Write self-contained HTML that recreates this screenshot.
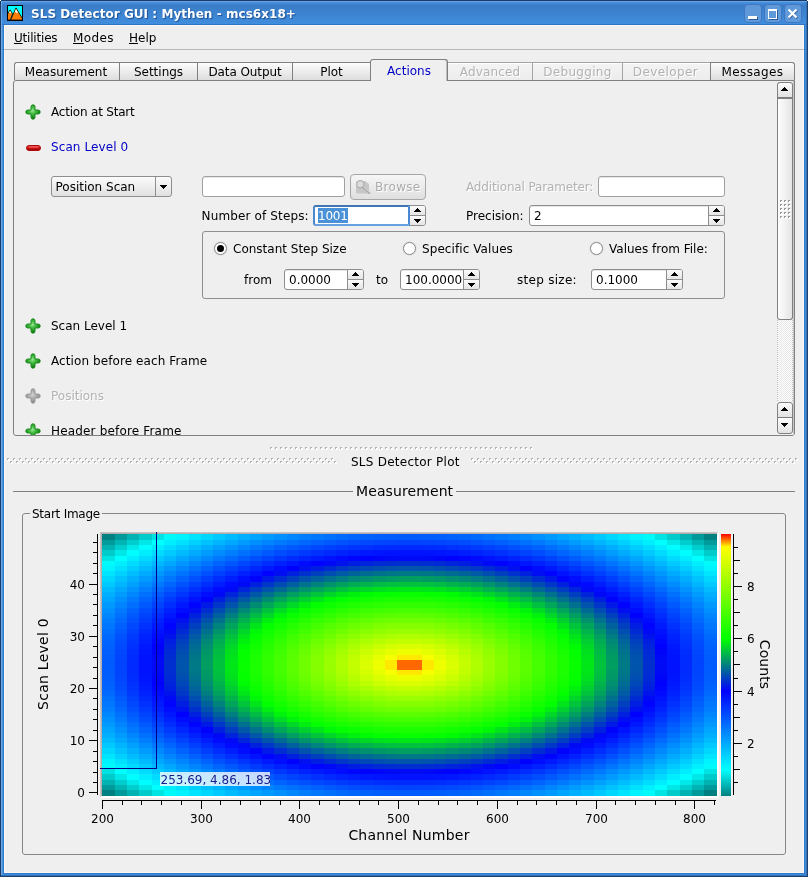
<!DOCTYPE html>
<html><head><meta charset="utf-8"><title>SLS Detector GUI</title>
<style>
html,body{margin:0;padding:0;}
body{will-change:transform;width:808px;height:877px;position:relative;overflow:hidden;background:#efefef;font-family:"DejaVu Sans","Liberation Sans",sans-serif;font-size:12px;color:#000;}
.a{position:absolute;}
.t{position:absolute;white-space:nowrap;line-height:14px;height:14px;}
#titlebar{left:0;top:0;width:808px;height:25px;background:linear-gradient(#1c3a63 0,#1c3a63 1px,#63a5ea 1px,#63a5ea 2px,#4791df 2px,#4489d5 3.5px,#3a7cc6 5.5px,#408ddd 23.5px,#408ddd 24px,#2e73c4 24px,#2e73c4 25px);}
#title{left:31px;top:7px;color:#fff;font-weight:bold;text-shadow:1px 1px 1px #1d4f93;letter-spacing:0.05px;}
.wb{position:absolute;top:4px;width:18px;height:19px;box-sizing:border-box;border:1px solid #3f78c2;border-radius:4px;background:#6099d9;}
.tab{position:absolute;top:62px;height:18px;box-sizing:border-box;border-left:1px solid #808080;border-top:1px solid #808080;background:linear-gradient(#fcfcfc,#dddddd);text-align:center;line-height:14px;padding-top:2px;}
.dis{color:#b2b2b2;text-shadow:1px 1px 0 #fff;}
.tab.dis{background:linear-gradient(#f4f4f4,#ececec);border-color:#a4a4a4;box-shadow:inset 0 1px 0 #fff;}
.le{position:absolute;box-sizing:border-box;border:1px solid #a0a0a0;border-radius:3px;background:#fff;height:21px;box-shadow:inset 0 1px 0 #e6e6e6;}
.sp{position:absolute;box-sizing:border-box;border:1px solid #8e8e8e;border-radius:3px;background:#fff;height:21px;box-shadow:inset 0 1px 0 #e6e6e6;}
.sp .b{position:absolute;right:0;top:0;width:15px;height:19px;border-left:1px solid #8e8e8e;background:linear-gradient(#fbfbfb 0,#e4e4e4 9px,#8e8e8e 9px,#8e8e8e 10px,#fbfbfb 10px,#e4e4e4 19px);border-radius:0 2px 2px 0;}
.sp .b svg{position:absolute;left:0;top:0;}
.sp .v{position:absolute;left:4px;top:3px;line-height:14px;}
.rb{position:absolute;width:13px;height:13px;box-sizing:border-box;border:1px solid #8a8a8a;border-radius:50%;background:#fff;box-shadow:0 0 1px 0.5px #d6d6d6;}
.plus{position:absolute;width:16px;height:16px;}
</style></head><body>
<div class="a" id="titlebar"></div>
<!-- window frame -->
<div class="a" style="left:0;top:1px;width:1px;height:876px;background:#1b3b63"></div>
<div class="a" style="left:1px;top:25px;width:1px;height:850px;background:#67a8ea"></div>
<div class="a" style="left:2px;top:25px;width:1px;height:849px;background:#4a92df"></div>
<div class="a" style="left:3px;top:25px;width:1px;height:848px;background:#2f7ccb"></div>
<div class="a" style="left:4px;top:25px;width:800px;height:848px;box-sizing:border-box;border:1px solid #fbf8f4"></div>
<div class="a" style="left:804px;top:25px;width:1px;height:848px;background:#2f7ccb"></div>
<div class="a" style="left:805px;top:25px;width:1px;height:849px;background:#418ddc"></div>
<div class="a" style="left:806px;top:2px;width:1px;height:873px;background:#3271b5"></div>
<div class="a" style="left:807px;top:1px;width:1px;height:876px;background:#1f426c"></div>
<div class="a" style="left:3px;top:873px;width:802px;height:1px;background:#2f7ccb"></div>
<div class="a" style="left:2px;top:874px;width:804px;height:1px;background:#418ddc"></div>
<div class="a" style="left:1px;top:875px;width:806px;height:1px;background:#3271b5"></div>
<div class="a" style="left:0;top:876px;width:808px;height:1px;background:#1f426c"></div>
<div class="a" style="left:1px;top:2px;width:1px;height:23px;background:#67a8ea"></div>

<div class="t" id="title">SLS Detector GUI : Mythen - mcs6x18+</div>
<svg class="a" style="left:7px;top:5px" width="16" height="16" viewBox="0 0 16 16"><rect width="16" height="16" fill="#000"/><rect x="1" y="1" width="14" height="14" fill="#00ffff"/><path d="M0.5 9.2 L3.1 4.9 L5.5 9 L3.4 15 H0.5 Z" fill="#ff8000" stroke="#000" stroke-width="0.8"/><path d="M3.6 15 L9 2.9 L15.4 13.6 V15 Z" fill="#ff8000" stroke="#000" stroke-width="0.8"/><path d="M9 4 L7.5 7.4 L8.7 7 L9.7 8.2 L10.7 7.8 L11 7.4 Z" fill="#fff"/><path d="M3.1 5.8 L1.8 8.2 L3 7.8 L3.9 8.4 L4.4 8 Z" fill="#fff"/><path d="M0.5 0.5H15.5V15.5H0.5Z" fill="none" stroke="#000" stroke-width="1"/></svg>
<div class="wb" style="left:744px"><div class="a" style="left:3px;top:10.5px;width:9px;height:3px;background:#fff;box-shadow:1px 1px 0 #2c5c9e"></div></div>
<div class="wb" style="left:764px"><div class="a" style="left:3px;top:3.5px;width:9px;height:10px;box-sizing:border-box;border:1px solid #fff;border-top-width:2px;box-shadow:1px 1px 0 #2c5c9e"></div></div>
<div class="wb" style="left:784px"><svg class="a" style="left:2px;top:3px" width="12" height="12"><path d="M2.2 2.2L10.2 10.2M10.2 2.2L2.2 10.2" stroke="#2c5c9e" stroke-width="2.2"/><path d="M1.5 1.5L9.5 9.5M9.5 1.5L1.5 9.5" stroke="#fff" stroke-width="2.2"/></svg></div>
<div class="a" style="left:0;top:0;width:1px;height:1px;background:#fff"></div><div class="a" style="left:807px;top:0;width:1px;height:1px;background:#fff"></div>

<!-- menu -->
<div class="t" style="left:14px;top:31px;letter-spacing:-0.2px"><u>U</u>tilities</div>
<div class="t" style="left:73px;top:31px;letter-spacing:0.4px"><u>M</u>odes</div>
<div class="t" style="left:129px;top:31px"><u>H</u>elp</div>
<div class="a" style="left:4px;top:49px;width:800px;height:1px;background:#b9b9b9"></div>

<!-- tab pane -->
<div class="a" style="left:13px;top:80px;width:782px;height:356px;box-sizing:border-box;border:1px solid #808080;border-radius:3px 0 3px 3px"></div>
<div class="tab" style="left:14px;width:105px;border-radius:3px 0 0 0;padding-right:2px">Measurement</div>
<div class="tab" style="left:119px;width:78px">Settings</div>
<div class="tab" style="left:197px;width:95px;letter-spacing:-0.1px">Data Output</div>
<div class="tab" style="left:292px;width:78px">Plot</div>
<div class="tab dis" style="left:447px;width:85px;letter-spacing:0.15px">Advanced</div>
<div class="tab dis" style="left:532px;width:90px;letter-spacing:0.3px">Debugging</div>
<div class="tab dis" style="left:622px;width:88px;letter-spacing:0.4px;padding-right:2px">Developer</div>
<div class="tab" style="left:710px;width:85px;border-right:1px solid #808080;border-radius:0 3px 0 0;letter-spacing:0.4px">Messages</div>
<div class="tab" style="left:370px;top:59px;width:78px;height:22px;background:#efefef;border-right:1px solid #808080;border-radius:3px 3px 0 0;color:#0000c8;padding-top:4px;box-shadow:inset -1px 0 0 #bdbdbd">Actions</div>

<!-- content -->
<div class="t" style="left:51px;top:105px;letter-spacing:-0.2px">Action at Start</div>
<div class="t" style="left:51px;top:140px;color:#0000c8;letter-spacing:0.1px">Scan Level 0</div>
<div class="t" style="left:51px;top:319px">Scan Level 1</div>
<div class="t" style="left:51px;top:354px;letter-spacing:0.09px">Action before each Frame</div>
<div class="t dis" style="left:51px;top:389px">Positions</div>
<div class="t" style="left:51px;top:424px;height:11px;overflow:hidden;letter-spacing:0.17px">Header before Frame</div>
<svg width="0" height="0" style="position:absolute"><defs><radialGradient id="gp" gradientUnits="userSpaceOnUse" cx="7.4" cy="6.6" r="8"><stop offset="0" stop-color="#9be895"/><stop offset="0.35" stop-color="#4cc04a"/><stop offset="0.75" stop-color="#1f9a22"/><stop offset="1" stop-color="#0e7412"/></radialGradient><radialGradient id="gg" gradientUnits="userSpaceOnUse" cx="7.4" cy="6.6" r="8"><stop offset="0" stop-color="#d2d2d2"/><stop offset="0.35" stop-color="#b6b6b6"/><stop offset="0.75" stop-color="#9c9c9c"/><stop offset="1" stop-color="#8a8a8a"/></radialGradient><linearGradient id="gm" x1="0" y1="0" x2="0" y2="1"><stop offset="0" stop-color="#f05050"/><stop offset="0.5" stop-color="#d41414"/><stop offset="1" stop-color="#8e0000"/></linearGradient></defs></svg>
<svg class="a" style="left:25px;top:104px" width="16" height="16" viewBox="0 0 16 16"><path d="M8 0.8a2 2 0 0 1 2 2v3.2h3.2a2 2 0 0 1 0 4h-3.2v3.2a2 2 0 0 1 -4 0v-3.2h-3.2a2 2 0 0 1 0 -4h3.2v-3.2a2 2 0 0 1 2 -2z" fill="url(#gp)" stroke="#1f8a1f" stroke-width="1"/></svg>
<svg class="a" style="left:26px;top:145px" width="15" height="6"><rect x="0.5" y="0.5" width="14" height="5" rx="2.5" fill="url(#gm)" stroke="#a80c0c" stroke-width="1"/><path d="M3 2h9" stroke="#f88" stroke-width="1" opacity="0.7"/></svg>
<svg class="a" style="left:25px;top:318px" width="16" height="16" viewBox="0 0 16 16"><path d="M8 0.8a2 2 0 0 1 2 2v3.2h3.2a2 2 0 0 1 0 4h-3.2v3.2a2 2 0 0 1 -4 0v-3.2h-3.2a2 2 0 0 1 0 -4h3.2v-3.2a2 2 0 0 1 2 -2z" fill="url(#gp)" stroke="#1f8a1f" stroke-width="1"/></svg>
<svg class="a" style="left:25px;top:353px" width="16" height="16" viewBox="0 0 16 16"><path d="M8 0.8a2 2 0 0 1 2 2v3.2h3.2a2 2 0 0 1 0 4h-3.2v3.2a2 2 0 0 1 -4 0v-3.2h-3.2a2 2 0 0 1 0 -4h3.2v-3.2a2 2 0 0 1 2 -2z" fill="url(#gp)" stroke="#1f8a1f" stroke-width="1"/></svg>
<svg class="a" style="left:25px;top:388px" width="16" height="16" viewBox="0 0 16 16"><path d="M8 0.8a2 2 0 0 1 2 2v3.2h3.2a2 2 0 0 1 0 4h-3.2v3.2a2 2 0 0 1 -4 0v-3.2h-3.2a2 2 0 0 1 0 -4h3.2v-3.2a2 2 0 0 1 2 -2z" fill="url(#gg)" stroke="#989898" stroke-width="1"/></svg>
<svg class="a" style="left:25px;top:423px" width="16" height="12" viewBox="0 0 16 12"><path d="M8 0.8a2 2 0 0 1 2 2v3.2h3.2a2 2 0 0 1 0 4h-3.2v3.2a2 2 0 0 1 -4 0v-3.2h-3.2a2 2 0 0 1 0 -4h3.2v-3.2a2 2 0 0 1 2 -2z" fill="url(#gp)" stroke="#1f8a1f" stroke-width="1"/></svg>

<!-- combo -->
<div class="a" style="left:51px;top:176px;width:121px;height:21px;box-sizing:border-box;border:1px solid #8e8e8e;border-radius:3px;background:linear-gradient(#fbfbfb,#e1e1e1)"></div>
<div class="a" style="left:155px;top:177px;width:1px;height:19px;background:#8e8e8e"></div>
<svg class="a" style="left:160px;top:185px" width="7" height="4" shape-rendering="crispEdges"><path d="M0 0h7v1h-7zM1 1h5v1h-5zM2 2h3v1h-3zM3 3h1v1h-1z" fill="#000"/></svg>
<div class="t" style="left:55.5px;top:180px">Position Scan</div>

<div class="le" style="left:202px;top:176px;width:143px"></div>
<!-- browse -->
<div class="a" style="left:350px;top:174px;width:76px;height:26px;box-sizing:border-box;border:1px solid #a6a6a6;border-radius:4px;background:linear-gradient(#f6f6f6,#dfdfdf)"></div>
<div class="t dis" style="left:375px;top:180px;letter-spacing:0.3px;color:#acacac">Browse</div>
<svg class="a" style="left:355px;top:179px" width="16" height="16" viewBox="0 0 16 16"><path d="M1 3.5 Q1 2 2.5 2 H10 L14 5 V13 Q14 14.5 12.5 14.5 H2.5 Q1 14.5 1 13 Z" fill="#c6c6c6"/><circle cx="5.3" cy="5.3" r="3.6" fill="#dcdcdc" stroke="#b0b0b0" stroke-width="1.2"/><path d="M8 8 L14.5 14" stroke="#aaa" stroke-width="2" stroke-linecap="round"/><path d="M8.6 7.6 L14.8 13.4" stroke="#e9e9e9" stroke-width="0.8"/></svg>

<div class="t dis" style="left:466px;top:180px;letter-spacing:-0.15px">Additional Parameter:</div>
<div class="le" style="left:598px;top:176px;width:127px"></div>

<div class="t" style="left:201.6px;top:209px;letter-spacing:0.13px">Number of Steps:</div>
<!-- focused spin -->
<div class="sp" style="left:313px;top:205px;width:113px"><div class="b"><svg width="15" height="19" shape-rendering="crispEdges"><path d="M7 2h1v1h-1zM6 3h3v1h-3zM5 4h5v1h-5zM4 5h7v1h-7zM4 13h7v1h-7zM5 14h5v1h-5zM6 15h3v1h-3zM7 16h1v1h-1z" fill="#000"/></svg></div></div>
<div class="a" style="left:313px;top:205px;width:97px;height:21px;box-sizing:border-box;border:2px solid #4a88d0;border-top-color:#3f76b4;border-bottom-color:#69a2e2;border-radius:3px 0 0 3px;background:#fff"></div>
<div class="a" style="left:318px;top:208px;width:30px;height:15px;background:#4b91d8"></div>
<div class="t" style="left:318px;top:209px;color:#fff;letter-spacing:-0.25px">1001</div>

<div class="t" style="left:466px;top:209px">Precision:</div>
<div class="sp" style="left:529px;top:205px;width:196px"><div class="v">2</div><div class="b"><svg width="15" height="19" shape-rendering="crispEdges"><path d="M7 2h1v1h-1zM6 3h3v1h-3zM5 4h5v1h-5zM4 5h7v1h-7zM4 13h7v1h-7zM5 14h5v1h-5zM6 15h3v1h-3zM7 16h1v1h-1z" fill="#000"/></svg></div></div>

<!-- group -->
<div class="a" style="left:202px;top:231px;width:523px;height:68px;box-sizing:border-box;border:1px solid #8e8e8e;border-radius:3px"></div>
<div class="rb" style="left:214px;top:242px"><div class="a" style="left:2px;top:2px;width:7px;height:7px;border-radius:50%;background:#000"></div></div>
<div class="t" style="left:233px;top:242px">Constant Step Size</div>
<div class="rb" style="left:403px;top:242px"></div>
<div class="t" style="left:422px;top:242px;letter-spacing:0.08px">Specific Values</div>
<div class="rb" style="left:590px;top:242px"></div>
<div class="t" style="left:609px;top:242px">Values from File:</div>
<div class="t" style="left:244px;top:273px">from</div>
<div class="sp" style="left:284px;top:269px;width:80px"><div class="v">0.0000</div><div class="b"><svg width="15" height="19" shape-rendering="crispEdges"><path d="M7 2h1v1h-1zM6 3h3v1h-3zM5 4h5v1h-5zM4 5h7v1h-7zM4 13h7v1h-7zM5 14h5v1h-5zM6 15h3v1h-3zM7 16h1v1h-1z" fill="#000"/></svg></div></div>
<div class="t" style="left:376px;top:273px">to</div>
<div class="sp" style="left:400px;top:269px;width:80px"><div class="v">100.0000</div><div class="b"><svg width="15" height="19" shape-rendering="crispEdges"><path d="M7 2h1v1h-1zM6 3h3v1h-3zM5 4h5v1h-5zM4 5h7v1h-7zM4 13h7v1h-7zM5 14h5v1h-5zM6 15h3v1h-3zM7 16h1v1h-1z" fill="#000"/></svg></div></div>
<div class="t" style="left:517px;top:273px;letter-spacing:0.28px">step size:</div>
<div class="sp" style="left:591px;top:269px;width:92px"><div class="v">0.1000</div><div class="b"><svg width="15" height="19" shape-rendering="crispEdges"><path d="M7 2h1v1h-1zM6 3h3v1h-3zM5 4h5v1h-5zM4 5h7v1h-7zM4 13h7v1h-7zM5 14h5v1h-5zM6 15h3v1h-3zM7 16h1v1h-1z" fill="#000"/></svg></div></div>

<!-- scrollbar -->
<div class="a" style="left:777px;top:82px;width:16px;height:352px;background:conic-gradient(#e6e6e6 25%,#ffffff 0 50%,#e6e6e6 0 75%,#ffffff 0) 0 0/2px 2px"></div>
<div class="a" style="left:777px;top:320px;width:1px;height:82px;background:repeating-linear-gradient(#c4c4c4 0,#c4c4c4 1px,#f4f4f4 1px,#f4f4f4 2px)"></div>
<div class="a" style="left:792px;top:320px;width:1px;height:82px;background:repeating-linear-gradient(#c4c4c4 0,#c4c4c4 1px,#f4f4f4 1px,#f4f4f4 2px)"></div>
<div class="a" style="left:793px;top:81px;width:1px;height:354px;background:#c6c6c6"></div>
<div style="position:absolute;left:777px;width:16px;box-sizing:border-box;border:1px solid #808080;background:linear-gradient(#fcfcfc,#e2e2e2);top:82px;height:17px;border-bottom-width:2px;border-radius:3px 3px 0 0"><svg class="a" style="left:3px;top:4px" width="7" height="4" shape-rendering="crispEdges"><path d="M3 0h1v1h-1zM2 1h3v1h-3zM1 2h5v1h-5zM0 3h7v1h-7z" fill="#000"/></svg></div>
<div style="position:absolute;left:777px;width:16px;box-sizing:border-box;border:1px solid #808080;background:linear-gradient(#fcfcfc,#e2e2e2);top:99px;height:221px;border-top:none;border-radius:0 0 3px 3px;background:linear-gradient(90deg,#fefefe,#e4e4e4)"></div>
<svg class="a" style="left:778px;top:198px" width="14" height="22" shape-rendering="crispEdges"><rect x="2" y="2" width="2" height="2" fill="#9a9a9a"/><rect x="3" y="3" width="2" height="2" fill="#fff"/><rect x="6" y="2" width="2" height="2" fill="#9a9a9a"/><rect x="7" y="3" width="2" height="2" fill="#fff"/><rect x="10" y="2" width="2" height="2" fill="#9a9a9a"/><rect x="11" y="3" width="2" height="2" fill="#fff"/><rect x="2" y="6" width="2" height="2" fill="#9a9a9a"/><rect x="3" y="7" width="2" height="2" fill="#fff"/><rect x="6" y="6" width="2" height="2" fill="#9a9a9a"/><rect x="7" y="7" width="2" height="2" fill="#fff"/><rect x="10" y="6" width="2" height="2" fill="#9a9a9a"/><rect x="11" y="7" width="2" height="2" fill="#fff"/><rect x="2" y="10" width="2" height="2" fill="#9a9a9a"/><rect x="3" y="11" width="2" height="2" fill="#fff"/><rect x="6" y="10" width="2" height="2" fill="#9a9a9a"/><rect x="7" y="11" width="2" height="2" fill="#fff"/><rect x="10" y="10" width="2" height="2" fill="#9a9a9a"/><rect x="11" y="11" width="2" height="2" fill="#fff"/><rect x="2" y="14" width="2" height="2" fill="#9a9a9a"/><rect x="3" y="15" width="2" height="2" fill="#fff"/><rect x="6" y="14" width="2" height="2" fill="#9a9a9a"/><rect x="7" y="15" width="2" height="2" fill="#fff"/><rect x="10" y="14" width="2" height="2" fill="#9a9a9a"/><rect x="11" y="15" width="2" height="2" fill="#fff"/><rect x="2" y="18" width="2" height="2" fill="#9a9a9a"/><rect x="3" y="19" width="2" height="2" fill="#fff"/><rect x="6" y="18" width="2" height="2" fill="#9a9a9a"/><rect x="7" y="19" width="2" height="2" fill="#fff"/><rect x="10" y="18" width="2" height="2" fill="#9a9a9a"/><rect x="11" y="19" width="2" height="2" fill="#fff"/></svg>
<div style="position:absolute;left:777px;width:16px;box-sizing:border-box;border:1px solid #808080;background:linear-gradient(#fcfcfc,#e2e2e2);top:402px;height:16px;border-radius:3px 3px 0 0"><svg class="a" style="left:3px;top:4px" width="7" height="4" shape-rendering="crispEdges"><path d="M3 0h1v1h-1zM2 1h3v1h-3zM1 2h5v1h-5zM0 3h7v1h-7z" fill="#000"/></svg></div>
<div style="position:absolute;left:777px;width:16px;box-sizing:border-box;border:1px solid #808080;background:linear-gradient(#fcfcfc,#e2e2e2);top:417px;height:17px;border-radius:0 0 3px 3px"><svg class="a" style="left:3px;top:5px" width="7" height="4" shape-rendering="crispEdges"><path d="M0 0h7v1h-7zM1 1h5v1h-5zM2 2h3v1h-3zM3 3h1v1h-1z" fill="#000"/></svg></div>

<!-- dock title -->
<svg class="a" style="left:270px;top:447px" width="266" height="3" shape-rendering="crispEdges"><rect x="0" y="0" width="2" height="2" fill="#b2b2b2"/><rect x="1" y="1" width="2" height="2" fill="#fff"/><rect x="5" y="0" width="2" height="2" fill="#b2b2b2"/><rect x="6" y="1" width="2" height="2" fill="#fff"/><rect x="10" y="0" width="2" height="2" fill="#b2b2b2"/><rect x="11" y="1" width="2" height="2" fill="#fff"/><rect x="15" y="0" width="2" height="2" fill="#b2b2b2"/><rect x="16" y="1" width="2" height="2" fill="#fff"/><rect x="20" y="0" width="2" height="2" fill="#b2b2b2"/><rect x="21" y="1" width="2" height="2" fill="#fff"/><rect x="25" y="0" width="2" height="2" fill="#b2b2b2"/><rect x="26" y="1" width="2" height="2" fill="#fff"/><rect x="30" y="0" width="2" height="2" fill="#b2b2b2"/><rect x="31" y="1" width="2" height="2" fill="#fff"/><rect x="35" y="0" width="2" height="2" fill="#b2b2b2"/><rect x="36" y="1" width="2" height="2" fill="#fff"/><rect x="40" y="0" width="2" height="2" fill="#b2b2b2"/><rect x="41" y="1" width="2" height="2" fill="#fff"/><rect x="45" y="0" width="2" height="2" fill="#b2b2b2"/><rect x="46" y="1" width="2" height="2" fill="#fff"/><rect x="50" y="0" width="2" height="2" fill="#b2b2b2"/><rect x="51" y="1" width="2" height="2" fill="#fff"/><rect x="55" y="0" width="2" height="2" fill="#b2b2b2"/><rect x="56" y="1" width="2" height="2" fill="#fff"/><rect x="60" y="0" width="2" height="2" fill="#b2b2b2"/><rect x="61" y="1" width="2" height="2" fill="#fff"/><rect x="65" y="0" width="2" height="2" fill="#b2b2b2"/><rect x="66" y="1" width="2" height="2" fill="#fff"/><rect x="70" y="0" width="2" height="2" fill="#b2b2b2"/><rect x="71" y="1" width="2" height="2" fill="#fff"/><rect x="75" y="0" width="2" height="2" fill="#b2b2b2"/><rect x="76" y="1" width="2" height="2" fill="#fff"/><rect x="80" y="0" width="2" height="2" fill="#b2b2b2"/><rect x="81" y="1" width="2" height="2" fill="#fff"/><rect x="85" y="0" width="2" height="2" fill="#b2b2b2"/><rect x="86" y="1" width="2" height="2" fill="#fff"/><rect x="90" y="0" width="2" height="2" fill="#b2b2b2"/><rect x="91" y="1" width="2" height="2" fill="#fff"/><rect x="95" y="0" width="2" height="2" fill="#b2b2b2"/><rect x="96" y="1" width="2" height="2" fill="#fff"/><rect x="100" y="0" width="2" height="2" fill="#b2b2b2"/><rect x="101" y="1" width="2" height="2" fill="#fff"/><rect x="105" y="0" width="2" height="2" fill="#b2b2b2"/><rect x="106" y="1" width="2" height="2" fill="#fff"/><rect x="110" y="0" width="2" height="2" fill="#b2b2b2"/><rect x="111" y="1" width="2" height="2" fill="#fff"/><rect x="115" y="0" width="2" height="2" fill="#b2b2b2"/><rect x="116" y="1" width="2" height="2" fill="#fff"/><rect x="120" y="0" width="2" height="2" fill="#b2b2b2"/><rect x="121" y="1" width="2" height="2" fill="#fff"/><rect x="125" y="0" width="2" height="2" fill="#b2b2b2"/><rect x="126" y="1" width="2" height="2" fill="#fff"/><rect x="130" y="0" width="2" height="2" fill="#b2b2b2"/><rect x="131" y="1" width="2" height="2" fill="#fff"/><rect x="135" y="0" width="2" height="2" fill="#b2b2b2"/><rect x="136" y="1" width="2" height="2" fill="#fff"/><rect x="140" y="0" width="2" height="2" fill="#b2b2b2"/><rect x="141" y="1" width="2" height="2" fill="#fff"/><rect x="145" y="0" width="2" height="2" fill="#b2b2b2"/><rect x="146" y="1" width="2" height="2" fill="#fff"/><rect x="150" y="0" width="2" height="2" fill="#b2b2b2"/><rect x="151" y="1" width="2" height="2" fill="#fff"/><rect x="155" y="0" width="2" height="2" fill="#b2b2b2"/><rect x="156" y="1" width="2" height="2" fill="#fff"/><rect x="160" y="0" width="2" height="2" fill="#b2b2b2"/><rect x="161" y="1" width="2" height="2" fill="#fff"/><rect x="165" y="0" width="2" height="2" fill="#b2b2b2"/><rect x="166" y="1" width="2" height="2" fill="#fff"/><rect x="170" y="0" width="2" height="2" fill="#b2b2b2"/><rect x="171" y="1" width="2" height="2" fill="#fff"/><rect x="175" y="0" width="2" height="2" fill="#b2b2b2"/><rect x="176" y="1" width="2" height="2" fill="#fff"/><rect x="180" y="0" width="2" height="2" fill="#b2b2b2"/><rect x="181" y="1" width="2" height="2" fill="#fff"/><rect x="185" y="0" width="2" height="2" fill="#b2b2b2"/><rect x="186" y="1" width="2" height="2" fill="#fff"/><rect x="190" y="0" width="2" height="2" fill="#b2b2b2"/><rect x="191" y="1" width="2" height="2" fill="#fff"/><rect x="195" y="0" width="2" height="2" fill="#b2b2b2"/><rect x="196" y="1" width="2" height="2" fill="#fff"/><rect x="200" y="0" width="2" height="2" fill="#b2b2b2"/><rect x="201" y="1" width="2" height="2" fill="#fff"/><rect x="205" y="0" width="2" height="2" fill="#b2b2b2"/><rect x="206" y="1" width="2" height="2" fill="#fff"/><rect x="210" y="0" width="2" height="2" fill="#b2b2b2"/><rect x="211" y="1" width="2" height="2" fill="#fff"/><rect x="215" y="0" width="2" height="2" fill="#b2b2b2"/><rect x="216" y="1" width="2" height="2" fill="#fff"/><rect x="220" y="0" width="2" height="2" fill="#b2b2b2"/><rect x="221" y="1" width="2" height="2" fill="#fff"/><rect x="225" y="0" width="2" height="2" fill="#b2b2b2"/><rect x="226" y="1" width="2" height="2" fill="#fff"/><rect x="230" y="0" width="2" height="2" fill="#b2b2b2"/><rect x="231" y="1" width="2" height="2" fill="#fff"/><rect x="235" y="0" width="2" height="2" fill="#b2b2b2"/><rect x="236" y="1" width="2" height="2" fill="#fff"/><rect x="240" y="0" width="2" height="2" fill="#b2b2b2"/><rect x="241" y="1" width="2" height="2" fill="#fff"/><rect x="245" y="0" width="2" height="2" fill="#b2b2b2"/><rect x="246" y="1" width="2" height="2" fill="#fff"/><rect x="250" y="0" width="2" height="2" fill="#b2b2b2"/><rect x="251" y="1" width="2" height="2" fill="#fff"/><rect x="255" y="0" width="2" height="2" fill="#b2b2b2"/><rect x="256" y="1" width="2" height="2" fill="#fff"/><rect x="260" y="0" width="2" height="2" fill="#b2b2b2"/><rect x="261" y="1" width="2" height="2" fill="#fff"/></svg>
<svg class="a" style="left:7px;top:458px" width="333" height="6" shape-rendering="crispEdges"><rect x="0" y="0" width="2" height="2" fill="#b2b2b2"/><rect x="1" y="1" width="2" height="2" fill="#fff"/><rect x="3" y="3" width="2" height="2" fill="#b2b2b2"/><rect x="4" y="4" width="2" height="2" fill="#fff"/><rect x="6" y="0" width="2" height="2" fill="#b2b2b2"/><rect x="7" y="1" width="2" height="2" fill="#fff"/><rect x="9" y="3" width="2" height="2" fill="#b2b2b2"/><rect x="10" y="4" width="2" height="2" fill="#fff"/><rect x="12" y="0" width="2" height="2" fill="#b2b2b2"/><rect x="13" y="1" width="2" height="2" fill="#fff"/><rect x="15" y="3" width="2" height="2" fill="#b2b2b2"/><rect x="16" y="4" width="2" height="2" fill="#fff"/><rect x="18" y="0" width="2" height="2" fill="#b2b2b2"/><rect x="19" y="1" width="2" height="2" fill="#fff"/><rect x="21" y="3" width="2" height="2" fill="#b2b2b2"/><rect x="22" y="4" width="2" height="2" fill="#fff"/><rect x="24" y="0" width="2" height="2" fill="#b2b2b2"/><rect x="25" y="1" width="2" height="2" fill="#fff"/><rect x="27" y="3" width="2" height="2" fill="#b2b2b2"/><rect x="28" y="4" width="2" height="2" fill="#fff"/><rect x="30" y="0" width="2" height="2" fill="#b2b2b2"/><rect x="31" y="1" width="2" height="2" fill="#fff"/><rect x="33" y="3" width="2" height="2" fill="#b2b2b2"/><rect x="34" y="4" width="2" height="2" fill="#fff"/><rect x="36" y="0" width="2" height="2" fill="#b2b2b2"/><rect x="37" y="1" width="2" height="2" fill="#fff"/><rect x="39" y="3" width="2" height="2" fill="#b2b2b2"/><rect x="40" y="4" width="2" height="2" fill="#fff"/><rect x="42" y="0" width="2" height="2" fill="#b2b2b2"/><rect x="43" y="1" width="2" height="2" fill="#fff"/><rect x="45" y="3" width="2" height="2" fill="#b2b2b2"/><rect x="46" y="4" width="2" height="2" fill="#fff"/><rect x="48" y="0" width="2" height="2" fill="#b2b2b2"/><rect x="49" y="1" width="2" height="2" fill="#fff"/><rect x="51" y="3" width="2" height="2" fill="#b2b2b2"/><rect x="52" y="4" width="2" height="2" fill="#fff"/><rect x="54" y="0" width="2" height="2" fill="#b2b2b2"/><rect x="55" y="1" width="2" height="2" fill="#fff"/><rect x="57" y="3" width="2" height="2" fill="#b2b2b2"/><rect x="58" y="4" width="2" height="2" fill="#fff"/><rect x="60" y="0" width="2" height="2" fill="#b2b2b2"/><rect x="61" y="1" width="2" height="2" fill="#fff"/><rect x="63" y="3" width="2" height="2" fill="#b2b2b2"/><rect x="64" y="4" width="2" height="2" fill="#fff"/><rect x="66" y="0" width="2" height="2" fill="#b2b2b2"/><rect x="67" y="1" width="2" height="2" fill="#fff"/><rect x="69" y="3" width="2" height="2" fill="#b2b2b2"/><rect x="70" y="4" width="2" height="2" fill="#fff"/><rect x="72" y="0" width="2" height="2" fill="#b2b2b2"/><rect x="73" y="1" width="2" height="2" fill="#fff"/><rect x="75" y="3" width="2" height="2" fill="#b2b2b2"/><rect x="76" y="4" width="2" height="2" fill="#fff"/><rect x="78" y="0" width="2" height="2" fill="#b2b2b2"/><rect x="79" y="1" width="2" height="2" fill="#fff"/><rect x="81" y="3" width="2" height="2" fill="#b2b2b2"/><rect x="82" y="4" width="2" height="2" fill="#fff"/><rect x="84" y="0" width="2" height="2" fill="#b2b2b2"/><rect x="85" y="1" width="2" height="2" fill="#fff"/><rect x="87" y="3" width="2" height="2" fill="#b2b2b2"/><rect x="88" y="4" width="2" height="2" fill="#fff"/><rect x="90" y="0" width="2" height="2" fill="#b2b2b2"/><rect x="91" y="1" width="2" height="2" fill="#fff"/><rect x="93" y="3" width="2" height="2" fill="#b2b2b2"/><rect x="94" y="4" width="2" height="2" fill="#fff"/><rect x="96" y="0" width="2" height="2" fill="#b2b2b2"/><rect x="97" y="1" width="2" height="2" fill="#fff"/><rect x="99" y="3" width="2" height="2" fill="#b2b2b2"/><rect x="100" y="4" width="2" height="2" fill="#fff"/><rect x="102" y="0" width="2" height="2" fill="#b2b2b2"/><rect x="103" y="1" width="2" height="2" fill="#fff"/><rect x="105" y="3" width="2" height="2" fill="#b2b2b2"/><rect x="106" y="4" width="2" height="2" fill="#fff"/><rect x="108" y="0" width="2" height="2" fill="#b2b2b2"/><rect x="109" y="1" width="2" height="2" fill="#fff"/><rect x="111" y="3" width="2" height="2" fill="#b2b2b2"/><rect x="112" y="4" width="2" height="2" fill="#fff"/><rect x="114" y="0" width="2" height="2" fill="#b2b2b2"/><rect x="115" y="1" width="2" height="2" fill="#fff"/><rect x="117" y="3" width="2" height="2" fill="#b2b2b2"/><rect x="118" y="4" width="2" height="2" fill="#fff"/><rect x="120" y="0" width="2" height="2" fill="#b2b2b2"/><rect x="121" y="1" width="2" height="2" fill="#fff"/><rect x="123" y="3" width="2" height="2" fill="#b2b2b2"/><rect x="124" y="4" width="2" height="2" fill="#fff"/><rect x="126" y="0" width="2" height="2" fill="#b2b2b2"/><rect x="127" y="1" width="2" height="2" fill="#fff"/><rect x="129" y="3" width="2" height="2" fill="#b2b2b2"/><rect x="130" y="4" width="2" height="2" fill="#fff"/><rect x="132" y="0" width="2" height="2" fill="#b2b2b2"/><rect x="133" y="1" width="2" height="2" fill="#fff"/><rect x="135" y="3" width="2" height="2" fill="#b2b2b2"/><rect x="136" y="4" width="2" height="2" fill="#fff"/><rect x="138" y="0" width="2" height="2" fill="#b2b2b2"/><rect x="139" y="1" width="2" height="2" fill="#fff"/><rect x="141" y="3" width="2" height="2" fill="#b2b2b2"/><rect x="142" y="4" width="2" height="2" fill="#fff"/><rect x="144" y="0" width="2" height="2" fill="#b2b2b2"/><rect x="145" y="1" width="2" height="2" fill="#fff"/><rect x="147" y="3" width="2" height="2" fill="#b2b2b2"/><rect x="148" y="4" width="2" height="2" fill="#fff"/><rect x="150" y="0" width="2" height="2" fill="#b2b2b2"/><rect x="151" y="1" width="2" height="2" fill="#fff"/><rect x="153" y="3" width="2" height="2" fill="#b2b2b2"/><rect x="154" y="4" width="2" height="2" fill="#fff"/><rect x="156" y="0" width="2" height="2" fill="#b2b2b2"/><rect x="157" y="1" width="2" height="2" fill="#fff"/><rect x="159" y="3" width="2" height="2" fill="#b2b2b2"/><rect x="160" y="4" width="2" height="2" fill="#fff"/><rect x="162" y="0" width="2" height="2" fill="#b2b2b2"/><rect x="163" y="1" width="2" height="2" fill="#fff"/><rect x="165" y="3" width="2" height="2" fill="#b2b2b2"/><rect x="166" y="4" width="2" height="2" fill="#fff"/><rect x="168" y="0" width="2" height="2" fill="#b2b2b2"/><rect x="169" y="1" width="2" height="2" fill="#fff"/><rect x="171" y="3" width="2" height="2" fill="#b2b2b2"/><rect x="172" y="4" width="2" height="2" fill="#fff"/><rect x="174" y="0" width="2" height="2" fill="#b2b2b2"/><rect x="175" y="1" width="2" height="2" fill="#fff"/><rect x="177" y="3" width="2" height="2" fill="#b2b2b2"/><rect x="178" y="4" width="2" height="2" fill="#fff"/><rect x="180" y="0" width="2" height="2" fill="#b2b2b2"/><rect x="181" y="1" width="2" height="2" fill="#fff"/><rect x="183" y="3" width="2" height="2" fill="#b2b2b2"/><rect x="184" y="4" width="2" height="2" fill="#fff"/><rect x="186" y="0" width="2" height="2" fill="#b2b2b2"/><rect x="187" y="1" width="2" height="2" fill="#fff"/><rect x="189" y="3" width="2" height="2" fill="#b2b2b2"/><rect x="190" y="4" width="2" height="2" fill="#fff"/><rect x="192" y="0" width="2" height="2" fill="#b2b2b2"/><rect x="193" y="1" width="2" height="2" fill="#fff"/><rect x="195" y="3" width="2" height="2" fill="#b2b2b2"/><rect x="196" y="4" width="2" height="2" fill="#fff"/><rect x="198" y="0" width="2" height="2" fill="#b2b2b2"/><rect x="199" y="1" width="2" height="2" fill="#fff"/><rect x="201" y="3" width="2" height="2" fill="#b2b2b2"/><rect x="202" y="4" width="2" height="2" fill="#fff"/><rect x="204" y="0" width="2" height="2" fill="#b2b2b2"/><rect x="205" y="1" width="2" height="2" fill="#fff"/><rect x="207" y="3" width="2" height="2" fill="#b2b2b2"/><rect x="208" y="4" width="2" height="2" fill="#fff"/><rect x="210" y="0" width="2" height="2" fill="#b2b2b2"/><rect x="211" y="1" width="2" height="2" fill="#fff"/><rect x="213" y="3" width="2" height="2" fill="#b2b2b2"/><rect x="214" y="4" width="2" height="2" fill="#fff"/><rect x="216" y="0" width="2" height="2" fill="#b2b2b2"/><rect x="217" y="1" width="2" height="2" fill="#fff"/><rect x="219" y="3" width="2" height="2" fill="#b2b2b2"/><rect x="220" y="4" width="2" height="2" fill="#fff"/><rect x="222" y="0" width="2" height="2" fill="#b2b2b2"/><rect x="223" y="1" width="2" height="2" fill="#fff"/><rect x="225" y="3" width="2" height="2" fill="#b2b2b2"/><rect x="226" y="4" width="2" height="2" fill="#fff"/><rect x="228" y="0" width="2" height="2" fill="#b2b2b2"/><rect x="229" y="1" width="2" height="2" fill="#fff"/><rect x="231" y="3" width="2" height="2" fill="#b2b2b2"/><rect x="232" y="4" width="2" height="2" fill="#fff"/><rect x="234" y="0" width="2" height="2" fill="#b2b2b2"/><rect x="235" y="1" width="2" height="2" fill="#fff"/><rect x="237" y="3" width="2" height="2" fill="#b2b2b2"/><rect x="238" y="4" width="2" height="2" fill="#fff"/><rect x="240" y="0" width="2" height="2" fill="#b2b2b2"/><rect x="241" y="1" width="2" height="2" fill="#fff"/><rect x="243" y="3" width="2" height="2" fill="#b2b2b2"/><rect x="244" y="4" width="2" height="2" fill="#fff"/><rect x="246" y="0" width="2" height="2" fill="#b2b2b2"/><rect x="247" y="1" width="2" height="2" fill="#fff"/><rect x="249" y="3" width="2" height="2" fill="#b2b2b2"/><rect x="250" y="4" width="2" height="2" fill="#fff"/><rect x="252" y="0" width="2" height="2" fill="#b2b2b2"/><rect x="253" y="1" width="2" height="2" fill="#fff"/><rect x="255" y="3" width="2" height="2" fill="#b2b2b2"/><rect x="256" y="4" width="2" height="2" fill="#fff"/><rect x="258" y="0" width="2" height="2" fill="#b2b2b2"/><rect x="259" y="1" width="2" height="2" fill="#fff"/><rect x="261" y="3" width="2" height="2" fill="#b2b2b2"/><rect x="262" y="4" width="2" height="2" fill="#fff"/><rect x="264" y="0" width="2" height="2" fill="#b2b2b2"/><rect x="265" y="1" width="2" height="2" fill="#fff"/><rect x="267" y="3" width="2" height="2" fill="#b2b2b2"/><rect x="268" y="4" width="2" height="2" fill="#fff"/><rect x="270" y="0" width="2" height="2" fill="#b2b2b2"/><rect x="271" y="1" width="2" height="2" fill="#fff"/><rect x="273" y="3" width="2" height="2" fill="#b2b2b2"/><rect x="274" y="4" width="2" height="2" fill="#fff"/><rect x="276" y="0" width="2" height="2" fill="#b2b2b2"/><rect x="277" y="1" width="2" height="2" fill="#fff"/><rect x="279" y="3" width="2" height="2" fill="#b2b2b2"/><rect x="280" y="4" width="2" height="2" fill="#fff"/><rect x="282" y="0" width="2" height="2" fill="#b2b2b2"/><rect x="283" y="1" width="2" height="2" fill="#fff"/><rect x="285" y="3" width="2" height="2" fill="#b2b2b2"/><rect x="286" y="4" width="2" height="2" fill="#fff"/><rect x="288" y="0" width="2" height="2" fill="#b2b2b2"/><rect x="289" y="1" width="2" height="2" fill="#fff"/><rect x="291" y="3" width="2" height="2" fill="#b2b2b2"/><rect x="292" y="4" width="2" height="2" fill="#fff"/><rect x="294" y="0" width="2" height="2" fill="#b2b2b2"/><rect x="295" y="1" width="2" height="2" fill="#fff"/><rect x="297" y="3" width="2" height="2" fill="#b2b2b2"/><rect x="298" y="4" width="2" height="2" fill="#fff"/><rect x="300" y="0" width="2" height="2" fill="#b2b2b2"/><rect x="301" y="1" width="2" height="2" fill="#fff"/><rect x="303" y="3" width="2" height="2" fill="#b2b2b2"/><rect x="304" y="4" width="2" height="2" fill="#fff"/><rect x="306" y="0" width="2" height="2" fill="#b2b2b2"/><rect x="307" y="1" width="2" height="2" fill="#fff"/><rect x="309" y="3" width="2" height="2" fill="#b2b2b2"/><rect x="310" y="4" width="2" height="2" fill="#fff"/><rect x="312" y="0" width="2" height="2" fill="#b2b2b2"/><rect x="313" y="1" width="2" height="2" fill="#fff"/><rect x="315" y="3" width="2" height="2" fill="#b2b2b2"/><rect x="316" y="4" width="2" height="2" fill="#fff"/><rect x="318" y="0" width="2" height="2" fill="#b2b2b2"/><rect x="319" y="1" width="2" height="2" fill="#fff"/><rect x="321" y="3" width="2" height="2" fill="#b2b2b2"/><rect x="322" y="4" width="2" height="2" fill="#fff"/><rect x="324" y="0" width="2" height="2" fill="#b2b2b2"/><rect x="325" y="1" width="2" height="2" fill="#fff"/><rect x="327" y="3" width="2" height="2" fill="#b2b2b2"/><rect x="328" y="4" width="2" height="2" fill="#fff"/></svg>
<svg class="a" style="left:471px;top:458px" width="332" height="6" shape-rendering="crispEdges"><rect x="0" y="0" width="2" height="2" fill="#b2b2b2"/><rect x="1" y="1" width="2" height="2" fill="#fff"/><rect x="3" y="3" width="2" height="2" fill="#b2b2b2"/><rect x="4" y="4" width="2" height="2" fill="#fff"/><rect x="6" y="0" width="2" height="2" fill="#b2b2b2"/><rect x="7" y="1" width="2" height="2" fill="#fff"/><rect x="9" y="3" width="2" height="2" fill="#b2b2b2"/><rect x="10" y="4" width="2" height="2" fill="#fff"/><rect x="12" y="0" width="2" height="2" fill="#b2b2b2"/><rect x="13" y="1" width="2" height="2" fill="#fff"/><rect x="15" y="3" width="2" height="2" fill="#b2b2b2"/><rect x="16" y="4" width="2" height="2" fill="#fff"/><rect x="18" y="0" width="2" height="2" fill="#b2b2b2"/><rect x="19" y="1" width="2" height="2" fill="#fff"/><rect x="21" y="3" width="2" height="2" fill="#b2b2b2"/><rect x="22" y="4" width="2" height="2" fill="#fff"/><rect x="24" y="0" width="2" height="2" fill="#b2b2b2"/><rect x="25" y="1" width="2" height="2" fill="#fff"/><rect x="27" y="3" width="2" height="2" fill="#b2b2b2"/><rect x="28" y="4" width="2" height="2" fill="#fff"/><rect x="30" y="0" width="2" height="2" fill="#b2b2b2"/><rect x="31" y="1" width="2" height="2" fill="#fff"/><rect x="33" y="3" width="2" height="2" fill="#b2b2b2"/><rect x="34" y="4" width="2" height="2" fill="#fff"/><rect x="36" y="0" width="2" height="2" fill="#b2b2b2"/><rect x="37" y="1" width="2" height="2" fill="#fff"/><rect x="39" y="3" width="2" height="2" fill="#b2b2b2"/><rect x="40" y="4" width="2" height="2" fill="#fff"/><rect x="42" y="0" width="2" height="2" fill="#b2b2b2"/><rect x="43" y="1" width="2" height="2" fill="#fff"/><rect x="45" y="3" width="2" height="2" fill="#b2b2b2"/><rect x="46" y="4" width="2" height="2" fill="#fff"/><rect x="48" y="0" width="2" height="2" fill="#b2b2b2"/><rect x="49" y="1" width="2" height="2" fill="#fff"/><rect x="51" y="3" width="2" height="2" fill="#b2b2b2"/><rect x="52" y="4" width="2" height="2" fill="#fff"/><rect x="54" y="0" width="2" height="2" fill="#b2b2b2"/><rect x="55" y="1" width="2" height="2" fill="#fff"/><rect x="57" y="3" width="2" height="2" fill="#b2b2b2"/><rect x="58" y="4" width="2" height="2" fill="#fff"/><rect x="60" y="0" width="2" height="2" fill="#b2b2b2"/><rect x="61" y="1" width="2" height="2" fill="#fff"/><rect x="63" y="3" width="2" height="2" fill="#b2b2b2"/><rect x="64" y="4" width="2" height="2" fill="#fff"/><rect x="66" y="0" width="2" height="2" fill="#b2b2b2"/><rect x="67" y="1" width="2" height="2" fill="#fff"/><rect x="69" y="3" width="2" height="2" fill="#b2b2b2"/><rect x="70" y="4" width="2" height="2" fill="#fff"/><rect x="72" y="0" width="2" height="2" fill="#b2b2b2"/><rect x="73" y="1" width="2" height="2" fill="#fff"/><rect x="75" y="3" width="2" height="2" fill="#b2b2b2"/><rect x="76" y="4" width="2" height="2" fill="#fff"/><rect x="78" y="0" width="2" height="2" fill="#b2b2b2"/><rect x="79" y="1" width="2" height="2" fill="#fff"/><rect x="81" y="3" width="2" height="2" fill="#b2b2b2"/><rect x="82" y="4" width="2" height="2" fill="#fff"/><rect x="84" y="0" width="2" height="2" fill="#b2b2b2"/><rect x="85" y="1" width="2" height="2" fill="#fff"/><rect x="87" y="3" width="2" height="2" fill="#b2b2b2"/><rect x="88" y="4" width="2" height="2" fill="#fff"/><rect x="90" y="0" width="2" height="2" fill="#b2b2b2"/><rect x="91" y="1" width="2" height="2" fill="#fff"/><rect x="93" y="3" width="2" height="2" fill="#b2b2b2"/><rect x="94" y="4" width="2" height="2" fill="#fff"/><rect x="96" y="0" width="2" height="2" fill="#b2b2b2"/><rect x="97" y="1" width="2" height="2" fill="#fff"/><rect x="99" y="3" width="2" height="2" fill="#b2b2b2"/><rect x="100" y="4" width="2" height="2" fill="#fff"/><rect x="102" y="0" width="2" height="2" fill="#b2b2b2"/><rect x="103" y="1" width="2" height="2" fill="#fff"/><rect x="105" y="3" width="2" height="2" fill="#b2b2b2"/><rect x="106" y="4" width="2" height="2" fill="#fff"/><rect x="108" y="0" width="2" height="2" fill="#b2b2b2"/><rect x="109" y="1" width="2" height="2" fill="#fff"/><rect x="111" y="3" width="2" height="2" fill="#b2b2b2"/><rect x="112" y="4" width="2" height="2" fill="#fff"/><rect x="114" y="0" width="2" height="2" fill="#b2b2b2"/><rect x="115" y="1" width="2" height="2" fill="#fff"/><rect x="117" y="3" width="2" height="2" fill="#b2b2b2"/><rect x="118" y="4" width="2" height="2" fill="#fff"/><rect x="120" y="0" width="2" height="2" fill="#b2b2b2"/><rect x="121" y="1" width="2" height="2" fill="#fff"/><rect x="123" y="3" width="2" height="2" fill="#b2b2b2"/><rect x="124" y="4" width="2" height="2" fill="#fff"/><rect x="126" y="0" width="2" height="2" fill="#b2b2b2"/><rect x="127" y="1" width="2" height="2" fill="#fff"/><rect x="129" y="3" width="2" height="2" fill="#b2b2b2"/><rect x="130" y="4" width="2" height="2" fill="#fff"/><rect x="132" y="0" width="2" height="2" fill="#b2b2b2"/><rect x="133" y="1" width="2" height="2" fill="#fff"/><rect x="135" y="3" width="2" height="2" fill="#b2b2b2"/><rect x="136" y="4" width="2" height="2" fill="#fff"/><rect x="138" y="0" width="2" height="2" fill="#b2b2b2"/><rect x="139" y="1" width="2" height="2" fill="#fff"/><rect x="141" y="3" width="2" height="2" fill="#b2b2b2"/><rect x="142" y="4" width="2" height="2" fill="#fff"/><rect x="144" y="0" width="2" height="2" fill="#b2b2b2"/><rect x="145" y="1" width="2" height="2" fill="#fff"/><rect x="147" y="3" width="2" height="2" fill="#b2b2b2"/><rect x="148" y="4" width="2" height="2" fill="#fff"/><rect x="150" y="0" width="2" height="2" fill="#b2b2b2"/><rect x="151" y="1" width="2" height="2" fill="#fff"/><rect x="153" y="3" width="2" height="2" fill="#b2b2b2"/><rect x="154" y="4" width="2" height="2" fill="#fff"/><rect x="156" y="0" width="2" height="2" fill="#b2b2b2"/><rect x="157" y="1" width="2" height="2" fill="#fff"/><rect x="159" y="3" width="2" height="2" fill="#b2b2b2"/><rect x="160" y="4" width="2" height="2" fill="#fff"/><rect x="162" y="0" width="2" height="2" fill="#b2b2b2"/><rect x="163" y="1" width="2" height="2" fill="#fff"/><rect x="165" y="3" width="2" height="2" fill="#b2b2b2"/><rect x="166" y="4" width="2" height="2" fill="#fff"/><rect x="168" y="0" width="2" height="2" fill="#b2b2b2"/><rect x="169" y="1" width="2" height="2" fill="#fff"/><rect x="171" y="3" width="2" height="2" fill="#b2b2b2"/><rect x="172" y="4" width="2" height="2" fill="#fff"/><rect x="174" y="0" width="2" height="2" fill="#b2b2b2"/><rect x="175" y="1" width="2" height="2" fill="#fff"/><rect x="177" y="3" width="2" height="2" fill="#b2b2b2"/><rect x="178" y="4" width="2" height="2" fill="#fff"/><rect x="180" y="0" width="2" height="2" fill="#b2b2b2"/><rect x="181" y="1" width="2" height="2" fill="#fff"/><rect x="183" y="3" width="2" height="2" fill="#b2b2b2"/><rect x="184" y="4" width="2" height="2" fill="#fff"/><rect x="186" y="0" width="2" height="2" fill="#b2b2b2"/><rect x="187" y="1" width="2" height="2" fill="#fff"/><rect x="189" y="3" width="2" height="2" fill="#b2b2b2"/><rect x="190" y="4" width="2" height="2" fill="#fff"/><rect x="192" y="0" width="2" height="2" fill="#b2b2b2"/><rect x="193" y="1" width="2" height="2" fill="#fff"/><rect x="195" y="3" width="2" height="2" fill="#b2b2b2"/><rect x="196" y="4" width="2" height="2" fill="#fff"/><rect x="198" y="0" width="2" height="2" fill="#b2b2b2"/><rect x="199" y="1" width="2" height="2" fill="#fff"/><rect x="201" y="3" width="2" height="2" fill="#b2b2b2"/><rect x="202" y="4" width="2" height="2" fill="#fff"/><rect x="204" y="0" width="2" height="2" fill="#b2b2b2"/><rect x="205" y="1" width="2" height="2" fill="#fff"/><rect x="207" y="3" width="2" height="2" fill="#b2b2b2"/><rect x="208" y="4" width="2" height="2" fill="#fff"/><rect x="210" y="0" width="2" height="2" fill="#b2b2b2"/><rect x="211" y="1" width="2" height="2" fill="#fff"/><rect x="213" y="3" width="2" height="2" fill="#b2b2b2"/><rect x="214" y="4" width="2" height="2" fill="#fff"/><rect x="216" y="0" width="2" height="2" fill="#b2b2b2"/><rect x="217" y="1" width="2" height="2" fill="#fff"/><rect x="219" y="3" width="2" height="2" fill="#b2b2b2"/><rect x="220" y="4" width="2" height="2" fill="#fff"/><rect x="222" y="0" width="2" height="2" fill="#b2b2b2"/><rect x="223" y="1" width="2" height="2" fill="#fff"/><rect x="225" y="3" width="2" height="2" fill="#b2b2b2"/><rect x="226" y="4" width="2" height="2" fill="#fff"/><rect x="228" y="0" width="2" height="2" fill="#b2b2b2"/><rect x="229" y="1" width="2" height="2" fill="#fff"/><rect x="231" y="3" width="2" height="2" fill="#b2b2b2"/><rect x="232" y="4" width="2" height="2" fill="#fff"/><rect x="234" y="0" width="2" height="2" fill="#b2b2b2"/><rect x="235" y="1" width="2" height="2" fill="#fff"/><rect x="237" y="3" width="2" height="2" fill="#b2b2b2"/><rect x="238" y="4" width="2" height="2" fill="#fff"/><rect x="240" y="0" width="2" height="2" fill="#b2b2b2"/><rect x="241" y="1" width="2" height="2" fill="#fff"/><rect x="243" y="3" width="2" height="2" fill="#b2b2b2"/><rect x="244" y="4" width="2" height="2" fill="#fff"/><rect x="246" y="0" width="2" height="2" fill="#b2b2b2"/><rect x="247" y="1" width="2" height="2" fill="#fff"/><rect x="249" y="3" width="2" height="2" fill="#b2b2b2"/><rect x="250" y="4" width="2" height="2" fill="#fff"/><rect x="252" y="0" width="2" height="2" fill="#b2b2b2"/><rect x="253" y="1" width="2" height="2" fill="#fff"/><rect x="255" y="3" width="2" height="2" fill="#b2b2b2"/><rect x="256" y="4" width="2" height="2" fill="#fff"/><rect x="258" y="0" width="2" height="2" fill="#b2b2b2"/><rect x="259" y="1" width="2" height="2" fill="#fff"/><rect x="261" y="3" width="2" height="2" fill="#b2b2b2"/><rect x="262" y="4" width="2" height="2" fill="#fff"/><rect x="264" y="0" width="2" height="2" fill="#b2b2b2"/><rect x="265" y="1" width="2" height="2" fill="#fff"/><rect x="267" y="3" width="2" height="2" fill="#b2b2b2"/><rect x="268" y="4" width="2" height="2" fill="#fff"/><rect x="270" y="0" width="2" height="2" fill="#b2b2b2"/><rect x="271" y="1" width="2" height="2" fill="#fff"/><rect x="273" y="3" width="2" height="2" fill="#b2b2b2"/><rect x="274" y="4" width="2" height="2" fill="#fff"/><rect x="276" y="0" width="2" height="2" fill="#b2b2b2"/><rect x="277" y="1" width="2" height="2" fill="#fff"/><rect x="279" y="3" width="2" height="2" fill="#b2b2b2"/><rect x="280" y="4" width="2" height="2" fill="#fff"/><rect x="282" y="0" width="2" height="2" fill="#b2b2b2"/><rect x="283" y="1" width="2" height="2" fill="#fff"/><rect x="285" y="3" width="2" height="2" fill="#b2b2b2"/><rect x="286" y="4" width="2" height="2" fill="#fff"/><rect x="288" y="0" width="2" height="2" fill="#b2b2b2"/><rect x="289" y="1" width="2" height="2" fill="#fff"/><rect x="291" y="3" width="2" height="2" fill="#b2b2b2"/><rect x="292" y="4" width="2" height="2" fill="#fff"/><rect x="294" y="0" width="2" height="2" fill="#b2b2b2"/><rect x="295" y="1" width="2" height="2" fill="#fff"/><rect x="297" y="3" width="2" height="2" fill="#b2b2b2"/><rect x="298" y="4" width="2" height="2" fill="#fff"/><rect x="300" y="0" width="2" height="2" fill="#b2b2b2"/><rect x="301" y="1" width="2" height="2" fill="#fff"/><rect x="303" y="3" width="2" height="2" fill="#b2b2b2"/><rect x="304" y="4" width="2" height="2" fill="#fff"/><rect x="306" y="0" width="2" height="2" fill="#b2b2b2"/><rect x="307" y="1" width="2" height="2" fill="#fff"/><rect x="309" y="3" width="2" height="2" fill="#b2b2b2"/><rect x="310" y="4" width="2" height="2" fill="#fff"/><rect x="312" y="0" width="2" height="2" fill="#b2b2b2"/><rect x="313" y="1" width="2" height="2" fill="#fff"/><rect x="315" y="3" width="2" height="2" fill="#b2b2b2"/><rect x="316" y="4" width="2" height="2" fill="#fff"/><rect x="318" y="0" width="2" height="2" fill="#b2b2b2"/><rect x="319" y="1" width="2" height="2" fill="#fff"/><rect x="321" y="3" width="2" height="2" fill="#b2b2b2"/><rect x="322" y="4" width="2" height="2" fill="#fff"/><rect x="324" y="0" width="2" height="2" fill="#b2b2b2"/><rect x="325" y="1" width="2" height="2" fill="#fff"/></svg>
<div class="t" style="left:351px;top:455px;letter-spacing:0.25px">SLS Detector Plot</div>
<div class="t" style="left:356px;top:483px;font-size:14px;line-height:16px;height:16px;letter-spacing:0.1px">Measurement</div>
<div class="a" style="left:13px;top:491px;width:340px;height:1px;background:#808080"></div>
<div class="a" style="left:456px;top:491px;width:339px;height:1px;background:#808080"></div>
<div class="a" style="left:22px;top:513px;width:764px;height:342px;box-sizing:border-box;border:1px solid #868686;border-radius:3px"></div>
<div class="t" style="left:30px;top:507px;background:#efefef;padding:0 2px;letter-spacing:-0.25px">Start Image</div>

<!-- plot canvas -->
<div class="a" style="left:100px;top:532px;width:619px;height:266px;background:#fff"></div>
<div class="a" style="left:100px;top:532px;width:618px;height:265px;box-sizing:border-box;border-left:1px solid #c6c2c2;border-top:1px solid #c6c2c2"></div>
<div class="a" style="left:101px;top:533px;width:616px;height:263px;box-sizing:border-box;border-left:1px solid #b2acac;border-top:1px solid #b2acac"></div>
<svg class="a" style="left:102px;top:534px" width="615" height="262" shape-rendering="crispEdges">
<rect x="0" y="0" width="13" height="6" fill="#008080"/>
<rect x="13" y="0" width="12" height="6" fill="#009a9a"/>
<rect x="25" y="0" width="12" height="6" fill="#00b3b3"/>
<rect x="37" y="0" width="13" height="6" fill="#00cbcb"/>
<rect x="50" y="0" width="12" height="6" fill="#00e3e3"/>
<rect x="62" y="0" width="12" height="6" fill="#00fafa"/>
<rect x="74" y="0" width="13" height="6" fill="#00f3ff"/>
<rect x="87" y="0" width="12" height="6" fill="#00e5ff"/>
<rect x="99" y="0" width="12" height="6" fill="#00d7ff"/>
<rect x="111" y="0" width="12" height="6" fill="#00c9ff"/>
<rect x="123" y="0" width="13" height="6" fill="#00bcff"/>
<rect x="136" y="0" width="12" height="6" fill="#00b0ff"/>
<rect x="148" y="0" width="12" height="6" fill="#00a5ff"/>
<rect x="160" y="0" width="12" height="6" fill="#009aff"/>
<rect x="172" y="0" width="13" height="6" fill="#0090ff"/>
<rect x="185" y="0" width="12" height="6" fill="#0087ff"/>
<rect x="197" y="0" width="12" height="6" fill="#007eff"/>
<rect x="209" y="0" width="13" height="6" fill="#0077ff"/>
<rect x="222" y="0" width="12" height="6" fill="#0070ff"/>
<rect x="234" y="0" width="12" height="6" fill="#006aff"/>
<rect x="246" y="0" width="12" height="6" fill="#0065ff"/>
<rect x="258" y="0" width="13" height="6" fill="#0061ff"/>
<rect x="271" y="0" width="12" height="6" fill="#005eff"/>
<rect x="283" y="0" width="12" height="6" fill="#005cff"/>
<rect x="295" y="0" width="25" height="6" fill="#005bff"/>
<rect x="320" y="0" width="12" height="6" fill="#005cff"/>
<rect x="332" y="0" width="12" height="6" fill="#005eff"/>
<rect x="344" y="0" width="13" height="6" fill="#0061ff"/>
<rect x="357" y="0" width="12" height="6" fill="#0065ff"/>
<rect x="369" y="0" width="12" height="6" fill="#006aff"/>
<rect x="381" y="0" width="12" height="6" fill="#0070ff"/>
<rect x="393" y="0" width="13" height="6" fill="#0077ff"/>
<rect x="406" y="0" width="12" height="6" fill="#007eff"/>
<rect x="418" y="0" width="12" height="6" fill="#0087ff"/>
<rect x="430" y="0" width="13" height="6" fill="#0090ff"/>
<rect x="443" y="0" width="12" height="6" fill="#009aff"/>
<rect x="455" y="0" width="12" height="6" fill="#00a5ff"/>
<rect x="467" y="0" width="12" height="6" fill="#00b0ff"/>
<rect x="479" y="0" width="13" height="6" fill="#00bcff"/>
<rect x="492" y="0" width="12" height="6" fill="#00c9ff"/>
<rect x="504" y="0" width="12" height="6" fill="#00d7ff"/>
<rect x="516" y="0" width="12" height="6" fill="#00e5ff"/>
<rect x="528" y="0" width="13" height="6" fill="#00f3ff"/>
<rect x="541" y="0" width="12" height="6" fill="#00fafa"/>
<rect x="553" y="0" width="12" height="6" fill="#00e3e3"/>
<rect x="565" y="0" width="13" height="6" fill="#00cbcb"/>
<rect x="578" y="0" width="12" height="6" fill="#00b3b3"/>
<rect x="590" y="0" width="12" height="6" fill="#009a9a"/>
<rect x="602" y="0" width="13" height="6" fill="#008080"/>
<rect x="0" y="6" width="13" height="5" fill="#009a9a"/>
<rect x="13" y="6" width="12" height="5" fill="#00b4b4"/>
<rect x="25" y="6" width="12" height="5" fill="#00cdcd"/>
<rect x="37" y="6" width="13" height="5" fill="#00e7e7"/>
<rect x="50" y="6" width="12" height="5" fill="#00ffff"/>
<rect x="62" y="6" width="12" height="5" fill="#00efff"/>
<rect x="74" y="6" width="13" height="5" fill="#00e0ff"/>
<rect x="87" y="6" width="12" height="5" fill="#00d1ff"/>
<rect x="99" y="6" width="12" height="5" fill="#00c2ff"/>
<rect x="111" y="6" width="12" height="5" fill="#00b5ff"/>
<rect x="123" y="6" width="13" height="5" fill="#00a7ff"/>
<rect x="136" y="6" width="12" height="5" fill="#009bff"/>
<rect x="148" y="6" width="12" height="5" fill="#008fff"/>
<rect x="160" y="6" width="12" height="5" fill="#0084ff"/>
<rect x="172" y="6" width="13" height="5" fill="#0079ff"/>
<rect x="185" y="6" width="12" height="5" fill="#0070ff"/>
<rect x="197" y="6" width="12" height="5" fill="#0067ff"/>
<rect x="209" y="6" width="13" height="5" fill="#005fff"/>
<rect x="222" y="6" width="12" height="5" fill="#0058ff"/>
<rect x="234" y="6" width="12" height="5" fill="#0052ff"/>
<rect x="246" y="6" width="12" height="5" fill="#004dff"/>
<rect x="258" y="6" width="13" height="5" fill="#0049ff"/>
<rect x="271" y="6" width="12" height="5" fill="#0046ff"/>
<rect x="283" y="6" width="12" height="5" fill="#0044ff"/>
<rect x="295" y="6" width="25" height="5" fill="#0043ff"/>
<rect x="320" y="6" width="12" height="5" fill="#0044ff"/>
<rect x="332" y="6" width="12" height="5" fill="#0046ff"/>
<rect x="344" y="6" width="13" height="5" fill="#0049ff"/>
<rect x="357" y="6" width="12" height="5" fill="#004dff"/>
<rect x="369" y="6" width="12" height="5" fill="#0052ff"/>
<rect x="381" y="6" width="12" height="5" fill="#0058ff"/>
<rect x="393" y="6" width="13" height="5" fill="#005fff"/>
<rect x="406" y="6" width="12" height="5" fill="#0067ff"/>
<rect x="418" y="6" width="12" height="5" fill="#0070ff"/>
<rect x="430" y="6" width="13" height="5" fill="#0079ff"/>
<rect x="443" y="6" width="12" height="5" fill="#0084ff"/>
<rect x="455" y="6" width="12" height="5" fill="#008fff"/>
<rect x="467" y="6" width="12" height="5" fill="#009bff"/>
<rect x="479" y="6" width="13" height="5" fill="#00a7ff"/>
<rect x="492" y="6" width="12" height="5" fill="#00b5ff"/>
<rect x="504" y="6" width="12" height="5" fill="#00c2ff"/>
<rect x="516" y="6" width="12" height="5" fill="#00d1ff"/>
<rect x="528" y="6" width="13" height="5" fill="#00e0ff"/>
<rect x="541" y="6" width="12" height="5" fill="#00efff"/>
<rect x="553" y="6" width="12" height="5" fill="#00ffff"/>
<rect x="565" y="6" width="13" height="5" fill="#00e7e7"/>
<rect x="578" y="6" width="12" height="5" fill="#00cdcd"/>
<rect x="590" y="6" width="12" height="5" fill="#00b4b4"/>
<rect x="602" y="6" width="13" height="5" fill="#009a9a"/>
<rect x="0" y="11" width="13" height="5" fill="#00b3b3"/>
<rect x="13" y="11" width="12" height="5" fill="#00cdcd"/>
<rect x="25" y="11" width="12" height="5" fill="#00e8e8"/>
<rect x="37" y="11" width="13" height="5" fill="#00fdff"/>
<rect x="50" y="11" width="12" height="5" fill="#00edff"/>
<rect x="62" y="11" width="12" height="5" fill="#00dcff"/>
<rect x="74" y="11" width="13" height="5" fill="#00cdff"/>
<rect x="87" y="11" width="12" height="5" fill="#00bdff"/>
<rect x="99" y="11" width="12" height="5" fill="#00aeff"/>
<rect x="111" y="11" width="12" height="5" fill="#00a0ff"/>
<rect x="123" y="11" width="13" height="5" fill="#0093ff"/>
<rect x="136" y="11" width="12" height="5" fill="#0086ff"/>
<rect x="148" y="11" width="12" height="5" fill="#0079ff"/>
<rect x="160" y="11" width="12" height="5" fill="#006eff"/>
<rect x="172" y="11" width="13" height="5" fill="#0063ff"/>
<rect x="185" y="11" width="12" height="5" fill="#0059ff"/>
<rect x="197" y="11" width="12" height="5" fill="#0050ff"/>
<rect x="209" y="11" width="13" height="5" fill="#0048ff"/>
<rect x="222" y="11" width="12" height="5" fill="#0041ff"/>
<rect x="234" y="11" width="12" height="5" fill="#003aff"/>
<rect x="246" y="11" width="12" height="5" fill="#0035ff"/>
<rect x="258" y="11" width="13" height="5" fill="#0031ff"/>
<rect x="271" y="11" width="12" height="5" fill="#002dff"/>
<rect x="283" y="11" width="12" height="5" fill="#002bff"/>
<rect x="295" y="11" width="25" height="5" fill="#002aff"/>
<rect x="320" y="11" width="12" height="5" fill="#002bff"/>
<rect x="332" y="11" width="12" height="5" fill="#002dff"/>
<rect x="344" y="11" width="13" height="5" fill="#0031ff"/>
<rect x="357" y="11" width="12" height="5" fill="#0035ff"/>
<rect x="369" y="11" width="12" height="5" fill="#003aff"/>
<rect x="381" y="11" width="12" height="5" fill="#0041ff"/>
<rect x="393" y="11" width="13" height="5" fill="#0048ff"/>
<rect x="406" y="11" width="12" height="5" fill="#0050ff"/>
<rect x="418" y="11" width="12" height="5" fill="#0059ff"/>
<rect x="430" y="11" width="13" height="5" fill="#0063ff"/>
<rect x="443" y="11" width="12" height="5" fill="#006eff"/>
<rect x="455" y="11" width="12" height="5" fill="#0079ff"/>
<rect x="467" y="11" width="12" height="5" fill="#0086ff"/>
<rect x="479" y="11" width="13" height="5" fill="#0093ff"/>
<rect x="492" y="11" width="12" height="5" fill="#00a0ff"/>
<rect x="504" y="11" width="12" height="5" fill="#00aeff"/>
<rect x="516" y="11" width="12" height="5" fill="#00bdff"/>
<rect x="528" y="11" width="13" height="5" fill="#00cdff"/>
<rect x="541" y="11" width="12" height="5" fill="#00dcff"/>
<rect x="553" y="11" width="12" height="5" fill="#00edff"/>
<rect x="565" y="11" width="13" height="5" fill="#00fdff"/>
<rect x="578" y="11" width="12" height="5" fill="#00e8e8"/>
<rect x="590" y="11" width="12" height="5" fill="#00cdcd"/>
<rect x="602" y="11" width="13" height="5" fill="#00b3b3"/>
<rect x="0" y="16" width="13" height="6" fill="#00cbcb"/>
<rect x="13" y="16" width="12" height="6" fill="#00e7e7"/>
<rect x="25" y="16" width="12" height="6" fill="#00fdff"/>
<rect x="37" y="16" width="13" height="6" fill="#00ecff"/>
<rect x="50" y="16" width="12" height="6" fill="#00dbff"/>
<rect x="62" y="16" width="12" height="6" fill="#00caff"/>
<rect x="74" y="16" width="13" height="6" fill="#00baff"/>
<rect x="87" y="16" width="12" height="6" fill="#00aaff"/>
<rect x="99" y="16" width="12" height="6" fill="#009bff"/>
<rect x="111" y="16" width="12" height="6" fill="#008cff"/>
<rect x="123" y="16" width="13" height="6" fill="#007eff"/>
<rect x="136" y="16" width="12" height="6" fill="#0071ff"/>
<rect x="148" y="16" width="12" height="6" fill="#0064ff"/>
<rect x="160" y="16" width="12" height="6" fill="#0058ff"/>
<rect x="172" y="16" width="13" height="6" fill="#004dff"/>
<rect x="185" y="16" width="12" height="6" fill="#0043ff"/>
<rect x="197" y="16" width="12" height="6" fill="#0039ff"/>
<rect x="209" y="16" width="13" height="6" fill="#0031ff"/>
<rect x="222" y="16" width="12" height="6" fill="#0029ff"/>
<rect x="234" y="16" width="12" height="6" fill="#0022ff"/>
<rect x="246" y="16" width="12" height="6" fill="#001dff"/>
<rect x="258" y="16" width="13" height="6" fill="#0018ff"/>
<rect x="271" y="16" width="12" height="6" fill="#0015ff"/>
<rect x="283" y="16" width="12" height="6" fill="#0013ff"/>
<rect x="295" y="16" width="25" height="6" fill="#0012ff"/>
<rect x="320" y="16" width="12" height="6" fill="#0013ff"/>
<rect x="332" y="16" width="12" height="6" fill="#0015ff"/>
<rect x="344" y="16" width="13" height="6" fill="#0018ff"/>
<rect x="357" y="16" width="12" height="6" fill="#001dff"/>
<rect x="369" y="16" width="12" height="6" fill="#0022ff"/>
<rect x="381" y="16" width="12" height="6" fill="#0029ff"/>
<rect x="393" y="16" width="13" height="6" fill="#0031ff"/>
<rect x="406" y="16" width="12" height="6" fill="#0039ff"/>
<rect x="418" y="16" width="12" height="6" fill="#0043ff"/>
<rect x="430" y="16" width="13" height="6" fill="#004dff"/>
<rect x="443" y="16" width="12" height="6" fill="#0058ff"/>
<rect x="455" y="16" width="12" height="6" fill="#0064ff"/>
<rect x="467" y="16" width="12" height="6" fill="#0071ff"/>
<rect x="479" y="16" width="13" height="6" fill="#007eff"/>
<rect x="492" y="16" width="12" height="6" fill="#008cff"/>
<rect x="504" y="16" width="12" height="6" fill="#009bff"/>
<rect x="516" y="16" width="12" height="6" fill="#00aaff"/>
<rect x="528" y="16" width="13" height="6" fill="#00baff"/>
<rect x="541" y="16" width="12" height="6" fill="#00caff"/>
<rect x="553" y="16" width="12" height="6" fill="#00dbff"/>
<rect x="565" y="16" width="13" height="6" fill="#00ecff"/>
<rect x="578" y="16" width="12" height="6" fill="#00fdff"/>
<rect x="590" y="16" width="12" height="6" fill="#00e7e7"/>
<rect x="602" y="16" width="13" height="6" fill="#00cbcb"/>
<rect x="0" y="22" width="13" height="5" fill="#00e3e3"/>
<rect x="13" y="22" width="12" height="5" fill="#00ffff"/>
<rect x="25" y="22" width="12" height="5" fill="#00edff"/>
<rect x="37" y="22" width="13" height="5" fill="#00dbff"/>
<rect x="50" y="22" width="12" height="5" fill="#00c9ff"/>
<rect x="62" y="22" width="12" height="5" fill="#00b8ff"/>
<rect x="74" y="22" width="13" height="5" fill="#00a7ff"/>
<rect x="87" y="22" width="12" height="5" fill="#0097ff"/>
<rect x="99" y="22" width="12" height="5" fill="#0088ff"/>
<rect x="111" y="22" width="12" height="5" fill="#0078ff"/>
<rect x="123" y="22" width="13" height="5" fill="#006aff"/>
<rect x="136" y="22" width="12" height="5" fill="#005cff"/>
<rect x="148" y="22" width="12" height="5" fill="#004fff"/>
<rect x="160" y="22" width="12" height="5" fill="#0043ff"/>
<rect x="172" y="22" width="13" height="5" fill="#0037ff"/>
<rect x="185" y="22" width="12" height="5" fill="#002cff"/>
<rect x="197" y="22" width="12" height="5" fill="#0022ff"/>
<rect x="209" y="22" width="13" height="5" fill="#001aff"/>
<rect x="222" y="22" width="12" height="5" fill="#0012ff"/>
<rect x="234" y="22" width="12" height="5" fill="#000bff"/>
<rect x="246" y="22" width="12" height="5" fill="#0005ff"/>
<rect x="258" y="22" width="13" height="5" fill="#0000ff"/>
<rect x="271" y="22" width="12" height="5" fill="#0005fa"/>
<rect x="283" y="22" width="12" height="5" fill="#0009f6"/>
<rect x="295" y="22" width="25" height="5" fill="#000af5"/>
<rect x="320" y="22" width="12" height="5" fill="#0009f6"/>
<rect x="332" y="22" width="12" height="5" fill="#0005fa"/>
<rect x="344" y="22" width="13" height="5" fill="#0000ff"/>
<rect x="357" y="22" width="12" height="5" fill="#0005ff"/>
<rect x="369" y="22" width="12" height="5" fill="#000bff"/>
<rect x="381" y="22" width="12" height="5" fill="#0012ff"/>
<rect x="393" y="22" width="13" height="5" fill="#001aff"/>
<rect x="406" y="22" width="12" height="5" fill="#0022ff"/>
<rect x="418" y="22" width="12" height="5" fill="#002cff"/>
<rect x="430" y="22" width="13" height="5" fill="#0037ff"/>
<rect x="443" y="22" width="12" height="5" fill="#0043ff"/>
<rect x="455" y="22" width="12" height="5" fill="#004fff"/>
<rect x="467" y="22" width="12" height="5" fill="#005cff"/>
<rect x="479" y="22" width="13" height="5" fill="#006aff"/>
<rect x="492" y="22" width="12" height="5" fill="#0078ff"/>
<rect x="504" y="22" width="12" height="5" fill="#0088ff"/>
<rect x="516" y="22" width="12" height="5" fill="#0097ff"/>
<rect x="528" y="22" width="13" height="5" fill="#00a7ff"/>
<rect x="541" y="22" width="12" height="5" fill="#00b8ff"/>
<rect x="553" y="22" width="12" height="5" fill="#00c9ff"/>
<rect x="565" y="22" width="13" height="5" fill="#00dbff"/>
<rect x="578" y="22" width="12" height="5" fill="#00edff"/>
<rect x="590" y="22" width="12" height="5" fill="#00ffff"/>
<rect x="602" y="22" width="13" height="5" fill="#00e3e3"/>
<rect x="0" y="27" width="13" height="5" fill="#00fafa"/>
<rect x="13" y="27" width="12" height="5" fill="#00efff"/>
<rect x="25" y="27" width="12" height="5" fill="#00dcff"/>
<rect x="37" y="27" width="13" height="5" fill="#00caff"/>
<rect x="50" y="27" width="12" height="5" fill="#00b8ff"/>
<rect x="62" y="27" width="12" height="5" fill="#00a7ff"/>
<rect x="74" y="27" width="13" height="5" fill="#0095ff"/>
<rect x="87" y="27" width="12" height="5" fill="#0085ff"/>
<rect x="99" y="27" width="12" height="5" fill="#0075ff"/>
<rect x="111" y="27" width="12" height="5" fill="#0065ff"/>
<rect x="123" y="27" width="13" height="5" fill="#0056ff"/>
<rect x="136" y="27" width="12" height="5" fill="#0048ff"/>
<rect x="148" y="27" width="12" height="5" fill="#003aff"/>
<rect x="160" y="27" width="12" height="5" fill="#002dff"/>
<rect x="172" y="27" width="13" height="5" fill="#0021ff"/>
<rect x="185" y="27" width="12" height="5" fill="#0016ff"/>
<rect x="197" y="27" width="12" height="5" fill="#000cff"/>
<rect x="209" y="27" width="13" height="5" fill="#0003ff"/>
<rect x="222" y="27" width="12" height="5" fill="#0009f6"/>
<rect x="234" y="27" width="12" height="5" fill="#0013ec"/>
<rect x="246" y="27" width="12" height="5" fill="#001de2"/>
<rect x="258" y="27" width="13" height="5" fill="#0024db"/>
<rect x="271" y="27" width="12" height="5" fill="#002ad5"/>
<rect x="283" y="27" width="12" height="5" fill="#002dd2"/>
<rect x="295" y="27" width="25" height="5" fill="#002fd0"/>
<rect x="320" y="27" width="12" height="5" fill="#002dd2"/>
<rect x="332" y="27" width="12" height="5" fill="#002ad5"/>
<rect x="344" y="27" width="13" height="5" fill="#0024db"/>
<rect x="357" y="27" width="12" height="5" fill="#001de2"/>
<rect x="369" y="27" width="12" height="5" fill="#0013ec"/>
<rect x="381" y="27" width="12" height="5" fill="#0009f6"/>
<rect x="393" y="27" width="13" height="5" fill="#0003ff"/>
<rect x="406" y="27" width="12" height="5" fill="#000cff"/>
<rect x="418" y="27" width="12" height="5" fill="#0016ff"/>
<rect x="430" y="27" width="13" height="5" fill="#0021ff"/>
<rect x="443" y="27" width="12" height="5" fill="#002dff"/>
<rect x="455" y="27" width="12" height="5" fill="#003aff"/>
<rect x="467" y="27" width="12" height="5" fill="#0048ff"/>
<rect x="479" y="27" width="13" height="5" fill="#0056ff"/>
<rect x="492" y="27" width="12" height="5" fill="#0065ff"/>
<rect x="504" y="27" width="12" height="5" fill="#0075ff"/>
<rect x="516" y="27" width="12" height="5" fill="#0085ff"/>
<rect x="528" y="27" width="13" height="5" fill="#0095ff"/>
<rect x="541" y="27" width="12" height="5" fill="#00a7ff"/>
<rect x="553" y="27" width="12" height="5" fill="#00b8ff"/>
<rect x="565" y="27" width="13" height="5" fill="#00caff"/>
<rect x="578" y="27" width="12" height="5" fill="#00dcff"/>
<rect x="590" y="27" width="12" height="5" fill="#00efff"/>
<rect x="602" y="27" width="13" height="5" fill="#00fafa"/>
<rect x="0" y="32" width="13" height="5" fill="#00f3ff"/>
<rect x="13" y="32" width="12" height="5" fill="#00e0ff"/>
<rect x="25" y="32" width="12" height="5" fill="#00cdff"/>
<rect x="37" y="32" width="13" height="5" fill="#00baff"/>
<rect x="50" y="32" width="12" height="5" fill="#00a7ff"/>
<rect x="62" y="32" width="12" height="5" fill="#0095ff"/>
<rect x="74" y="32" width="13" height="5" fill="#0084ff"/>
<rect x="87" y="32" width="12" height="5" fill="#0073ff"/>
<rect x="99" y="32" width="12" height="5" fill="#0062ff"/>
<rect x="111" y="32" width="12" height="5" fill="#0052ff"/>
<rect x="123" y="32" width="13" height="5" fill="#0043ff"/>
<rect x="136" y="32" width="12" height="5" fill="#0034ff"/>
<rect x="148" y="32" width="12" height="5" fill="#0026ff"/>
<rect x="160" y="32" width="12" height="5" fill="#0018ff"/>
<rect x="172" y="32" width="13" height="5" fill="#000cff"/>
<rect x="185" y="32" width="12" height="5" fill="#0000ff"/>
<rect x="197" y="32" width="12" height="5" fill="#0010ef"/>
<rect x="209" y="32" width="13" height="5" fill="#001ee1"/>
<rect x="222" y="32" width="12" height="5" fill="#002bd4"/>
<rect x="234" y="32" width="12" height="5" fill="#0037c8"/>
<rect x="246" y="32" width="12" height="5" fill="#0040bf"/>
<rect x="258" y="32" width="13" height="5" fill="#0048b7"/>
<rect x="271" y="32" width="12" height="5" fill="#004eb1"/>
<rect x="283" y="32" width="12" height="5" fill="#0052ad"/>
<rect x="295" y="32" width="25" height="5" fill="#0054ab"/>
<rect x="320" y="32" width="12" height="5" fill="#0052ad"/>
<rect x="332" y="32" width="12" height="5" fill="#004eb1"/>
<rect x="344" y="32" width="13" height="5" fill="#0048b7"/>
<rect x="357" y="32" width="12" height="5" fill="#0040bf"/>
<rect x="369" y="32" width="12" height="5" fill="#0037c8"/>
<rect x="381" y="32" width="12" height="5" fill="#002bd4"/>
<rect x="393" y="32" width="13" height="5" fill="#001ee1"/>
<rect x="406" y="32" width="12" height="5" fill="#0010ef"/>
<rect x="418" y="32" width="12" height="5" fill="#0000ff"/>
<rect x="430" y="32" width="13" height="5" fill="#000cff"/>
<rect x="443" y="32" width="12" height="5" fill="#0018ff"/>
<rect x="455" y="32" width="12" height="5" fill="#0026ff"/>
<rect x="467" y="32" width="12" height="5" fill="#0034ff"/>
<rect x="479" y="32" width="13" height="5" fill="#0043ff"/>
<rect x="492" y="32" width="12" height="5" fill="#0052ff"/>
<rect x="504" y="32" width="12" height="5" fill="#0062ff"/>
<rect x="516" y="32" width="12" height="5" fill="#0073ff"/>
<rect x="528" y="32" width="13" height="5" fill="#0084ff"/>
<rect x="541" y="32" width="12" height="5" fill="#0095ff"/>
<rect x="553" y="32" width="12" height="5" fill="#00a7ff"/>
<rect x="565" y="32" width="13" height="5" fill="#00baff"/>
<rect x="578" y="32" width="12" height="5" fill="#00cdff"/>
<rect x="590" y="32" width="12" height="5" fill="#00e0ff"/>
<rect x="602" y="32" width="13" height="5" fill="#00f3ff"/>
<rect x="0" y="37" width="13" height="5" fill="#00e5ff"/>
<rect x="13" y="37" width="12" height="5" fill="#00d1ff"/>
<rect x="25" y="37" width="12" height="5" fill="#00bdff"/>
<rect x="37" y="37" width="13" height="5" fill="#00aaff"/>
<rect x="50" y="37" width="12" height="5" fill="#0097ff"/>
<rect x="62" y="37" width="12" height="5" fill="#0085ff"/>
<rect x="74" y="37" width="13" height="5" fill="#0073ff"/>
<rect x="87" y="37" width="12" height="5" fill="#0061ff"/>
<rect x="99" y="37" width="12" height="5" fill="#0050ff"/>
<rect x="111" y="37" width="12" height="5" fill="#003fff"/>
<rect x="123" y="37" width="13" height="5" fill="#0030ff"/>
<rect x="136" y="37" width="12" height="5" fill="#0020ff"/>
<rect x="148" y="37" width="12" height="5" fill="#0012ff"/>
<rect x="160" y="37" width="12" height="5" fill="#0004ff"/>
<rect x="172" y="37" width="13" height="5" fill="#000ef1"/>
<rect x="185" y="37" width="12" height="5" fill="#0020df"/>
<rect x="197" y="37" width="12" height="5" fill="#0031ce"/>
<rect x="209" y="37" width="13" height="5" fill="#0040bf"/>
<rect x="222" y="37" width="12" height="5" fill="#004eb1"/>
<rect x="234" y="37" width="12" height="5" fill="#005aa5"/>
<rect x="246" y="37" width="12" height="5" fill="#00649b"/>
<rect x="258" y="37" width="13" height="5" fill="#006c93"/>
<rect x="271" y="37" width="12" height="5" fill="#00728d"/>
<rect x="283" y="37" width="12" height="5" fill="#007788"/>
<rect x="295" y="37" width="25" height="5" fill="#007986"/>
<rect x="320" y="37" width="12" height="5" fill="#007788"/>
<rect x="332" y="37" width="12" height="5" fill="#00728d"/>
<rect x="344" y="37" width="13" height="5" fill="#006c93"/>
<rect x="357" y="37" width="12" height="5" fill="#00649b"/>
<rect x="369" y="37" width="12" height="5" fill="#005aa5"/>
<rect x="381" y="37" width="12" height="5" fill="#004eb1"/>
<rect x="393" y="37" width="13" height="5" fill="#0040bf"/>
<rect x="406" y="37" width="12" height="5" fill="#0031ce"/>
<rect x="418" y="37" width="12" height="5" fill="#0020df"/>
<rect x="430" y="37" width="13" height="5" fill="#000ef1"/>
<rect x="443" y="37" width="12" height="5" fill="#0004ff"/>
<rect x="455" y="37" width="12" height="5" fill="#0012ff"/>
<rect x="467" y="37" width="12" height="5" fill="#0020ff"/>
<rect x="479" y="37" width="13" height="5" fill="#0030ff"/>
<rect x="492" y="37" width="12" height="5" fill="#003fff"/>
<rect x="504" y="37" width="12" height="5" fill="#0050ff"/>
<rect x="516" y="37" width="12" height="5" fill="#0061ff"/>
<rect x="528" y="37" width="13" height="5" fill="#0073ff"/>
<rect x="541" y="37" width="12" height="5" fill="#0085ff"/>
<rect x="553" y="37" width="12" height="5" fill="#0097ff"/>
<rect x="565" y="37" width="13" height="5" fill="#00aaff"/>
<rect x="578" y="37" width="12" height="5" fill="#00bdff"/>
<rect x="590" y="37" width="12" height="5" fill="#00d1ff"/>
<rect x="602" y="37" width="13" height="5" fill="#00e5ff"/>
<rect x="0" y="42" width="13" height="6" fill="#00d7ff"/>
<rect x="13" y="42" width="12" height="6" fill="#00c2ff"/>
<rect x="25" y="42" width="12" height="6" fill="#00aeff"/>
<rect x="37" y="42" width="13" height="6" fill="#009bff"/>
<rect x="50" y="42" width="12" height="6" fill="#0088ff"/>
<rect x="62" y="42" width="12" height="6" fill="#0075ff"/>
<rect x="74" y="42" width="13" height="6" fill="#0062ff"/>
<rect x="87" y="42" width="12" height="6" fill="#0050ff"/>
<rect x="99" y="42" width="12" height="6" fill="#003eff"/>
<rect x="111" y="42" width="12" height="6" fill="#002dff"/>
<rect x="123" y="42" width="13" height="6" fill="#001dff"/>
<rect x="136" y="42" width="12" height="6" fill="#000dff"/>
<rect x="148" y="42" width="12" height="6" fill="#0003fc"/>
<rect x="160" y="42" width="12" height="6" fill="#0019e6"/>
<rect x="172" y="42" width="13" height="6" fill="#002dd2"/>
<rect x="185" y="42" width="12" height="6" fill="#0040bf"/>
<rect x="197" y="42" width="12" height="6" fill="#0052ad"/>
<rect x="209" y="42" width="13" height="6" fill="#00629d"/>
<rect x="222" y="42" width="12" height="6" fill="#00708f"/>
<rect x="234" y="42" width="12" height="6" fill="#007d82"/>
<rect x="246" y="42" width="12" height="6" fill="#008877"/>
<rect x="258" y="42" width="13" height="6" fill="#00906f"/>
<rect x="271" y="42" width="12" height="6" fill="#009768"/>
<rect x="283" y="42" width="12" height="6" fill="#009b64"/>
<rect x="295" y="42" width="25" height="6" fill="#009e61"/>
<rect x="320" y="42" width="12" height="6" fill="#009b64"/>
<rect x="332" y="42" width="12" height="6" fill="#009768"/>
<rect x="344" y="42" width="13" height="6" fill="#00906f"/>
<rect x="357" y="42" width="12" height="6" fill="#008877"/>
<rect x="369" y="42" width="12" height="6" fill="#007d82"/>
<rect x="381" y="42" width="12" height="6" fill="#00708f"/>
<rect x="393" y="42" width="13" height="6" fill="#00629d"/>
<rect x="406" y="42" width="12" height="6" fill="#0052ad"/>
<rect x="418" y="42" width="12" height="6" fill="#0040bf"/>
<rect x="430" y="42" width="13" height="6" fill="#002dd2"/>
<rect x="443" y="42" width="12" height="6" fill="#0019e6"/>
<rect x="455" y="42" width="12" height="6" fill="#0003fc"/>
<rect x="467" y="42" width="12" height="6" fill="#000dff"/>
<rect x="479" y="42" width="13" height="6" fill="#001dff"/>
<rect x="492" y="42" width="12" height="6" fill="#002dff"/>
<rect x="504" y="42" width="12" height="6" fill="#003eff"/>
<rect x="516" y="42" width="12" height="6" fill="#0050ff"/>
<rect x="528" y="42" width="13" height="6" fill="#0062ff"/>
<rect x="541" y="42" width="12" height="6" fill="#0075ff"/>
<rect x="553" y="42" width="12" height="6" fill="#0088ff"/>
<rect x="565" y="42" width="13" height="6" fill="#009bff"/>
<rect x="578" y="42" width="12" height="6" fill="#00aeff"/>
<rect x="590" y="42" width="12" height="6" fill="#00c2ff"/>
<rect x="602" y="42" width="13" height="6" fill="#00d7ff"/>
<rect x="0" y="48" width="13" height="5" fill="#00c9ff"/>
<rect x="13" y="48" width="12" height="5" fill="#00b5ff"/>
<rect x="25" y="48" width="12" height="5" fill="#00a0ff"/>
<rect x="37" y="48" width="13" height="5" fill="#008cff"/>
<rect x="50" y="48" width="12" height="5" fill="#0078ff"/>
<rect x="62" y="48" width="12" height="5" fill="#0065ff"/>
<rect x="74" y="48" width="13" height="5" fill="#0052ff"/>
<rect x="87" y="48" width="12" height="5" fill="#003fff"/>
<rect x="99" y="48" width="12" height="5" fill="#002dff"/>
<rect x="111" y="48" width="12" height="5" fill="#001cff"/>
<rect x="123" y="48" width="13" height="5" fill="#000bff"/>
<rect x="136" y="48" width="12" height="5" fill="#0009f6"/>
<rect x="148" y="48" width="12" height="5" fill="#0020df"/>
<rect x="160" y="48" width="12" height="5" fill="#0037c8"/>
<rect x="172" y="48" width="13" height="5" fill="#004cb3"/>
<rect x="185" y="48" width="12" height="5" fill="#00609f"/>
<rect x="197" y="48" width="12" height="5" fill="#00728d"/>
<rect x="209" y="48" width="13" height="5" fill="#00837c"/>
<rect x="222" y="48" width="12" height="5" fill="#00936c"/>
<rect x="234" y="48" width="12" height="5" fill="#00a05f"/>
<rect x="246" y="48" width="12" height="5" fill="#00ab54"/>
<rect x="258" y="48" width="13" height="5" fill="#00b44b"/>
<rect x="271" y="48" width="12" height="5" fill="#00bb44"/>
<rect x="283" y="48" width="12" height="5" fill="#00c03f"/>
<rect x="295" y="48" width="25" height="5" fill="#00c23d"/>
<rect x="320" y="48" width="12" height="5" fill="#00c03f"/>
<rect x="332" y="48" width="12" height="5" fill="#00bb44"/>
<rect x="344" y="48" width="13" height="5" fill="#00b44b"/>
<rect x="357" y="48" width="12" height="5" fill="#00ab54"/>
<rect x="369" y="48" width="12" height="5" fill="#00a05f"/>
<rect x="381" y="48" width="12" height="5" fill="#00936c"/>
<rect x="393" y="48" width="13" height="5" fill="#00837c"/>
<rect x="406" y="48" width="12" height="5" fill="#00728d"/>
<rect x="418" y="48" width="12" height="5" fill="#00609f"/>
<rect x="430" y="48" width="13" height="5" fill="#004cb3"/>
<rect x="443" y="48" width="12" height="5" fill="#0037c8"/>
<rect x="455" y="48" width="12" height="5" fill="#0020df"/>
<rect x="467" y="48" width="12" height="5" fill="#0009f6"/>
<rect x="479" y="48" width="13" height="5" fill="#000bff"/>
<rect x="492" y="48" width="12" height="5" fill="#001cff"/>
<rect x="504" y="48" width="12" height="5" fill="#002dff"/>
<rect x="516" y="48" width="12" height="5" fill="#003fff"/>
<rect x="528" y="48" width="13" height="5" fill="#0052ff"/>
<rect x="541" y="48" width="12" height="5" fill="#0065ff"/>
<rect x="553" y="48" width="12" height="5" fill="#0078ff"/>
<rect x="565" y="48" width="13" height="5" fill="#008cff"/>
<rect x="578" y="48" width="12" height="5" fill="#00a0ff"/>
<rect x="590" y="48" width="12" height="5" fill="#00b5ff"/>
<rect x="602" y="48" width="13" height="5" fill="#00c9ff"/>
<rect x="0" y="53" width="13" height="5" fill="#00bcff"/>
<rect x="13" y="53" width="12" height="5" fill="#00a7ff"/>
<rect x="25" y="53" width="12" height="5" fill="#0093ff"/>
<rect x="37" y="53" width="13" height="5" fill="#007eff"/>
<rect x="50" y="53" width="12" height="5" fill="#006aff"/>
<rect x="62" y="53" width="12" height="5" fill="#0056ff"/>
<rect x="74" y="53" width="13" height="5" fill="#0043ff"/>
<rect x="87" y="53" width="12" height="5" fill="#0030ff"/>
<rect x="99" y="53" width="12" height="5" fill="#001dff"/>
<rect x="111" y="53" width="12" height="5" fill="#000bff"/>
<rect x="123" y="53" width="13" height="5" fill="#000af5"/>
<rect x="136" y="53" width="12" height="5" fill="#0024db"/>
<rect x="148" y="53" width="12" height="5" fill="#003dc2"/>
<rect x="160" y="53" width="12" height="5" fill="#0054ab"/>
<rect x="172" y="53" width="13" height="5" fill="#006a95"/>
<rect x="185" y="53" width="12" height="5" fill="#007f80"/>
<rect x="197" y="53" width="12" height="5" fill="#00936c"/>
<rect x="209" y="53" width="13" height="5" fill="#00a45b"/>
<rect x="222" y="53" width="12" height="5" fill="#00b44b"/>
<rect x="234" y="53" width="12" height="5" fill="#00c23d"/>
<rect x="246" y="53" width="12" height="5" fill="#00ce31"/>
<rect x="258" y="53" width="13" height="5" fill="#00d827"/>
<rect x="271" y="53" width="12" height="5" fill="#00e01f"/>
<rect x="283" y="53" width="12" height="5" fill="#00e51a"/>
<rect x="295" y="53" width="25" height="5" fill="#00e718"/>
<rect x="320" y="53" width="12" height="5" fill="#00e51a"/>
<rect x="332" y="53" width="12" height="5" fill="#00e01f"/>
<rect x="344" y="53" width="13" height="5" fill="#00d827"/>
<rect x="357" y="53" width="12" height="5" fill="#00ce31"/>
<rect x="369" y="53" width="12" height="5" fill="#00c23d"/>
<rect x="381" y="53" width="12" height="5" fill="#00b44b"/>
<rect x="393" y="53" width="13" height="5" fill="#00a45b"/>
<rect x="406" y="53" width="12" height="5" fill="#00936c"/>
<rect x="418" y="53" width="12" height="5" fill="#007f80"/>
<rect x="430" y="53" width="13" height="5" fill="#006a95"/>
<rect x="443" y="53" width="12" height="5" fill="#0054ab"/>
<rect x="455" y="53" width="12" height="5" fill="#003dc2"/>
<rect x="467" y="53" width="12" height="5" fill="#0024db"/>
<rect x="479" y="53" width="13" height="5" fill="#000af5"/>
<rect x="492" y="53" width="12" height="5" fill="#000bff"/>
<rect x="504" y="53" width="12" height="5" fill="#001dff"/>
<rect x="516" y="53" width="12" height="5" fill="#0030ff"/>
<rect x="528" y="53" width="13" height="5" fill="#0043ff"/>
<rect x="541" y="53" width="12" height="5" fill="#0056ff"/>
<rect x="553" y="53" width="12" height="5" fill="#006aff"/>
<rect x="565" y="53" width="13" height="5" fill="#007eff"/>
<rect x="578" y="53" width="12" height="5" fill="#0093ff"/>
<rect x="590" y="53" width="12" height="5" fill="#00a7ff"/>
<rect x="602" y="53" width="13" height="5" fill="#00bcff"/>
<rect x="0" y="58" width="13" height="5" fill="#00b0ff"/>
<rect x="13" y="58" width="12" height="5" fill="#009bff"/>
<rect x="25" y="58" width="12" height="5" fill="#0086ff"/>
<rect x="37" y="58" width="13" height="5" fill="#0071ff"/>
<rect x="50" y="58" width="12" height="5" fill="#005cff"/>
<rect x="62" y="58" width="12" height="5" fill="#0048ff"/>
<rect x="74" y="58" width="13" height="5" fill="#0034ff"/>
<rect x="87" y="58" width="12" height="5" fill="#0020ff"/>
<rect x="99" y="58" width="12" height="5" fill="#000dff"/>
<rect x="111" y="58" width="12" height="5" fill="#0009f6"/>
<rect x="123" y="58" width="13" height="5" fill="#0024db"/>
<rect x="136" y="58" width="12" height="5" fill="#003ec1"/>
<rect x="148" y="58" width="12" height="5" fill="#0058a7"/>
<rect x="160" y="58" width="12" height="5" fill="#00708f"/>
<rect x="172" y="58" width="13" height="5" fill="#008877"/>
<rect x="185" y="58" width="12" height="5" fill="#009e61"/>
<rect x="197" y="58" width="12" height="5" fill="#00b24d"/>
<rect x="209" y="58" width="13" height="5" fill="#00c53a"/>
<rect x="222" y="58" width="12" height="5" fill="#00d629"/>
<rect x="234" y="58" width="12" height="5" fill="#00e51a"/>
<rect x="246" y="58" width="12" height="5" fill="#00f10e"/>
<rect x="258" y="58" width="13" height="5" fill="#00fc03"/>
<rect x="271" y="58" width="12" height="5" fill="#03ff00"/>
<rect x="283" y="58" width="12" height="5" fill="#06ff00"/>
<rect x="295" y="58" width="25" height="5" fill="#07ff00"/>
<rect x="320" y="58" width="12" height="5" fill="#06ff00"/>
<rect x="332" y="58" width="12" height="5" fill="#03ff00"/>
<rect x="344" y="58" width="13" height="5" fill="#00fc03"/>
<rect x="357" y="58" width="12" height="5" fill="#00f10e"/>
<rect x="369" y="58" width="12" height="5" fill="#00e51a"/>
<rect x="381" y="58" width="12" height="5" fill="#00d629"/>
<rect x="393" y="58" width="13" height="5" fill="#00c53a"/>
<rect x="406" y="58" width="12" height="5" fill="#00b24d"/>
<rect x="418" y="58" width="12" height="5" fill="#009e61"/>
<rect x="430" y="58" width="13" height="5" fill="#008877"/>
<rect x="443" y="58" width="12" height="5" fill="#00708f"/>
<rect x="455" y="58" width="12" height="5" fill="#0058a7"/>
<rect x="467" y="58" width="12" height="5" fill="#003ec1"/>
<rect x="479" y="58" width="13" height="5" fill="#0024db"/>
<rect x="492" y="58" width="12" height="5" fill="#0009f6"/>
<rect x="504" y="58" width="12" height="5" fill="#000dff"/>
<rect x="516" y="58" width="12" height="5" fill="#0020ff"/>
<rect x="528" y="58" width="13" height="5" fill="#0034ff"/>
<rect x="541" y="58" width="12" height="5" fill="#0048ff"/>
<rect x="553" y="58" width="12" height="5" fill="#005cff"/>
<rect x="565" y="58" width="13" height="5" fill="#0071ff"/>
<rect x="578" y="58" width="12" height="5" fill="#0086ff"/>
<rect x="590" y="58" width="12" height="5" fill="#009bff"/>
<rect x="602" y="58" width="13" height="5" fill="#00b0ff"/>
<rect x="0" y="63" width="13" height="5" fill="#00a5ff"/>
<rect x="13" y="63" width="12" height="5" fill="#008fff"/>
<rect x="25" y="63" width="12" height="5" fill="#0079ff"/>
<rect x="37" y="63" width="13" height="5" fill="#0064ff"/>
<rect x="50" y="63" width="12" height="5" fill="#004fff"/>
<rect x="62" y="63" width="12" height="5" fill="#003aff"/>
<rect x="74" y="63" width="13" height="5" fill="#0026ff"/>
<rect x="87" y="63" width="12" height="5" fill="#0012ff"/>
<rect x="99" y="63" width="12" height="5" fill="#0003fc"/>
<rect x="111" y="63" width="12" height="5" fill="#0020df"/>
<rect x="123" y="63" width="13" height="5" fill="#003dc2"/>
<rect x="136" y="63" width="12" height="5" fill="#0058a7"/>
<rect x="148" y="63" width="12" height="5" fill="#00728d"/>
<rect x="160" y="63" width="12" height="5" fill="#008c73"/>
<rect x="172" y="63" width="13" height="5" fill="#00a45b"/>
<rect x="185" y="63" width="12" height="5" fill="#00bb44"/>
<rect x="197" y="63" width="12" height="5" fill="#00d12e"/>
<rect x="209" y="63" width="13" height="5" fill="#00e51a"/>
<rect x="222" y="63" width="12" height="5" fill="#00f708"/>
<rect x="234" y="63" width="12" height="5" fill="#04ff00"/>
<rect x="246" y="63" width="12" height="5" fill="#0cff00"/>
<rect x="258" y="63" width="13" height="5" fill="#12ff00"/>
<rect x="271" y="63" width="12" height="5" fill="#17ff00"/>
<rect x="283" y="63" width="12" height="5" fill="#1bff00"/>
<rect x="295" y="63" width="25" height="5" fill="#1cff00"/>
<rect x="320" y="63" width="12" height="5" fill="#1bff00"/>
<rect x="332" y="63" width="12" height="5" fill="#17ff00"/>
<rect x="344" y="63" width="13" height="5" fill="#12ff00"/>
<rect x="357" y="63" width="12" height="5" fill="#0cff00"/>
<rect x="369" y="63" width="12" height="5" fill="#04ff00"/>
<rect x="381" y="63" width="12" height="5" fill="#00f708"/>
<rect x="393" y="63" width="13" height="5" fill="#00e51a"/>
<rect x="406" y="63" width="12" height="5" fill="#00d12e"/>
<rect x="418" y="63" width="12" height="5" fill="#00bb44"/>
<rect x="430" y="63" width="13" height="5" fill="#00a45b"/>
<rect x="443" y="63" width="12" height="5" fill="#008c73"/>
<rect x="455" y="63" width="12" height="5" fill="#00728d"/>
<rect x="467" y="63" width="12" height="5" fill="#0058a7"/>
<rect x="479" y="63" width="13" height="5" fill="#003dc2"/>
<rect x="492" y="63" width="12" height="5" fill="#0020df"/>
<rect x="504" y="63" width="12" height="5" fill="#0003fc"/>
<rect x="516" y="63" width="12" height="5" fill="#0012ff"/>
<rect x="528" y="63" width="13" height="5" fill="#0026ff"/>
<rect x="541" y="63" width="12" height="5" fill="#003aff"/>
<rect x="553" y="63" width="12" height="5" fill="#004fff"/>
<rect x="565" y="63" width="13" height="5" fill="#0064ff"/>
<rect x="578" y="63" width="12" height="5" fill="#0079ff"/>
<rect x="590" y="63" width="12" height="5" fill="#008fff"/>
<rect x="602" y="63" width="13" height="5" fill="#00a5ff"/>
<rect x="0" y="68" width="13" height="6" fill="#009aff"/>
<rect x="13" y="68" width="12" height="6" fill="#0084ff"/>
<rect x="25" y="68" width="12" height="6" fill="#006eff"/>
<rect x="37" y="68" width="13" height="6" fill="#0058ff"/>
<rect x="50" y="68" width="12" height="6" fill="#0043ff"/>
<rect x="62" y="68" width="12" height="6" fill="#002dff"/>
<rect x="74" y="68" width="13" height="6" fill="#0018ff"/>
<rect x="87" y="68" width="12" height="6" fill="#0004ff"/>
<rect x="99" y="68" width="12" height="6" fill="#0019e6"/>
<rect x="111" y="68" width="12" height="6" fill="#0037c8"/>
<rect x="123" y="68" width="13" height="6" fill="#0054ab"/>
<rect x="136" y="68" width="12" height="6" fill="#00708f"/>
<rect x="148" y="68" width="12" height="6" fill="#008c73"/>
<rect x="160" y="68" width="12" height="6" fill="#00a758"/>
<rect x="172" y="68" width="13" height="6" fill="#00c03f"/>
<rect x="185" y="68" width="12" height="6" fill="#00d827"/>
<rect x="197" y="68" width="12" height="6" fill="#00ef10"/>
<rect x="209" y="68" width="13" height="6" fill="#03ff00"/>
<rect x="222" y="68" width="12" height="6" fill="#0eff00"/>
<rect x="234" y="68" width="12" height="6" fill="#17ff00"/>
<rect x="246" y="68" width="12" height="6" fill="#20ff00"/>
<rect x="258" y="68" width="13" height="6" fill="#27ff00"/>
<rect x="271" y="68" width="12" height="6" fill="#2cff00"/>
<rect x="283" y="68" width="12" height="6" fill="#30ff00"/>
<rect x="295" y="68" width="25" height="6" fill="#31ff00"/>
<rect x="320" y="68" width="12" height="6" fill="#30ff00"/>
<rect x="332" y="68" width="12" height="6" fill="#2cff00"/>
<rect x="344" y="68" width="13" height="6" fill="#27ff00"/>
<rect x="357" y="68" width="12" height="6" fill="#20ff00"/>
<rect x="369" y="68" width="12" height="6" fill="#17ff00"/>
<rect x="381" y="68" width="12" height="6" fill="#0eff00"/>
<rect x="393" y="68" width="13" height="6" fill="#03ff00"/>
<rect x="406" y="68" width="12" height="6" fill="#00ef10"/>
<rect x="418" y="68" width="12" height="6" fill="#00d827"/>
<rect x="430" y="68" width="13" height="6" fill="#00c03f"/>
<rect x="443" y="68" width="12" height="6" fill="#00a758"/>
<rect x="455" y="68" width="12" height="6" fill="#008c73"/>
<rect x="467" y="68" width="12" height="6" fill="#00708f"/>
<rect x="479" y="68" width="13" height="6" fill="#0054ab"/>
<rect x="492" y="68" width="12" height="6" fill="#0037c8"/>
<rect x="504" y="68" width="12" height="6" fill="#0019e6"/>
<rect x="516" y="68" width="12" height="6" fill="#0004ff"/>
<rect x="528" y="68" width="13" height="6" fill="#0018ff"/>
<rect x="541" y="68" width="12" height="6" fill="#002dff"/>
<rect x="553" y="68" width="12" height="6" fill="#0043ff"/>
<rect x="565" y="68" width="13" height="6" fill="#0058ff"/>
<rect x="578" y="68" width="12" height="6" fill="#006eff"/>
<rect x="590" y="68" width="12" height="6" fill="#0084ff"/>
<rect x="602" y="68" width="13" height="6" fill="#009aff"/>
<rect x="0" y="74" width="13" height="5" fill="#0090ff"/>
<rect x="13" y="74" width="12" height="5" fill="#0079ff"/>
<rect x="25" y="74" width="12" height="5" fill="#0063ff"/>
<rect x="37" y="74" width="13" height="5" fill="#004dff"/>
<rect x="50" y="74" width="12" height="5" fill="#0037ff"/>
<rect x="62" y="74" width="12" height="5" fill="#0021ff"/>
<rect x="74" y="74" width="13" height="5" fill="#000cff"/>
<rect x="87" y="74" width="12" height="5" fill="#000ef1"/>
<rect x="99" y="74" width="12" height="5" fill="#002dd2"/>
<rect x="111" y="74" width="12" height="5" fill="#004cb3"/>
<rect x="123" y="74" width="13" height="5" fill="#006a95"/>
<rect x="136" y="74" width="12" height="5" fill="#008877"/>
<rect x="148" y="74" width="12" height="5" fill="#00a45b"/>
<rect x="160" y="74" width="12" height="5" fill="#00c03f"/>
<rect x="172" y="74" width="13" height="5" fill="#00db24"/>
<rect x="185" y="74" width="12" height="5" fill="#00f40b"/>
<rect x="197" y="74" width="12" height="5" fill="#07ff00"/>
<rect x="209" y="74" width="13" height="5" fill="#14ff00"/>
<rect x="222" y="74" width="12" height="5" fill="#20ff00"/>
<rect x="234" y="74" width="12" height="5" fill="#2aff00"/>
<rect x="246" y="74" width="12" height="5" fill="#33ff00"/>
<rect x="258" y="74" width="13" height="5" fill="#3bff00"/>
<rect x="271" y="74" width="12" height="5" fill="#40ff00"/>
<rect x="283" y="74" width="12" height="5" fill="#44ff00"/>
<rect x="295" y="74" width="25" height="5" fill="#46ff00"/>
<rect x="320" y="74" width="12" height="5" fill="#44ff00"/>
<rect x="332" y="74" width="12" height="5" fill="#40ff00"/>
<rect x="344" y="74" width="13" height="5" fill="#3bff00"/>
<rect x="357" y="74" width="12" height="5" fill="#33ff00"/>
<rect x="369" y="74" width="12" height="5" fill="#2aff00"/>
<rect x="381" y="74" width="12" height="5" fill="#20ff00"/>
<rect x="393" y="74" width="13" height="5" fill="#14ff00"/>
<rect x="406" y="74" width="12" height="5" fill="#07ff00"/>
<rect x="418" y="74" width="12" height="5" fill="#00f40b"/>
<rect x="430" y="74" width="13" height="5" fill="#00db24"/>
<rect x="443" y="74" width="12" height="5" fill="#00c03f"/>
<rect x="455" y="74" width="12" height="5" fill="#00a45b"/>
<rect x="467" y="74" width="12" height="5" fill="#008877"/>
<rect x="479" y="74" width="13" height="5" fill="#006a95"/>
<rect x="492" y="74" width="12" height="5" fill="#004cb3"/>
<rect x="504" y="74" width="12" height="5" fill="#002dd2"/>
<rect x="516" y="74" width="12" height="5" fill="#000ef1"/>
<rect x="528" y="74" width="13" height="5" fill="#000cff"/>
<rect x="541" y="74" width="12" height="5" fill="#0021ff"/>
<rect x="553" y="74" width="12" height="5" fill="#0037ff"/>
<rect x="565" y="74" width="13" height="5" fill="#004dff"/>
<rect x="578" y="74" width="12" height="5" fill="#0063ff"/>
<rect x="590" y="74" width="12" height="5" fill="#0079ff"/>
<rect x="602" y="74" width="13" height="5" fill="#0090ff"/>
<rect x="0" y="79" width="13" height="5" fill="#0087ff"/>
<rect x="13" y="79" width="12" height="5" fill="#0070ff"/>
<rect x="25" y="79" width="12" height="5" fill="#0059ff"/>
<rect x="37" y="79" width="13" height="5" fill="#0043ff"/>
<rect x="50" y="79" width="12" height="5" fill="#002cff"/>
<rect x="62" y="79" width="12" height="5" fill="#0016ff"/>
<rect x="74" y="79" width="13" height="5" fill="#0000ff"/>
<rect x="87" y="79" width="12" height="5" fill="#0020df"/>
<rect x="99" y="79" width="12" height="5" fill="#0040bf"/>
<rect x="111" y="79" width="12" height="5" fill="#00609f"/>
<rect x="123" y="79" width="13" height="5" fill="#007f80"/>
<rect x="136" y="79" width="12" height="5" fill="#009e61"/>
<rect x="148" y="79" width="12" height="5" fill="#00bb44"/>
<rect x="160" y="79" width="12" height="5" fill="#00d827"/>
<rect x="172" y="79" width="13" height="5" fill="#00f40b"/>
<rect x="185" y="79" width="12" height="5" fill="#09ff00"/>
<rect x="197" y="79" width="12" height="5" fill="#17ff00"/>
<rect x="209" y="79" width="13" height="5" fill="#25ff00"/>
<rect x="222" y="79" width="12" height="5" fill="#31ff00"/>
<rect x="234" y="79" width="12" height="5" fill="#3dff00"/>
<rect x="246" y="79" width="12" height="5" fill="#46ff00"/>
<rect x="258" y="79" width="13" height="5" fill="#4fff00"/>
<rect x="271" y="79" width="12" height="5" fill="#55ff00"/>
<rect x="283" y="79" width="12" height="5" fill="#59ff00"/>
<rect x="295" y="79" width="25" height="5" fill="#5bff00"/>
<rect x="320" y="79" width="12" height="5" fill="#59ff00"/>
<rect x="332" y="79" width="12" height="5" fill="#55ff00"/>
<rect x="344" y="79" width="13" height="5" fill="#4fff00"/>
<rect x="357" y="79" width="12" height="5" fill="#46ff00"/>
<rect x="369" y="79" width="12" height="5" fill="#3dff00"/>
<rect x="381" y="79" width="12" height="5" fill="#31ff00"/>
<rect x="393" y="79" width="13" height="5" fill="#25ff00"/>
<rect x="406" y="79" width="12" height="5" fill="#17ff00"/>
<rect x="418" y="79" width="12" height="5" fill="#09ff00"/>
<rect x="430" y="79" width="13" height="5" fill="#00f40b"/>
<rect x="443" y="79" width="12" height="5" fill="#00d827"/>
<rect x="455" y="79" width="12" height="5" fill="#00bb44"/>
<rect x="467" y="79" width="12" height="5" fill="#009e61"/>
<rect x="479" y="79" width="13" height="5" fill="#007f80"/>
<rect x="492" y="79" width="12" height="5" fill="#00609f"/>
<rect x="504" y="79" width="12" height="5" fill="#0040bf"/>
<rect x="516" y="79" width="12" height="5" fill="#0020df"/>
<rect x="528" y="79" width="13" height="5" fill="#0000ff"/>
<rect x="541" y="79" width="12" height="5" fill="#0016ff"/>
<rect x="553" y="79" width="12" height="5" fill="#002cff"/>
<rect x="565" y="79" width="13" height="5" fill="#0043ff"/>
<rect x="578" y="79" width="12" height="5" fill="#0059ff"/>
<rect x="590" y="79" width="12" height="5" fill="#0070ff"/>
<rect x="602" y="79" width="13" height="5" fill="#0087ff"/>
<rect x="0" y="84" width="13" height="5" fill="#007eff"/>
<rect x="13" y="84" width="12" height="5" fill="#0067ff"/>
<rect x="25" y="84" width="12" height="5" fill="#0050ff"/>
<rect x="37" y="84" width="13" height="5" fill="#0039ff"/>
<rect x="50" y="84" width="12" height="5" fill="#0022ff"/>
<rect x="62" y="84" width="12" height="5" fill="#000cff"/>
<rect x="74" y="84" width="13" height="5" fill="#0010ef"/>
<rect x="87" y="84" width="12" height="5" fill="#0031ce"/>
<rect x="99" y="84" width="12" height="5" fill="#0052ad"/>
<rect x="111" y="84" width="12" height="5" fill="#00728d"/>
<rect x="123" y="84" width="13" height="5" fill="#00936c"/>
<rect x="136" y="84" width="12" height="5" fill="#00b24d"/>
<rect x="148" y="84" width="12" height="5" fill="#00d12e"/>
<rect x="160" y="84" width="12" height="5" fill="#00ef10"/>
<rect x="172" y="84" width="13" height="5" fill="#07ff00"/>
<rect x="185" y="84" width="12" height="5" fill="#17ff00"/>
<rect x="197" y="84" width="12" height="5" fill="#27ff00"/>
<rect x="209" y="84" width="13" height="5" fill="#35ff00"/>
<rect x="222" y="84" width="12" height="5" fill="#42ff00"/>
<rect x="234" y="84" width="12" height="5" fill="#4fff00"/>
<rect x="246" y="84" width="12" height="5" fill="#59ff00"/>
<rect x="258" y="84" width="13" height="5" fill="#62ff00"/>
<rect x="271" y="84" width="12" height="5" fill="#69ff00"/>
<rect x="283" y="84" width="12" height="5" fill="#6eff00"/>
<rect x="295" y="84" width="25" height="5" fill="#70ff00"/>
<rect x="320" y="84" width="12" height="5" fill="#6eff00"/>
<rect x="332" y="84" width="12" height="5" fill="#69ff00"/>
<rect x="344" y="84" width="13" height="5" fill="#62ff00"/>
<rect x="357" y="84" width="12" height="5" fill="#59ff00"/>
<rect x="369" y="84" width="12" height="5" fill="#4fff00"/>
<rect x="381" y="84" width="12" height="5" fill="#42ff00"/>
<rect x="393" y="84" width="13" height="5" fill="#35ff00"/>
<rect x="406" y="84" width="12" height="5" fill="#27ff00"/>
<rect x="418" y="84" width="12" height="5" fill="#17ff00"/>
<rect x="430" y="84" width="13" height="5" fill="#07ff00"/>
<rect x="443" y="84" width="12" height="5" fill="#00ef10"/>
<rect x="455" y="84" width="12" height="5" fill="#00d12e"/>
<rect x="467" y="84" width="12" height="5" fill="#00b24d"/>
<rect x="479" y="84" width="13" height="5" fill="#00936c"/>
<rect x="492" y="84" width="12" height="5" fill="#00728d"/>
<rect x="504" y="84" width="12" height="5" fill="#0052ad"/>
<rect x="516" y="84" width="12" height="5" fill="#0031ce"/>
<rect x="528" y="84" width="13" height="5" fill="#0010ef"/>
<rect x="541" y="84" width="12" height="5" fill="#000cff"/>
<rect x="553" y="84" width="12" height="5" fill="#0022ff"/>
<rect x="565" y="84" width="13" height="5" fill="#0039ff"/>
<rect x="578" y="84" width="12" height="5" fill="#0050ff"/>
<rect x="590" y="84" width="12" height="5" fill="#0067ff"/>
<rect x="602" y="84" width="13" height="5" fill="#007eff"/>
<rect x="0" y="89" width="13" height="6" fill="#0077ff"/>
<rect x="13" y="89" width="12" height="6" fill="#005fff"/>
<rect x="25" y="89" width="12" height="6" fill="#0048ff"/>
<rect x="37" y="89" width="13" height="6" fill="#0031ff"/>
<rect x="50" y="89" width="12" height="6" fill="#001aff"/>
<rect x="62" y="89" width="12" height="6" fill="#0003ff"/>
<rect x="74" y="89" width="13" height="6" fill="#001ee1"/>
<rect x="87" y="89" width="12" height="6" fill="#0040bf"/>
<rect x="99" y="89" width="12" height="6" fill="#00629d"/>
<rect x="111" y="89" width="12" height="6" fill="#00837c"/>
<rect x="123" y="89" width="13" height="6" fill="#00a45b"/>
<rect x="136" y="89" width="12" height="6" fill="#00c53a"/>
<rect x="148" y="89" width="12" height="6" fill="#00e51a"/>
<rect x="160" y="89" width="12" height="6" fill="#03ff00"/>
<rect x="172" y="89" width="13" height="6" fill="#14ff00"/>
<rect x="185" y="89" width="12" height="6" fill="#25ff00"/>
<rect x="197" y="89" width="12" height="6" fill="#35ff00"/>
<rect x="209" y="89" width="13" height="6" fill="#44ff00"/>
<rect x="222" y="89" width="12" height="6" fill="#53ff00"/>
<rect x="234" y="89" width="12" height="6" fill="#60ff00"/>
<rect x="246" y="89" width="12" height="6" fill="#6cff00"/>
<rect x="258" y="89" width="13" height="6" fill="#75ff00"/>
<rect x="271" y="89" width="12" height="6" fill="#7dff00"/>
<rect x="283" y="89" width="12" height="6" fill="#83ff00"/>
<rect x="295" y="89" width="25" height="6" fill="#85ff00"/>
<rect x="320" y="89" width="12" height="6" fill="#83ff00"/>
<rect x="332" y="89" width="12" height="6" fill="#7dff00"/>
<rect x="344" y="89" width="13" height="6" fill="#75ff00"/>
<rect x="357" y="89" width="12" height="6" fill="#6cff00"/>
<rect x="369" y="89" width="12" height="6" fill="#60ff00"/>
<rect x="381" y="89" width="12" height="6" fill="#53ff00"/>
<rect x="393" y="89" width="13" height="6" fill="#44ff00"/>
<rect x="406" y="89" width="12" height="6" fill="#35ff00"/>
<rect x="418" y="89" width="12" height="6" fill="#25ff00"/>
<rect x="430" y="89" width="13" height="6" fill="#14ff00"/>
<rect x="443" y="89" width="12" height="6" fill="#03ff00"/>
<rect x="455" y="89" width="12" height="6" fill="#00e51a"/>
<rect x="467" y="89" width="12" height="6" fill="#00c53a"/>
<rect x="479" y="89" width="13" height="6" fill="#00a45b"/>
<rect x="492" y="89" width="12" height="6" fill="#00837c"/>
<rect x="504" y="89" width="12" height="6" fill="#00629d"/>
<rect x="516" y="89" width="12" height="6" fill="#0040bf"/>
<rect x="528" y="89" width="13" height="6" fill="#001ee1"/>
<rect x="541" y="89" width="12" height="6" fill="#0003ff"/>
<rect x="553" y="89" width="12" height="6" fill="#001aff"/>
<rect x="565" y="89" width="13" height="6" fill="#0031ff"/>
<rect x="578" y="89" width="12" height="6" fill="#0048ff"/>
<rect x="590" y="89" width="12" height="6" fill="#005fff"/>
<rect x="602" y="89" width="13" height="6" fill="#0077ff"/>
<rect x="0" y="95" width="13" height="5" fill="#0070ff"/>
<rect x="13" y="95" width="12" height="5" fill="#0058ff"/>
<rect x="25" y="95" width="12" height="5" fill="#0041ff"/>
<rect x="37" y="95" width="13" height="5" fill="#0029ff"/>
<rect x="50" y="95" width="12" height="5" fill="#0012ff"/>
<rect x="62" y="95" width="12" height="5" fill="#0009f6"/>
<rect x="74" y="95" width="13" height="5" fill="#002bd4"/>
<rect x="87" y="95" width="12" height="5" fill="#004eb1"/>
<rect x="99" y="95" width="12" height="5" fill="#00708f"/>
<rect x="111" y="95" width="12" height="5" fill="#00936c"/>
<rect x="123" y="95" width="13" height="5" fill="#00b44b"/>
<rect x="136" y="95" width="12" height="5" fill="#00d629"/>
<rect x="148" y="95" width="12" height="5" fill="#00f708"/>
<rect x="160" y="95" width="12" height="5" fill="#0eff00"/>
<rect x="172" y="95" width="13" height="5" fill="#20ff00"/>
<rect x="185" y="95" width="12" height="5" fill="#31ff00"/>
<rect x="197" y="95" width="12" height="5" fill="#42ff00"/>
<rect x="209" y="95" width="13" height="5" fill="#53ff00"/>
<rect x="222" y="95" width="12" height="5" fill="#62ff00"/>
<rect x="234" y="95" width="12" height="5" fill="#70ff00"/>
<rect x="246" y="95" width="12" height="5" fill="#7dff00"/>
<rect x="258" y="95" width="13" height="5" fill="#88ff00"/>
<rect x="271" y="95" width="12" height="5" fill="#91ff00"/>
<rect x="283" y="95" width="12" height="5" fill="#97ff00"/>
<rect x="295" y="95" width="25" height="5" fill="#9aff00"/>
<rect x="320" y="95" width="12" height="5" fill="#97ff00"/>
<rect x="332" y="95" width="12" height="5" fill="#91ff00"/>
<rect x="344" y="95" width="13" height="5" fill="#88ff00"/>
<rect x="357" y="95" width="12" height="5" fill="#7dff00"/>
<rect x="369" y="95" width="12" height="5" fill="#70ff00"/>
<rect x="381" y="95" width="12" height="5" fill="#62ff00"/>
<rect x="393" y="95" width="13" height="5" fill="#53ff00"/>
<rect x="406" y="95" width="12" height="5" fill="#42ff00"/>
<rect x="418" y="95" width="12" height="5" fill="#31ff00"/>
<rect x="430" y="95" width="13" height="5" fill="#20ff00"/>
<rect x="443" y="95" width="12" height="5" fill="#0eff00"/>
<rect x="455" y="95" width="12" height="5" fill="#00f708"/>
<rect x="467" y="95" width="12" height="5" fill="#00d629"/>
<rect x="479" y="95" width="13" height="5" fill="#00b44b"/>
<rect x="492" y="95" width="12" height="5" fill="#00936c"/>
<rect x="504" y="95" width="12" height="5" fill="#00708f"/>
<rect x="516" y="95" width="12" height="5" fill="#004eb1"/>
<rect x="528" y="95" width="13" height="5" fill="#002bd4"/>
<rect x="541" y="95" width="12" height="5" fill="#0009f6"/>
<rect x="553" y="95" width="12" height="5" fill="#0012ff"/>
<rect x="565" y="95" width="13" height="5" fill="#0029ff"/>
<rect x="578" y="95" width="12" height="5" fill="#0041ff"/>
<rect x="590" y="95" width="12" height="5" fill="#0058ff"/>
<rect x="602" y="95" width="13" height="5" fill="#0070ff"/>
<rect x="0" y="100" width="13" height="5" fill="#006aff"/>
<rect x="13" y="100" width="12" height="5" fill="#0052ff"/>
<rect x="25" y="100" width="12" height="5" fill="#003aff"/>
<rect x="37" y="100" width="13" height="5" fill="#0022ff"/>
<rect x="50" y="100" width="12" height="5" fill="#000bff"/>
<rect x="62" y="100" width="12" height="5" fill="#0013ec"/>
<rect x="74" y="100" width="13" height="5" fill="#0037c8"/>
<rect x="87" y="100" width="12" height="5" fill="#005aa5"/>
<rect x="99" y="100" width="12" height="5" fill="#007d82"/>
<rect x="111" y="100" width="12" height="5" fill="#00a05f"/>
<rect x="123" y="100" width="13" height="5" fill="#00c23d"/>
<rect x="136" y="100" width="12" height="5" fill="#00e51a"/>
<rect x="148" y="100" width="12" height="5" fill="#04ff00"/>
<rect x="160" y="100" width="12" height="5" fill="#17ff00"/>
<rect x="172" y="100" width="13" height="5" fill="#2aff00"/>
<rect x="185" y="100" width="12" height="5" fill="#3dff00"/>
<rect x="197" y="100" width="12" height="5" fill="#4fff00"/>
<rect x="209" y="100" width="13" height="5" fill="#60ff00"/>
<rect x="222" y="100" width="12" height="5" fill="#70ff00"/>
<rect x="234" y="100" width="12" height="5" fill="#80ff00"/>
<rect x="246" y="100" width="12" height="5" fill="#8eff00"/>
<rect x="258" y="100" width="13" height="5" fill="#9aff00"/>
<rect x="271" y="100" width="12" height="5" fill="#a4ff00"/>
<rect x="283" y="100" width="12" height="5" fill="#acff00"/>
<rect x="295" y="100" width="25" height="5" fill="#afff00"/>
<rect x="320" y="100" width="12" height="5" fill="#acff00"/>
<rect x="332" y="100" width="12" height="5" fill="#a4ff00"/>
<rect x="344" y="100" width="13" height="5" fill="#9aff00"/>
<rect x="357" y="100" width="12" height="5" fill="#8eff00"/>
<rect x="369" y="100" width="12" height="5" fill="#80ff00"/>
<rect x="381" y="100" width="12" height="5" fill="#70ff00"/>
<rect x="393" y="100" width="13" height="5" fill="#60ff00"/>
<rect x="406" y="100" width="12" height="5" fill="#4fff00"/>
<rect x="418" y="100" width="12" height="5" fill="#3dff00"/>
<rect x="430" y="100" width="13" height="5" fill="#2aff00"/>
<rect x="443" y="100" width="12" height="5" fill="#17ff00"/>
<rect x="455" y="100" width="12" height="5" fill="#04ff00"/>
<rect x="467" y="100" width="12" height="5" fill="#00e51a"/>
<rect x="479" y="100" width="13" height="5" fill="#00c23d"/>
<rect x="492" y="100" width="12" height="5" fill="#00a05f"/>
<rect x="504" y="100" width="12" height="5" fill="#007d82"/>
<rect x="516" y="100" width="12" height="5" fill="#005aa5"/>
<rect x="528" y="100" width="13" height="5" fill="#0037c8"/>
<rect x="541" y="100" width="12" height="5" fill="#0013ec"/>
<rect x="553" y="100" width="12" height="5" fill="#000bff"/>
<rect x="565" y="100" width="13" height="5" fill="#0022ff"/>
<rect x="578" y="100" width="12" height="5" fill="#003aff"/>
<rect x="590" y="100" width="12" height="5" fill="#0052ff"/>
<rect x="602" y="100" width="13" height="5" fill="#006aff"/>
<rect x="0" y="105" width="13" height="5" fill="#0065ff"/>
<rect x="13" y="105" width="12" height="5" fill="#004dff"/>
<rect x="25" y="105" width="12" height="5" fill="#0035ff"/>
<rect x="37" y="105" width="13" height="5" fill="#001dff"/>
<rect x="50" y="105" width="12" height="5" fill="#0005ff"/>
<rect x="62" y="105" width="12" height="5" fill="#001de2"/>
<rect x="74" y="105" width="13" height="5" fill="#0040bf"/>
<rect x="87" y="105" width="12" height="5" fill="#00649b"/>
<rect x="99" y="105" width="12" height="5" fill="#008877"/>
<rect x="111" y="105" width="12" height="5" fill="#00ab54"/>
<rect x="123" y="105" width="13" height="5" fill="#00ce31"/>
<rect x="136" y="105" width="12" height="5" fill="#00f10e"/>
<rect x="148" y="105" width="12" height="5" fill="#0cff00"/>
<rect x="160" y="105" width="12" height="5" fill="#20ff00"/>
<rect x="172" y="105" width="13" height="5" fill="#33ff00"/>
<rect x="185" y="105" width="12" height="5" fill="#46ff00"/>
<rect x="197" y="105" width="12" height="5" fill="#59ff00"/>
<rect x="209" y="105" width="13" height="5" fill="#6cff00"/>
<rect x="222" y="105" width="12" height="5" fill="#7dff00"/>
<rect x="234" y="105" width="12" height="5" fill="#8eff00"/>
<rect x="246" y="105" width="12" height="5" fill="#9eff00"/>
<rect x="258" y="105" width="13" height="5" fill="#acff00"/>
<rect x="271" y="105" width="12" height="5" fill="#b7ff00"/>
<rect x="283" y="105" width="12" height="5" fill="#c0ff00"/>
<rect x="295" y="105" width="25" height="5" fill="#c4ff00"/>
<rect x="320" y="105" width="12" height="5" fill="#c0ff00"/>
<rect x="332" y="105" width="12" height="5" fill="#b7ff00"/>
<rect x="344" y="105" width="13" height="5" fill="#acff00"/>
<rect x="357" y="105" width="12" height="5" fill="#9eff00"/>
<rect x="369" y="105" width="12" height="5" fill="#8eff00"/>
<rect x="381" y="105" width="12" height="5" fill="#7dff00"/>
<rect x="393" y="105" width="13" height="5" fill="#6cff00"/>
<rect x="406" y="105" width="12" height="5" fill="#59ff00"/>
<rect x="418" y="105" width="12" height="5" fill="#46ff00"/>
<rect x="430" y="105" width="13" height="5" fill="#33ff00"/>
<rect x="443" y="105" width="12" height="5" fill="#20ff00"/>
<rect x="455" y="105" width="12" height="5" fill="#0cff00"/>
<rect x="467" y="105" width="12" height="5" fill="#00f10e"/>
<rect x="479" y="105" width="13" height="5" fill="#00ce31"/>
<rect x="492" y="105" width="12" height="5" fill="#00ab54"/>
<rect x="504" y="105" width="12" height="5" fill="#008877"/>
<rect x="516" y="105" width="12" height="5" fill="#00649b"/>
<rect x="528" y="105" width="13" height="5" fill="#0040bf"/>
<rect x="541" y="105" width="12" height="5" fill="#001de2"/>
<rect x="553" y="105" width="12" height="5" fill="#0005ff"/>
<rect x="565" y="105" width="13" height="5" fill="#001dff"/>
<rect x="578" y="105" width="12" height="5" fill="#0035ff"/>
<rect x="590" y="105" width="12" height="5" fill="#004dff"/>
<rect x="602" y="105" width="13" height="5" fill="#0065ff"/>
<rect x="0" y="110" width="13" height="5" fill="#0061ff"/>
<rect x="13" y="110" width="12" height="5" fill="#0049ff"/>
<rect x="25" y="110" width="12" height="5" fill="#0031ff"/>
<rect x="37" y="110" width="13" height="5" fill="#0018ff"/>
<rect x="50" y="110" width="12" height="5" fill="#0000ff"/>
<rect x="62" y="110" width="12" height="5" fill="#0024db"/>
<rect x="74" y="110" width="13" height="5" fill="#0048b7"/>
<rect x="87" y="110" width="12" height="5" fill="#006c93"/>
<rect x="99" y="110" width="12" height="5" fill="#00906f"/>
<rect x="111" y="110" width="12" height="5" fill="#00b44b"/>
<rect x="123" y="110" width="13" height="5" fill="#00d827"/>
<rect x="136" y="110" width="12" height="5" fill="#00fc03"/>
<rect x="148" y="110" width="12" height="5" fill="#12ff00"/>
<rect x="160" y="110" width="12" height="5" fill="#27ff00"/>
<rect x="172" y="110" width="13" height="5" fill="#3bff00"/>
<rect x="185" y="110" width="12" height="5" fill="#4fff00"/>
<rect x="197" y="110" width="12" height="5" fill="#62ff00"/>
<rect x="209" y="110" width="13" height="5" fill="#75ff00"/>
<rect x="222" y="110" width="12" height="5" fill="#88ff00"/>
<rect x="234" y="110" width="12" height="5" fill="#9aff00"/>
<rect x="246" y="110" width="12" height="5" fill="#acff00"/>
<rect x="258" y="110" width="13" height="5" fill="#bbff00"/>
<rect x="271" y="110" width="12" height="5" fill="#c9ff00"/>
<rect x="283" y="110" width="12" height="5" fill="#d3ff00"/>
<rect x="295" y="110" width="25" height="5" fill="#d9ff00"/>
<rect x="320" y="110" width="12" height="5" fill="#d3ff00"/>
<rect x="332" y="110" width="12" height="5" fill="#c9ff00"/>
<rect x="344" y="110" width="13" height="5" fill="#bbff00"/>
<rect x="357" y="110" width="12" height="5" fill="#acff00"/>
<rect x="369" y="110" width="12" height="5" fill="#9aff00"/>
<rect x="381" y="110" width="12" height="5" fill="#88ff00"/>
<rect x="393" y="110" width="13" height="5" fill="#75ff00"/>
<rect x="406" y="110" width="12" height="5" fill="#62ff00"/>
<rect x="418" y="110" width="12" height="5" fill="#4fff00"/>
<rect x="430" y="110" width="13" height="5" fill="#3bff00"/>
<rect x="443" y="110" width="12" height="5" fill="#27ff00"/>
<rect x="455" y="110" width="12" height="5" fill="#12ff00"/>
<rect x="467" y="110" width="12" height="5" fill="#00fc03"/>
<rect x="479" y="110" width="13" height="5" fill="#00d827"/>
<rect x="492" y="110" width="12" height="5" fill="#00b44b"/>
<rect x="504" y="110" width="12" height="5" fill="#00906f"/>
<rect x="516" y="110" width="12" height="5" fill="#006c93"/>
<rect x="528" y="110" width="13" height="5" fill="#0048b7"/>
<rect x="541" y="110" width="12" height="5" fill="#0024db"/>
<rect x="553" y="110" width="12" height="5" fill="#0000ff"/>
<rect x="565" y="110" width="13" height="5" fill="#0018ff"/>
<rect x="578" y="110" width="12" height="5" fill="#0031ff"/>
<rect x="590" y="110" width="12" height="5" fill="#0049ff"/>
<rect x="602" y="110" width="13" height="5" fill="#0061ff"/>
<rect x="0" y="115" width="13" height="6" fill="#005eff"/>
<rect x="13" y="115" width="12" height="6" fill="#0046ff"/>
<rect x="25" y="115" width="12" height="6" fill="#002dff"/>
<rect x="37" y="115" width="13" height="6" fill="#0015ff"/>
<rect x="50" y="115" width="12" height="6" fill="#0005fa"/>
<rect x="62" y="115" width="12" height="6" fill="#002ad5"/>
<rect x="74" y="115" width="13" height="6" fill="#004eb1"/>
<rect x="87" y="115" width="12" height="6" fill="#00728d"/>
<rect x="99" y="115" width="12" height="6" fill="#009768"/>
<rect x="111" y="115" width="12" height="6" fill="#00bb44"/>
<rect x="123" y="115" width="13" height="6" fill="#00e01f"/>
<rect x="136" y="115" width="12" height="6" fill="#03ff00"/>
<rect x="148" y="115" width="12" height="6" fill="#17ff00"/>
<rect x="160" y="115" width="12" height="6" fill="#2cff00"/>
<rect x="172" y="115" width="13" height="6" fill="#40ff00"/>
<rect x="185" y="115" width="12" height="6" fill="#55ff00"/>
<rect x="197" y="115" width="12" height="6" fill="#69ff00"/>
<rect x="209" y="115" width="13" height="6" fill="#7dff00"/>
<rect x="222" y="115" width="12" height="6" fill="#91ff00"/>
<rect x="234" y="115" width="12" height="6" fill="#a4ff00"/>
<rect x="246" y="115" width="12" height="6" fill="#b7ff00"/>
<rect x="258" y="115" width="13" height="6" fill="#c9ff00"/>
<rect x="271" y="115" width="12" height="6" fill="#d9ff00"/>
<rect x="283" y="115" width="12" height="6" fill="#e6ff00"/>
<rect x="295" y="115" width="25" height="6" fill="#eeff00"/>
<rect x="320" y="115" width="12" height="6" fill="#e6ff00"/>
<rect x="332" y="115" width="12" height="6" fill="#d9ff00"/>
<rect x="344" y="115" width="13" height="6" fill="#c9ff00"/>
<rect x="357" y="115" width="12" height="6" fill="#b7ff00"/>
<rect x="369" y="115" width="12" height="6" fill="#a4ff00"/>
<rect x="381" y="115" width="12" height="6" fill="#91ff00"/>
<rect x="393" y="115" width="13" height="6" fill="#7dff00"/>
<rect x="406" y="115" width="12" height="6" fill="#69ff00"/>
<rect x="418" y="115" width="12" height="6" fill="#55ff00"/>
<rect x="430" y="115" width="13" height="6" fill="#40ff00"/>
<rect x="443" y="115" width="12" height="6" fill="#2cff00"/>
<rect x="455" y="115" width="12" height="6" fill="#17ff00"/>
<rect x="467" y="115" width="12" height="6" fill="#03ff00"/>
<rect x="479" y="115" width="13" height="6" fill="#00e01f"/>
<rect x="492" y="115" width="12" height="6" fill="#00bb44"/>
<rect x="504" y="115" width="12" height="6" fill="#009768"/>
<rect x="516" y="115" width="12" height="6" fill="#00728d"/>
<rect x="528" y="115" width="13" height="6" fill="#004eb1"/>
<rect x="541" y="115" width="12" height="6" fill="#002ad5"/>
<rect x="553" y="115" width="12" height="6" fill="#0005fa"/>
<rect x="565" y="115" width="13" height="6" fill="#0015ff"/>
<rect x="578" y="115" width="12" height="6" fill="#002dff"/>
<rect x="590" y="115" width="12" height="6" fill="#0046ff"/>
<rect x="602" y="115" width="13" height="6" fill="#005eff"/>
<rect x="0" y="121" width="13" height="5" fill="#005cff"/>
<rect x="13" y="121" width="12" height="5" fill="#0044ff"/>
<rect x="25" y="121" width="12" height="5" fill="#002bff"/>
<rect x="37" y="121" width="13" height="5" fill="#0013ff"/>
<rect x="50" y="121" width="12" height="5" fill="#0009f6"/>
<rect x="62" y="121" width="12" height="5" fill="#002dd2"/>
<rect x="74" y="121" width="13" height="5" fill="#0052ad"/>
<rect x="87" y="121" width="12" height="5" fill="#007788"/>
<rect x="99" y="121" width="12" height="5" fill="#009b64"/>
<rect x="111" y="121" width="12" height="5" fill="#00c03f"/>
<rect x="123" y="121" width="13" height="5" fill="#00e51a"/>
<rect x="136" y="121" width="12" height="5" fill="#06ff00"/>
<rect x="148" y="121" width="12" height="5" fill="#1bff00"/>
<rect x="160" y="121" width="12" height="5" fill="#30ff00"/>
<rect x="172" y="121" width="13" height="5" fill="#44ff00"/>
<rect x="185" y="121" width="12" height="5" fill="#59ff00"/>
<rect x="197" y="121" width="12" height="5" fill="#6eff00"/>
<rect x="209" y="121" width="13" height="5" fill="#83ff00"/>
<rect x="222" y="121" width="12" height="5" fill="#97ff00"/>
<rect x="234" y="121" width="12" height="5" fill="#acff00"/>
<rect x="246" y="121" width="12" height="5" fill="#c0ff00"/>
<rect x="258" y="121" width="13" height="5" fill="#d3ff00"/>
<rect x="271" y="121" width="12" height="5" fill="#e6ff00"/>
<rect x="283" y="121" width="12" height="5" fill="#f7ff00"/>
<rect x="295" y="121" width="25" height="5" fill="#ffe900"/>
<rect x="320" y="121" width="12" height="5" fill="#f7ff00"/>
<rect x="332" y="121" width="12" height="5" fill="#e6ff00"/>
<rect x="344" y="121" width="13" height="5" fill="#d3ff00"/>
<rect x="357" y="121" width="12" height="5" fill="#c0ff00"/>
<rect x="369" y="121" width="12" height="5" fill="#acff00"/>
<rect x="381" y="121" width="12" height="5" fill="#97ff00"/>
<rect x="393" y="121" width="13" height="5" fill="#83ff00"/>
<rect x="406" y="121" width="12" height="5" fill="#6eff00"/>
<rect x="418" y="121" width="12" height="5" fill="#59ff00"/>
<rect x="430" y="121" width="13" height="5" fill="#44ff00"/>
<rect x="443" y="121" width="12" height="5" fill="#30ff00"/>
<rect x="455" y="121" width="12" height="5" fill="#1bff00"/>
<rect x="467" y="121" width="12" height="5" fill="#06ff00"/>
<rect x="479" y="121" width="13" height="5" fill="#00e51a"/>
<rect x="492" y="121" width="12" height="5" fill="#00c03f"/>
<rect x="504" y="121" width="12" height="5" fill="#009b64"/>
<rect x="516" y="121" width="12" height="5" fill="#007788"/>
<rect x="528" y="121" width="13" height="5" fill="#0052ad"/>
<rect x="541" y="121" width="12" height="5" fill="#002dd2"/>
<rect x="553" y="121" width="12" height="5" fill="#0009f6"/>
<rect x="565" y="121" width="13" height="5" fill="#0013ff"/>
<rect x="578" y="121" width="12" height="5" fill="#002bff"/>
<rect x="590" y="121" width="12" height="5" fill="#0044ff"/>
<rect x="602" y="121" width="13" height="5" fill="#005cff"/>
<rect x="0" y="126" width="13" height="5" fill="#005bff"/>
<rect x="13" y="126" width="12" height="5" fill="#0043ff"/>
<rect x="25" y="126" width="12" height="5" fill="#002aff"/>
<rect x="37" y="126" width="13" height="5" fill="#0012ff"/>
<rect x="50" y="126" width="12" height="5" fill="#000af5"/>
<rect x="62" y="126" width="12" height="5" fill="#002fd0"/>
<rect x="74" y="126" width="13" height="5" fill="#0054ab"/>
<rect x="87" y="126" width="12" height="5" fill="#007986"/>
<rect x="99" y="126" width="12" height="5" fill="#009e61"/>
<rect x="111" y="126" width="12" height="5" fill="#00c23d"/>
<rect x="123" y="126" width="13" height="5" fill="#00e718"/>
<rect x="136" y="126" width="12" height="5" fill="#07ff00"/>
<rect x="148" y="126" width="12" height="5" fill="#1cff00"/>
<rect x="160" y="126" width="12" height="5" fill="#31ff00"/>
<rect x="172" y="126" width="13" height="5" fill="#46ff00"/>
<rect x="185" y="126" width="12" height="5" fill="#5bff00"/>
<rect x="197" y="126" width="12" height="5" fill="#70ff00"/>
<rect x="209" y="126" width="13" height="5" fill="#85ff00"/>
<rect x="222" y="126" width="12" height="5" fill="#9aff00"/>
<rect x="234" y="126" width="12" height="5" fill="#afff00"/>
<rect x="246" y="126" width="12" height="5" fill="#c4ff00"/>
<rect x="258" y="126" width="13" height="5" fill="#d9ff00"/>
<rect x="271" y="126" width="12" height="5" fill="#eeff00"/>
<rect x="283" y="126" width="12" height="5" fill="#ffe900"/>
<rect x="295" y="126" width="25" height="5" fill="#ff6800"/>
<rect x="320" y="126" width="12" height="5" fill="#ffe900"/>
<rect x="332" y="126" width="12" height="5" fill="#eeff00"/>
<rect x="344" y="126" width="13" height="5" fill="#d9ff00"/>
<rect x="357" y="126" width="12" height="5" fill="#c4ff00"/>
<rect x="369" y="126" width="12" height="5" fill="#afff00"/>
<rect x="381" y="126" width="12" height="5" fill="#9aff00"/>
<rect x="393" y="126" width="13" height="5" fill="#85ff00"/>
<rect x="406" y="126" width="12" height="5" fill="#70ff00"/>
<rect x="418" y="126" width="12" height="5" fill="#5bff00"/>
<rect x="430" y="126" width="13" height="5" fill="#46ff00"/>
<rect x="443" y="126" width="12" height="5" fill="#31ff00"/>
<rect x="455" y="126" width="12" height="5" fill="#1cff00"/>
<rect x="467" y="126" width="12" height="5" fill="#07ff00"/>
<rect x="479" y="126" width="13" height="5" fill="#00e718"/>
<rect x="492" y="126" width="12" height="5" fill="#00c23d"/>
<rect x="504" y="126" width="12" height="5" fill="#009e61"/>
<rect x="516" y="126" width="12" height="5" fill="#007986"/>
<rect x="528" y="126" width="13" height="5" fill="#0054ab"/>
<rect x="541" y="126" width="12" height="5" fill="#002fd0"/>
<rect x="553" y="126" width="12" height="5" fill="#000af5"/>
<rect x="565" y="126" width="13" height="5" fill="#0012ff"/>
<rect x="578" y="126" width="12" height="5" fill="#002aff"/>
<rect x="590" y="126" width="12" height="5" fill="#0043ff"/>
<rect x="602" y="126" width="13" height="5" fill="#005bff"/>
<rect x="0" y="131" width="13" height="5" fill="#005bff"/>
<rect x="13" y="131" width="12" height="5" fill="#0043ff"/>
<rect x="25" y="131" width="12" height="5" fill="#002aff"/>
<rect x="37" y="131" width="13" height="5" fill="#0012ff"/>
<rect x="50" y="131" width="12" height="5" fill="#000af5"/>
<rect x="62" y="131" width="12" height="5" fill="#002fd0"/>
<rect x="74" y="131" width="13" height="5" fill="#0054ab"/>
<rect x="87" y="131" width="12" height="5" fill="#007986"/>
<rect x="99" y="131" width="12" height="5" fill="#009e61"/>
<rect x="111" y="131" width="12" height="5" fill="#00c23d"/>
<rect x="123" y="131" width="13" height="5" fill="#00e718"/>
<rect x="136" y="131" width="12" height="5" fill="#07ff00"/>
<rect x="148" y="131" width="12" height="5" fill="#1cff00"/>
<rect x="160" y="131" width="12" height="5" fill="#31ff00"/>
<rect x="172" y="131" width="13" height="5" fill="#46ff00"/>
<rect x="185" y="131" width="12" height="5" fill="#5bff00"/>
<rect x="197" y="131" width="12" height="5" fill="#70ff00"/>
<rect x="209" y="131" width="13" height="5" fill="#85ff00"/>
<rect x="222" y="131" width="12" height="5" fill="#9aff00"/>
<rect x="234" y="131" width="12" height="5" fill="#afff00"/>
<rect x="246" y="131" width="12" height="5" fill="#c4ff00"/>
<rect x="258" y="131" width="13" height="5" fill="#d9ff00"/>
<rect x="271" y="131" width="12" height="5" fill="#eeff00"/>
<rect x="283" y="131" width="12" height="5" fill="#ffe900"/>
<rect x="295" y="131" width="25" height="5" fill="#ff6800"/>
<rect x="320" y="131" width="12" height="5" fill="#ffe900"/>
<rect x="332" y="131" width="12" height="5" fill="#eeff00"/>
<rect x="344" y="131" width="13" height="5" fill="#d9ff00"/>
<rect x="357" y="131" width="12" height="5" fill="#c4ff00"/>
<rect x="369" y="131" width="12" height="5" fill="#afff00"/>
<rect x="381" y="131" width="12" height="5" fill="#9aff00"/>
<rect x="393" y="131" width="13" height="5" fill="#85ff00"/>
<rect x="406" y="131" width="12" height="5" fill="#70ff00"/>
<rect x="418" y="131" width="12" height="5" fill="#5bff00"/>
<rect x="430" y="131" width="13" height="5" fill="#46ff00"/>
<rect x="443" y="131" width="12" height="5" fill="#31ff00"/>
<rect x="455" y="131" width="12" height="5" fill="#1cff00"/>
<rect x="467" y="131" width="12" height="5" fill="#07ff00"/>
<rect x="479" y="131" width="13" height="5" fill="#00e718"/>
<rect x="492" y="131" width="12" height="5" fill="#00c23d"/>
<rect x="504" y="131" width="12" height="5" fill="#009e61"/>
<rect x="516" y="131" width="12" height="5" fill="#007986"/>
<rect x="528" y="131" width="13" height="5" fill="#0054ab"/>
<rect x="541" y="131" width="12" height="5" fill="#002fd0"/>
<rect x="553" y="131" width="12" height="5" fill="#000af5"/>
<rect x="565" y="131" width="13" height="5" fill="#0012ff"/>
<rect x="578" y="131" width="12" height="5" fill="#002aff"/>
<rect x="590" y="131" width="12" height="5" fill="#0043ff"/>
<rect x="602" y="131" width="13" height="5" fill="#005bff"/>
<rect x="0" y="136" width="13" height="5" fill="#005cff"/>
<rect x="13" y="136" width="12" height="5" fill="#0044ff"/>
<rect x="25" y="136" width="12" height="5" fill="#002bff"/>
<rect x="37" y="136" width="13" height="5" fill="#0013ff"/>
<rect x="50" y="136" width="12" height="5" fill="#0009f6"/>
<rect x="62" y="136" width="12" height="5" fill="#002dd2"/>
<rect x="74" y="136" width="13" height="5" fill="#0052ad"/>
<rect x="87" y="136" width="12" height="5" fill="#007788"/>
<rect x="99" y="136" width="12" height="5" fill="#009b64"/>
<rect x="111" y="136" width="12" height="5" fill="#00c03f"/>
<rect x="123" y="136" width="13" height="5" fill="#00e51a"/>
<rect x="136" y="136" width="12" height="5" fill="#06ff00"/>
<rect x="148" y="136" width="12" height="5" fill="#1bff00"/>
<rect x="160" y="136" width="12" height="5" fill="#30ff00"/>
<rect x="172" y="136" width="13" height="5" fill="#44ff00"/>
<rect x="185" y="136" width="12" height="5" fill="#59ff00"/>
<rect x="197" y="136" width="12" height="5" fill="#6eff00"/>
<rect x="209" y="136" width="13" height="5" fill="#83ff00"/>
<rect x="222" y="136" width="12" height="5" fill="#97ff00"/>
<rect x="234" y="136" width="12" height="5" fill="#acff00"/>
<rect x="246" y="136" width="12" height="5" fill="#c0ff00"/>
<rect x="258" y="136" width="13" height="5" fill="#d3ff00"/>
<rect x="271" y="136" width="12" height="5" fill="#e6ff00"/>
<rect x="283" y="136" width="12" height="5" fill="#f7ff00"/>
<rect x="295" y="136" width="25" height="5" fill="#ffe900"/>
<rect x="320" y="136" width="12" height="5" fill="#f7ff00"/>
<rect x="332" y="136" width="12" height="5" fill="#e6ff00"/>
<rect x="344" y="136" width="13" height="5" fill="#d3ff00"/>
<rect x="357" y="136" width="12" height="5" fill="#c0ff00"/>
<rect x="369" y="136" width="12" height="5" fill="#acff00"/>
<rect x="381" y="136" width="12" height="5" fill="#97ff00"/>
<rect x="393" y="136" width="13" height="5" fill="#83ff00"/>
<rect x="406" y="136" width="12" height="5" fill="#6eff00"/>
<rect x="418" y="136" width="12" height="5" fill="#59ff00"/>
<rect x="430" y="136" width="13" height="5" fill="#44ff00"/>
<rect x="443" y="136" width="12" height="5" fill="#30ff00"/>
<rect x="455" y="136" width="12" height="5" fill="#1bff00"/>
<rect x="467" y="136" width="12" height="5" fill="#06ff00"/>
<rect x="479" y="136" width="13" height="5" fill="#00e51a"/>
<rect x="492" y="136" width="12" height="5" fill="#00c03f"/>
<rect x="504" y="136" width="12" height="5" fill="#009b64"/>
<rect x="516" y="136" width="12" height="5" fill="#007788"/>
<rect x="528" y="136" width="13" height="5" fill="#0052ad"/>
<rect x="541" y="136" width="12" height="5" fill="#002dd2"/>
<rect x="553" y="136" width="12" height="5" fill="#0009f6"/>
<rect x="565" y="136" width="13" height="5" fill="#0013ff"/>
<rect x="578" y="136" width="12" height="5" fill="#002bff"/>
<rect x="590" y="136" width="12" height="5" fill="#0044ff"/>
<rect x="602" y="136" width="13" height="5" fill="#005cff"/>
<rect x="0" y="141" width="13" height="6" fill="#005eff"/>
<rect x="13" y="141" width="12" height="6" fill="#0046ff"/>
<rect x="25" y="141" width="12" height="6" fill="#002dff"/>
<rect x="37" y="141" width="13" height="6" fill="#0015ff"/>
<rect x="50" y="141" width="12" height="6" fill="#0005fa"/>
<rect x="62" y="141" width="12" height="6" fill="#002ad5"/>
<rect x="74" y="141" width="13" height="6" fill="#004eb1"/>
<rect x="87" y="141" width="12" height="6" fill="#00728d"/>
<rect x="99" y="141" width="12" height="6" fill="#009768"/>
<rect x="111" y="141" width="12" height="6" fill="#00bb44"/>
<rect x="123" y="141" width="13" height="6" fill="#00e01f"/>
<rect x="136" y="141" width="12" height="6" fill="#03ff00"/>
<rect x="148" y="141" width="12" height="6" fill="#17ff00"/>
<rect x="160" y="141" width="12" height="6" fill="#2cff00"/>
<rect x="172" y="141" width="13" height="6" fill="#40ff00"/>
<rect x="185" y="141" width="12" height="6" fill="#55ff00"/>
<rect x="197" y="141" width="12" height="6" fill="#69ff00"/>
<rect x="209" y="141" width="13" height="6" fill="#7dff00"/>
<rect x="222" y="141" width="12" height="6" fill="#91ff00"/>
<rect x="234" y="141" width="12" height="6" fill="#a4ff00"/>
<rect x="246" y="141" width="12" height="6" fill="#b7ff00"/>
<rect x="258" y="141" width="13" height="6" fill="#c9ff00"/>
<rect x="271" y="141" width="12" height="6" fill="#d9ff00"/>
<rect x="283" y="141" width="12" height="6" fill="#e6ff00"/>
<rect x="295" y="141" width="25" height="6" fill="#eeff00"/>
<rect x="320" y="141" width="12" height="6" fill="#e6ff00"/>
<rect x="332" y="141" width="12" height="6" fill="#d9ff00"/>
<rect x="344" y="141" width="13" height="6" fill="#c9ff00"/>
<rect x="357" y="141" width="12" height="6" fill="#b7ff00"/>
<rect x="369" y="141" width="12" height="6" fill="#a4ff00"/>
<rect x="381" y="141" width="12" height="6" fill="#91ff00"/>
<rect x="393" y="141" width="13" height="6" fill="#7dff00"/>
<rect x="406" y="141" width="12" height="6" fill="#69ff00"/>
<rect x="418" y="141" width="12" height="6" fill="#55ff00"/>
<rect x="430" y="141" width="13" height="6" fill="#40ff00"/>
<rect x="443" y="141" width="12" height="6" fill="#2cff00"/>
<rect x="455" y="141" width="12" height="6" fill="#17ff00"/>
<rect x="467" y="141" width="12" height="6" fill="#03ff00"/>
<rect x="479" y="141" width="13" height="6" fill="#00e01f"/>
<rect x="492" y="141" width="12" height="6" fill="#00bb44"/>
<rect x="504" y="141" width="12" height="6" fill="#009768"/>
<rect x="516" y="141" width="12" height="6" fill="#00728d"/>
<rect x="528" y="141" width="13" height="6" fill="#004eb1"/>
<rect x="541" y="141" width="12" height="6" fill="#002ad5"/>
<rect x="553" y="141" width="12" height="6" fill="#0005fa"/>
<rect x="565" y="141" width="13" height="6" fill="#0015ff"/>
<rect x="578" y="141" width="12" height="6" fill="#002dff"/>
<rect x="590" y="141" width="12" height="6" fill="#0046ff"/>
<rect x="602" y="141" width="13" height="6" fill="#005eff"/>
<rect x="0" y="147" width="13" height="5" fill="#0061ff"/>
<rect x="13" y="147" width="12" height="5" fill="#0049ff"/>
<rect x="25" y="147" width="12" height="5" fill="#0031ff"/>
<rect x="37" y="147" width="13" height="5" fill="#0018ff"/>
<rect x="50" y="147" width="12" height="5" fill="#0000ff"/>
<rect x="62" y="147" width="12" height="5" fill="#0024db"/>
<rect x="74" y="147" width="13" height="5" fill="#0048b7"/>
<rect x="87" y="147" width="12" height="5" fill="#006c93"/>
<rect x="99" y="147" width="12" height="5" fill="#00906f"/>
<rect x="111" y="147" width="12" height="5" fill="#00b44b"/>
<rect x="123" y="147" width="13" height="5" fill="#00d827"/>
<rect x="136" y="147" width="12" height="5" fill="#00fc03"/>
<rect x="148" y="147" width="12" height="5" fill="#12ff00"/>
<rect x="160" y="147" width="12" height="5" fill="#27ff00"/>
<rect x="172" y="147" width="13" height="5" fill="#3bff00"/>
<rect x="185" y="147" width="12" height="5" fill="#4fff00"/>
<rect x="197" y="147" width="12" height="5" fill="#62ff00"/>
<rect x="209" y="147" width="13" height="5" fill="#75ff00"/>
<rect x="222" y="147" width="12" height="5" fill="#88ff00"/>
<rect x="234" y="147" width="12" height="5" fill="#9aff00"/>
<rect x="246" y="147" width="12" height="5" fill="#acff00"/>
<rect x="258" y="147" width="13" height="5" fill="#bbff00"/>
<rect x="271" y="147" width="12" height="5" fill="#c9ff00"/>
<rect x="283" y="147" width="12" height="5" fill="#d3ff00"/>
<rect x="295" y="147" width="25" height="5" fill="#d9ff00"/>
<rect x="320" y="147" width="12" height="5" fill="#d3ff00"/>
<rect x="332" y="147" width="12" height="5" fill="#c9ff00"/>
<rect x="344" y="147" width="13" height="5" fill="#bbff00"/>
<rect x="357" y="147" width="12" height="5" fill="#acff00"/>
<rect x="369" y="147" width="12" height="5" fill="#9aff00"/>
<rect x="381" y="147" width="12" height="5" fill="#88ff00"/>
<rect x="393" y="147" width="13" height="5" fill="#75ff00"/>
<rect x="406" y="147" width="12" height="5" fill="#62ff00"/>
<rect x="418" y="147" width="12" height="5" fill="#4fff00"/>
<rect x="430" y="147" width="13" height="5" fill="#3bff00"/>
<rect x="443" y="147" width="12" height="5" fill="#27ff00"/>
<rect x="455" y="147" width="12" height="5" fill="#12ff00"/>
<rect x="467" y="147" width="12" height="5" fill="#00fc03"/>
<rect x="479" y="147" width="13" height="5" fill="#00d827"/>
<rect x="492" y="147" width="12" height="5" fill="#00b44b"/>
<rect x="504" y="147" width="12" height="5" fill="#00906f"/>
<rect x="516" y="147" width="12" height="5" fill="#006c93"/>
<rect x="528" y="147" width="13" height="5" fill="#0048b7"/>
<rect x="541" y="147" width="12" height="5" fill="#0024db"/>
<rect x="553" y="147" width="12" height="5" fill="#0000ff"/>
<rect x="565" y="147" width="13" height="5" fill="#0018ff"/>
<rect x="578" y="147" width="12" height="5" fill="#0031ff"/>
<rect x="590" y="147" width="12" height="5" fill="#0049ff"/>
<rect x="602" y="147" width="13" height="5" fill="#0061ff"/>
<rect x="0" y="152" width="13" height="5" fill="#0065ff"/>
<rect x="13" y="152" width="12" height="5" fill="#004dff"/>
<rect x="25" y="152" width="12" height="5" fill="#0035ff"/>
<rect x="37" y="152" width="13" height="5" fill="#001dff"/>
<rect x="50" y="152" width="12" height="5" fill="#0005ff"/>
<rect x="62" y="152" width="12" height="5" fill="#001de2"/>
<rect x="74" y="152" width="13" height="5" fill="#0040bf"/>
<rect x="87" y="152" width="12" height="5" fill="#00649b"/>
<rect x="99" y="152" width="12" height="5" fill="#008877"/>
<rect x="111" y="152" width="12" height="5" fill="#00ab54"/>
<rect x="123" y="152" width="13" height="5" fill="#00ce31"/>
<rect x="136" y="152" width="12" height="5" fill="#00f10e"/>
<rect x="148" y="152" width="12" height="5" fill="#0cff00"/>
<rect x="160" y="152" width="12" height="5" fill="#20ff00"/>
<rect x="172" y="152" width="13" height="5" fill="#33ff00"/>
<rect x="185" y="152" width="12" height="5" fill="#46ff00"/>
<rect x="197" y="152" width="12" height="5" fill="#59ff00"/>
<rect x="209" y="152" width="13" height="5" fill="#6cff00"/>
<rect x="222" y="152" width="12" height="5" fill="#7dff00"/>
<rect x="234" y="152" width="12" height="5" fill="#8eff00"/>
<rect x="246" y="152" width="12" height="5" fill="#9eff00"/>
<rect x="258" y="152" width="13" height="5" fill="#acff00"/>
<rect x="271" y="152" width="12" height="5" fill="#b7ff00"/>
<rect x="283" y="152" width="12" height="5" fill="#c0ff00"/>
<rect x="295" y="152" width="25" height="5" fill="#c4ff00"/>
<rect x="320" y="152" width="12" height="5" fill="#c0ff00"/>
<rect x="332" y="152" width="12" height="5" fill="#b7ff00"/>
<rect x="344" y="152" width="13" height="5" fill="#acff00"/>
<rect x="357" y="152" width="12" height="5" fill="#9eff00"/>
<rect x="369" y="152" width="12" height="5" fill="#8eff00"/>
<rect x="381" y="152" width="12" height="5" fill="#7dff00"/>
<rect x="393" y="152" width="13" height="5" fill="#6cff00"/>
<rect x="406" y="152" width="12" height="5" fill="#59ff00"/>
<rect x="418" y="152" width="12" height="5" fill="#46ff00"/>
<rect x="430" y="152" width="13" height="5" fill="#33ff00"/>
<rect x="443" y="152" width="12" height="5" fill="#20ff00"/>
<rect x="455" y="152" width="12" height="5" fill="#0cff00"/>
<rect x="467" y="152" width="12" height="5" fill="#00f10e"/>
<rect x="479" y="152" width="13" height="5" fill="#00ce31"/>
<rect x="492" y="152" width="12" height="5" fill="#00ab54"/>
<rect x="504" y="152" width="12" height="5" fill="#008877"/>
<rect x="516" y="152" width="12" height="5" fill="#00649b"/>
<rect x="528" y="152" width="13" height="5" fill="#0040bf"/>
<rect x="541" y="152" width="12" height="5" fill="#001de2"/>
<rect x="553" y="152" width="12" height="5" fill="#0005ff"/>
<rect x="565" y="152" width="13" height="5" fill="#001dff"/>
<rect x="578" y="152" width="12" height="5" fill="#0035ff"/>
<rect x="590" y="152" width="12" height="5" fill="#004dff"/>
<rect x="602" y="152" width="13" height="5" fill="#0065ff"/>
<rect x="0" y="157" width="13" height="5" fill="#006aff"/>
<rect x="13" y="157" width="12" height="5" fill="#0052ff"/>
<rect x="25" y="157" width="12" height="5" fill="#003aff"/>
<rect x="37" y="157" width="13" height="5" fill="#0022ff"/>
<rect x="50" y="157" width="12" height="5" fill="#000bff"/>
<rect x="62" y="157" width="12" height="5" fill="#0013ec"/>
<rect x="74" y="157" width="13" height="5" fill="#0037c8"/>
<rect x="87" y="157" width="12" height="5" fill="#005aa5"/>
<rect x="99" y="157" width="12" height="5" fill="#007d82"/>
<rect x="111" y="157" width="12" height="5" fill="#00a05f"/>
<rect x="123" y="157" width="13" height="5" fill="#00c23d"/>
<rect x="136" y="157" width="12" height="5" fill="#00e51a"/>
<rect x="148" y="157" width="12" height="5" fill="#04ff00"/>
<rect x="160" y="157" width="12" height="5" fill="#17ff00"/>
<rect x="172" y="157" width="13" height="5" fill="#2aff00"/>
<rect x="185" y="157" width="12" height="5" fill="#3dff00"/>
<rect x="197" y="157" width="12" height="5" fill="#4fff00"/>
<rect x="209" y="157" width="13" height="5" fill="#60ff00"/>
<rect x="222" y="157" width="12" height="5" fill="#70ff00"/>
<rect x="234" y="157" width="12" height="5" fill="#80ff00"/>
<rect x="246" y="157" width="12" height="5" fill="#8eff00"/>
<rect x="258" y="157" width="13" height="5" fill="#9aff00"/>
<rect x="271" y="157" width="12" height="5" fill="#a4ff00"/>
<rect x="283" y="157" width="12" height="5" fill="#acff00"/>
<rect x="295" y="157" width="25" height="5" fill="#afff00"/>
<rect x="320" y="157" width="12" height="5" fill="#acff00"/>
<rect x="332" y="157" width="12" height="5" fill="#a4ff00"/>
<rect x="344" y="157" width="13" height="5" fill="#9aff00"/>
<rect x="357" y="157" width="12" height="5" fill="#8eff00"/>
<rect x="369" y="157" width="12" height="5" fill="#80ff00"/>
<rect x="381" y="157" width="12" height="5" fill="#70ff00"/>
<rect x="393" y="157" width="13" height="5" fill="#60ff00"/>
<rect x="406" y="157" width="12" height="5" fill="#4fff00"/>
<rect x="418" y="157" width="12" height="5" fill="#3dff00"/>
<rect x="430" y="157" width="13" height="5" fill="#2aff00"/>
<rect x="443" y="157" width="12" height="5" fill="#17ff00"/>
<rect x="455" y="157" width="12" height="5" fill="#04ff00"/>
<rect x="467" y="157" width="12" height="5" fill="#00e51a"/>
<rect x="479" y="157" width="13" height="5" fill="#00c23d"/>
<rect x="492" y="157" width="12" height="5" fill="#00a05f"/>
<rect x="504" y="157" width="12" height="5" fill="#007d82"/>
<rect x="516" y="157" width="12" height="5" fill="#005aa5"/>
<rect x="528" y="157" width="13" height="5" fill="#0037c8"/>
<rect x="541" y="157" width="12" height="5" fill="#0013ec"/>
<rect x="553" y="157" width="12" height="5" fill="#000bff"/>
<rect x="565" y="157" width="13" height="5" fill="#0022ff"/>
<rect x="578" y="157" width="12" height="5" fill="#003aff"/>
<rect x="590" y="157" width="12" height="5" fill="#0052ff"/>
<rect x="602" y="157" width="13" height="5" fill="#006aff"/>
<rect x="0" y="162" width="13" height="5" fill="#0070ff"/>
<rect x="13" y="162" width="12" height="5" fill="#0058ff"/>
<rect x="25" y="162" width="12" height="5" fill="#0041ff"/>
<rect x="37" y="162" width="13" height="5" fill="#0029ff"/>
<rect x="50" y="162" width="12" height="5" fill="#0012ff"/>
<rect x="62" y="162" width="12" height="5" fill="#0009f6"/>
<rect x="74" y="162" width="13" height="5" fill="#002bd4"/>
<rect x="87" y="162" width="12" height="5" fill="#004eb1"/>
<rect x="99" y="162" width="12" height="5" fill="#00708f"/>
<rect x="111" y="162" width="12" height="5" fill="#00936c"/>
<rect x="123" y="162" width="13" height="5" fill="#00b44b"/>
<rect x="136" y="162" width="12" height="5" fill="#00d629"/>
<rect x="148" y="162" width="12" height="5" fill="#00f708"/>
<rect x="160" y="162" width="12" height="5" fill="#0eff00"/>
<rect x="172" y="162" width="13" height="5" fill="#20ff00"/>
<rect x="185" y="162" width="12" height="5" fill="#31ff00"/>
<rect x="197" y="162" width="12" height="5" fill="#42ff00"/>
<rect x="209" y="162" width="13" height="5" fill="#53ff00"/>
<rect x="222" y="162" width="12" height="5" fill="#62ff00"/>
<rect x="234" y="162" width="12" height="5" fill="#70ff00"/>
<rect x="246" y="162" width="12" height="5" fill="#7dff00"/>
<rect x="258" y="162" width="13" height="5" fill="#88ff00"/>
<rect x="271" y="162" width="12" height="5" fill="#91ff00"/>
<rect x="283" y="162" width="12" height="5" fill="#97ff00"/>
<rect x="295" y="162" width="25" height="5" fill="#9aff00"/>
<rect x="320" y="162" width="12" height="5" fill="#97ff00"/>
<rect x="332" y="162" width="12" height="5" fill="#91ff00"/>
<rect x="344" y="162" width="13" height="5" fill="#88ff00"/>
<rect x="357" y="162" width="12" height="5" fill="#7dff00"/>
<rect x="369" y="162" width="12" height="5" fill="#70ff00"/>
<rect x="381" y="162" width="12" height="5" fill="#62ff00"/>
<rect x="393" y="162" width="13" height="5" fill="#53ff00"/>
<rect x="406" y="162" width="12" height="5" fill="#42ff00"/>
<rect x="418" y="162" width="12" height="5" fill="#31ff00"/>
<rect x="430" y="162" width="13" height="5" fill="#20ff00"/>
<rect x="443" y="162" width="12" height="5" fill="#0eff00"/>
<rect x="455" y="162" width="12" height="5" fill="#00f708"/>
<rect x="467" y="162" width="12" height="5" fill="#00d629"/>
<rect x="479" y="162" width="13" height="5" fill="#00b44b"/>
<rect x="492" y="162" width="12" height="5" fill="#00936c"/>
<rect x="504" y="162" width="12" height="5" fill="#00708f"/>
<rect x="516" y="162" width="12" height="5" fill="#004eb1"/>
<rect x="528" y="162" width="13" height="5" fill="#002bd4"/>
<rect x="541" y="162" width="12" height="5" fill="#0009f6"/>
<rect x="553" y="162" width="12" height="5" fill="#0012ff"/>
<rect x="565" y="162" width="13" height="5" fill="#0029ff"/>
<rect x="578" y="162" width="12" height="5" fill="#0041ff"/>
<rect x="590" y="162" width="12" height="5" fill="#0058ff"/>
<rect x="602" y="162" width="13" height="5" fill="#0070ff"/>
<rect x="0" y="167" width="13" height="6" fill="#0077ff"/>
<rect x="13" y="167" width="12" height="6" fill="#005fff"/>
<rect x="25" y="167" width="12" height="6" fill="#0048ff"/>
<rect x="37" y="167" width="13" height="6" fill="#0031ff"/>
<rect x="50" y="167" width="12" height="6" fill="#001aff"/>
<rect x="62" y="167" width="12" height="6" fill="#0003ff"/>
<rect x="74" y="167" width="13" height="6" fill="#001ee1"/>
<rect x="87" y="167" width="12" height="6" fill="#0040bf"/>
<rect x="99" y="167" width="12" height="6" fill="#00629d"/>
<rect x="111" y="167" width="12" height="6" fill="#00837c"/>
<rect x="123" y="167" width="13" height="6" fill="#00a45b"/>
<rect x="136" y="167" width="12" height="6" fill="#00c53a"/>
<rect x="148" y="167" width="12" height="6" fill="#00e51a"/>
<rect x="160" y="167" width="12" height="6" fill="#03ff00"/>
<rect x="172" y="167" width="13" height="6" fill="#14ff00"/>
<rect x="185" y="167" width="12" height="6" fill="#25ff00"/>
<rect x="197" y="167" width="12" height="6" fill="#35ff00"/>
<rect x="209" y="167" width="13" height="6" fill="#44ff00"/>
<rect x="222" y="167" width="12" height="6" fill="#53ff00"/>
<rect x="234" y="167" width="12" height="6" fill="#60ff00"/>
<rect x="246" y="167" width="12" height="6" fill="#6cff00"/>
<rect x="258" y="167" width="13" height="6" fill="#75ff00"/>
<rect x="271" y="167" width="12" height="6" fill="#7dff00"/>
<rect x="283" y="167" width="12" height="6" fill="#83ff00"/>
<rect x="295" y="167" width="25" height="6" fill="#85ff00"/>
<rect x="320" y="167" width="12" height="6" fill="#83ff00"/>
<rect x="332" y="167" width="12" height="6" fill="#7dff00"/>
<rect x="344" y="167" width="13" height="6" fill="#75ff00"/>
<rect x="357" y="167" width="12" height="6" fill="#6cff00"/>
<rect x="369" y="167" width="12" height="6" fill="#60ff00"/>
<rect x="381" y="167" width="12" height="6" fill="#53ff00"/>
<rect x="393" y="167" width="13" height="6" fill="#44ff00"/>
<rect x="406" y="167" width="12" height="6" fill="#35ff00"/>
<rect x="418" y="167" width="12" height="6" fill="#25ff00"/>
<rect x="430" y="167" width="13" height="6" fill="#14ff00"/>
<rect x="443" y="167" width="12" height="6" fill="#03ff00"/>
<rect x="455" y="167" width="12" height="6" fill="#00e51a"/>
<rect x="467" y="167" width="12" height="6" fill="#00c53a"/>
<rect x="479" y="167" width="13" height="6" fill="#00a45b"/>
<rect x="492" y="167" width="12" height="6" fill="#00837c"/>
<rect x="504" y="167" width="12" height="6" fill="#00629d"/>
<rect x="516" y="167" width="12" height="6" fill="#0040bf"/>
<rect x="528" y="167" width="13" height="6" fill="#001ee1"/>
<rect x="541" y="167" width="12" height="6" fill="#0003ff"/>
<rect x="553" y="167" width="12" height="6" fill="#001aff"/>
<rect x="565" y="167" width="13" height="6" fill="#0031ff"/>
<rect x="578" y="167" width="12" height="6" fill="#0048ff"/>
<rect x="590" y="167" width="12" height="6" fill="#005fff"/>
<rect x="602" y="167" width="13" height="6" fill="#0077ff"/>
<rect x="0" y="173" width="13" height="5" fill="#007eff"/>
<rect x="13" y="173" width="12" height="5" fill="#0067ff"/>
<rect x="25" y="173" width="12" height="5" fill="#0050ff"/>
<rect x="37" y="173" width="13" height="5" fill="#0039ff"/>
<rect x="50" y="173" width="12" height="5" fill="#0022ff"/>
<rect x="62" y="173" width="12" height="5" fill="#000cff"/>
<rect x="74" y="173" width="13" height="5" fill="#0010ef"/>
<rect x="87" y="173" width="12" height="5" fill="#0031ce"/>
<rect x="99" y="173" width="12" height="5" fill="#0052ad"/>
<rect x="111" y="173" width="12" height="5" fill="#00728d"/>
<rect x="123" y="173" width="13" height="5" fill="#00936c"/>
<rect x="136" y="173" width="12" height="5" fill="#00b24d"/>
<rect x="148" y="173" width="12" height="5" fill="#00d12e"/>
<rect x="160" y="173" width="12" height="5" fill="#00ef10"/>
<rect x="172" y="173" width="13" height="5" fill="#07ff00"/>
<rect x="185" y="173" width="12" height="5" fill="#17ff00"/>
<rect x="197" y="173" width="12" height="5" fill="#27ff00"/>
<rect x="209" y="173" width="13" height="5" fill="#35ff00"/>
<rect x="222" y="173" width="12" height="5" fill="#42ff00"/>
<rect x="234" y="173" width="12" height="5" fill="#4fff00"/>
<rect x="246" y="173" width="12" height="5" fill="#59ff00"/>
<rect x="258" y="173" width="13" height="5" fill="#62ff00"/>
<rect x="271" y="173" width="12" height="5" fill="#69ff00"/>
<rect x="283" y="173" width="12" height="5" fill="#6eff00"/>
<rect x="295" y="173" width="25" height="5" fill="#70ff00"/>
<rect x="320" y="173" width="12" height="5" fill="#6eff00"/>
<rect x="332" y="173" width="12" height="5" fill="#69ff00"/>
<rect x="344" y="173" width="13" height="5" fill="#62ff00"/>
<rect x="357" y="173" width="12" height="5" fill="#59ff00"/>
<rect x="369" y="173" width="12" height="5" fill="#4fff00"/>
<rect x="381" y="173" width="12" height="5" fill="#42ff00"/>
<rect x="393" y="173" width="13" height="5" fill="#35ff00"/>
<rect x="406" y="173" width="12" height="5" fill="#27ff00"/>
<rect x="418" y="173" width="12" height="5" fill="#17ff00"/>
<rect x="430" y="173" width="13" height="5" fill="#07ff00"/>
<rect x="443" y="173" width="12" height="5" fill="#00ef10"/>
<rect x="455" y="173" width="12" height="5" fill="#00d12e"/>
<rect x="467" y="173" width="12" height="5" fill="#00b24d"/>
<rect x="479" y="173" width="13" height="5" fill="#00936c"/>
<rect x="492" y="173" width="12" height="5" fill="#00728d"/>
<rect x="504" y="173" width="12" height="5" fill="#0052ad"/>
<rect x="516" y="173" width="12" height="5" fill="#0031ce"/>
<rect x="528" y="173" width="13" height="5" fill="#0010ef"/>
<rect x="541" y="173" width="12" height="5" fill="#000cff"/>
<rect x="553" y="173" width="12" height="5" fill="#0022ff"/>
<rect x="565" y="173" width="13" height="5" fill="#0039ff"/>
<rect x="578" y="173" width="12" height="5" fill="#0050ff"/>
<rect x="590" y="173" width="12" height="5" fill="#0067ff"/>
<rect x="602" y="173" width="13" height="5" fill="#007eff"/>
<rect x="0" y="178" width="13" height="5" fill="#0087ff"/>
<rect x="13" y="178" width="12" height="5" fill="#0070ff"/>
<rect x="25" y="178" width="12" height="5" fill="#0059ff"/>
<rect x="37" y="178" width="13" height="5" fill="#0043ff"/>
<rect x="50" y="178" width="12" height="5" fill="#002cff"/>
<rect x="62" y="178" width="12" height="5" fill="#0016ff"/>
<rect x="74" y="178" width="13" height="5" fill="#0000ff"/>
<rect x="87" y="178" width="12" height="5" fill="#0020df"/>
<rect x="99" y="178" width="12" height="5" fill="#0040bf"/>
<rect x="111" y="178" width="12" height="5" fill="#00609f"/>
<rect x="123" y="178" width="13" height="5" fill="#007f80"/>
<rect x="136" y="178" width="12" height="5" fill="#009e61"/>
<rect x="148" y="178" width="12" height="5" fill="#00bb44"/>
<rect x="160" y="178" width="12" height="5" fill="#00d827"/>
<rect x="172" y="178" width="13" height="5" fill="#00f40b"/>
<rect x="185" y="178" width="12" height="5" fill="#09ff00"/>
<rect x="197" y="178" width="12" height="5" fill="#17ff00"/>
<rect x="209" y="178" width="13" height="5" fill="#25ff00"/>
<rect x="222" y="178" width="12" height="5" fill="#31ff00"/>
<rect x="234" y="178" width="12" height="5" fill="#3dff00"/>
<rect x="246" y="178" width="12" height="5" fill="#46ff00"/>
<rect x="258" y="178" width="13" height="5" fill="#4fff00"/>
<rect x="271" y="178" width="12" height="5" fill="#55ff00"/>
<rect x="283" y="178" width="12" height="5" fill="#59ff00"/>
<rect x="295" y="178" width="25" height="5" fill="#5bff00"/>
<rect x="320" y="178" width="12" height="5" fill="#59ff00"/>
<rect x="332" y="178" width="12" height="5" fill="#55ff00"/>
<rect x="344" y="178" width="13" height="5" fill="#4fff00"/>
<rect x="357" y="178" width="12" height="5" fill="#46ff00"/>
<rect x="369" y="178" width="12" height="5" fill="#3dff00"/>
<rect x="381" y="178" width="12" height="5" fill="#31ff00"/>
<rect x="393" y="178" width="13" height="5" fill="#25ff00"/>
<rect x="406" y="178" width="12" height="5" fill="#17ff00"/>
<rect x="418" y="178" width="12" height="5" fill="#09ff00"/>
<rect x="430" y="178" width="13" height="5" fill="#00f40b"/>
<rect x="443" y="178" width="12" height="5" fill="#00d827"/>
<rect x="455" y="178" width="12" height="5" fill="#00bb44"/>
<rect x="467" y="178" width="12" height="5" fill="#009e61"/>
<rect x="479" y="178" width="13" height="5" fill="#007f80"/>
<rect x="492" y="178" width="12" height="5" fill="#00609f"/>
<rect x="504" y="178" width="12" height="5" fill="#0040bf"/>
<rect x="516" y="178" width="12" height="5" fill="#0020df"/>
<rect x="528" y="178" width="13" height="5" fill="#0000ff"/>
<rect x="541" y="178" width="12" height="5" fill="#0016ff"/>
<rect x="553" y="178" width="12" height="5" fill="#002cff"/>
<rect x="565" y="178" width="13" height="5" fill="#0043ff"/>
<rect x="578" y="178" width="12" height="5" fill="#0059ff"/>
<rect x="590" y="178" width="12" height="5" fill="#0070ff"/>
<rect x="602" y="178" width="13" height="5" fill="#0087ff"/>
<rect x="0" y="183" width="13" height="5" fill="#0090ff"/>
<rect x="13" y="183" width="12" height="5" fill="#0079ff"/>
<rect x="25" y="183" width="12" height="5" fill="#0063ff"/>
<rect x="37" y="183" width="13" height="5" fill="#004dff"/>
<rect x="50" y="183" width="12" height="5" fill="#0037ff"/>
<rect x="62" y="183" width="12" height="5" fill="#0021ff"/>
<rect x="74" y="183" width="13" height="5" fill="#000cff"/>
<rect x="87" y="183" width="12" height="5" fill="#000ef1"/>
<rect x="99" y="183" width="12" height="5" fill="#002dd2"/>
<rect x="111" y="183" width="12" height="5" fill="#004cb3"/>
<rect x="123" y="183" width="13" height="5" fill="#006a95"/>
<rect x="136" y="183" width="12" height="5" fill="#008877"/>
<rect x="148" y="183" width="12" height="5" fill="#00a45b"/>
<rect x="160" y="183" width="12" height="5" fill="#00c03f"/>
<rect x="172" y="183" width="13" height="5" fill="#00db24"/>
<rect x="185" y="183" width="12" height="5" fill="#00f40b"/>
<rect x="197" y="183" width="12" height="5" fill="#07ff00"/>
<rect x="209" y="183" width="13" height="5" fill="#14ff00"/>
<rect x="222" y="183" width="12" height="5" fill="#20ff00"/>
<rect x="234" y="183" width="12" height="5" fill="#2aff00"/>
<rect x="246" y="183" width="12" height="5" fill="#33ff00"/>
<rect x="258" y="183" width="13" height="5" fill="#3bff00"/>
<rect x="271" y="183" width="12" height="5" fill="#40ff00"/>
<rect x="283" y="183" width="12" height="5" fill="#44ff00"/>
<rect x="295" y="183" width="25" height="5" fill="#46ff00"/>
<rect x="320" y="183" width="12" height="5" fill="#44ff00"/>
<rect x="332" y="183" width="12" height="5" fill="#40ff00"/>
<rect x="344" y="183" width="13" height="5" fill="#3bff00"/>
<rect x="357" y="183" width="12" height="5" fill="#33ff00"/>
<rect x="369" y="183" width="12" height="5" fill="#2aff00"/>
<rect x="381" y="183" width="12" height="5" fill="#20ff00"/>
<rect x="393" y="183" width="13" height="5" fill="#14ff00"/>
<rect x="406" y="183" width="12" height="5" fill="#07ff00"/>
<rect x="418" y="183" width="12" height="5" fill="#00f40b"/>
<rect x="430" y="183" width="13" height="5" fill="#00db24"/>
<rect x="443" y="183" width="12" height="5" fill="#00c03f"/>
<rect x="455" y="183" width="12" height="5" fill="#00a45b"/>
<rect x="467" y="183" width="12" height="5" fill="#008877"/>
<rect x="479" y="183" width="13" height="5" fill="#006a95"/>
<rect x="492" y="183" width="12" height="5" fill="#004cb3"/>
<rect x="504" y="183" width="12" height="5" fill="#002dd2"/>
<rect x="516" y="183" width="12" height="5" fill="#000ef1"/>
<rect x="528" y="183" width="13" height="5" fill="#000cff"/>
<rect x="541" y="183" width="12" height="5" fill="#0021ff"/>
<rect x="553" y="183" width="12" height="5" fill="#0037ff"/>
<rect x="565" y="183" width="13" height="5" fill="#004dff"/>
<rect x="578" y="183" width="12" height="5" fill="#0063ff"/>
<rect x="590" y="183" width="12" height="5" fill="#0079ff"/>
<rect x="602" y="183" width="13" height="5" fill="#0090ff"/>
<rect x="0" y="188" width="13" height="5" fill="#009aff"/>
<rect x="13" y="188" width="12" height="5" fill="#0084ff"/>
<rect x="25" y="188" width="12" height="5" fill="#006eff"/>
<rect x="37" y="188" width="13" height="5" fill="#0058ff"/>
<rect x="50" y="188" width="12" height="5" fill="#0043ff"/>
<rect x="62" y="188" width="12" height="5" fill="#002dff"/>
<rect x="74" y="188" width="13" height="5" fill="#0018ff"/>
<rect x="87" y="188" width="12" height="5" fill="#0004ff"/>
<rect x="99" y="188" width="12" height="5" fill="#0019e6"/>
<rect x="111" y="188" width="12" height="5" fill="#0037c8"/>
<rect x="123" y="188" width="13" height="5" fill="#0054ab"/>
<rect x="136" y="188" width="12" height="5" fill="#00708f"/>
<rect x="148" y="188" width="12" height="5" fill="#008c73"/>
<rect x="160" y="188" width="12" height="5" fill="#00a758"/>
<rect x="172" y="188" width="13" height="5" fill="#00c03f"/>
<rect x="185" y="188" width="12" height="5" fill="#00d827"/>
<rect x="197" y="188" width="12" height="5" fill="#00ef10"/>
<rect x="209" y="188" width="13" height="5" fill="#03ff00"/>
<rect x="222" y="188" width="12" height="5" fill="#0eff00"/>
<rect x="234" y="188" width="12" height="5" fill="#17ff00"/>
<rect x="246" y="188" width="12" height="5" fill="#20ff00"/>
<rect x="258" y="188" width="13" height="5" fill="#27ff00"/>
<rect x="271" y="188" width="12" height="5" fill="#2cff00"/>
<rect x="283" y="188" width="12" height="5" fill="#30ff00"/>
<rect x="295" y="188" width="25" height="5" fill="#31ff00"/>
<rect x="320" y="188" width="12" height="5" fill="#30ff00"/>
<rect x="332" y="188" width="12" height="5" fill="#2cff00"/>
<rect x="344" y="188" width="13" height="5" fill="#27ff00"/>
<rect x="357" y="188" width="12" height="5" fill="#20ff00"/>
<rect x="369" y="188" width="12" height="5" fill="#17ff00"/>
<rect x="381" y="188" width="12" height="5" fill="#0eff00"/>
<rect x="393" y="188" width="13" height="5" fill="#03ff00"/>
<rect x="406" y="188" width="12" height="5" fill="#00ef10"/>
<rect x="418" y="188" width="12" height="5" fill="#00d827"/>
<rect x="430" y="188" width="13" height="5" fill="#00c03f"/>
<rect x="443" y="188" width="12" height="5" fill="#00a758"/>
<rect x="455" y="188" width="12" height="5" fill="#008c73"/>
<rect x="467" y="188" width="12" height="5" fill="#00708f"/>
<rect x="479" y="188" width="13" height="5" fill="#0054ab"/>
<rect x="492" y="188" width="12" height="5" fill="#0037c8"/>
<rect x="504" y="188" width="12" height="5" fill="#0019e6"/>
<rect x="516" y="188" width="12" height="5" fill="#0004ff"/>
<rect x="528" y="188" width="13" height="5" fill="#0018ff"/>
<rect x="541" y="188" width="12" height="5" fill="#002dff"/>
<rect x="553" y="188" width="12" height="5" fill="#0043ff"/>
<rect x="565" y="188" width="13" height="5" fill="#0058ff"/>
<rect x="578" y="188" width="12" height="5" fill="#006eff"/>
<rect x="590" y="188" width="12" height="5" fill="#0084ff"/>
<rect x="602" y="188" width="13" height="5" fill="#009aff"/>
<rect x="0" y="193" width="13" height="6" fill="#00a5ff"/>
<rect x="13" y="193" width="12" height="6" fill="#008fff"/>
<rect x="25" y="193" width="12" height="6" fill="#0079ff"/>
<rect x="37" y="193" width="13" height="6" fill="#0064ff"/>
<rect x="50" y="193" width="12" height="6" fill="#004fff"/>
<rect x="62" y="193" width="12" height="6" fill="#003aff"/>
<rect x="74" y="193" width="13" height="6" fill="#0026ff"/>
<rect x="87" y="193" width="12" height="6" fill="#0012ff"/>
<rect x="99" y="193" width="12" height="6" fill="#0003fc"/>
<rect x="111" y="193" width="12" height="6" fill="#0020df"/>
<rect x="123" y="193" width="13" height="6" fill="#003dc2"/>
<rect x="136" y="193" width="12" height="6" fill="#0058a7"/>
<rect x="148" y="193" width="12" height="6" fill="#00728d"/>
<rect x="160" y="193" width="12" height="6" fill="#008c73"/>
<rect x="172" y="193" width="13" height="6" fill="#00a45b"/>
<rect x="185" y="193" width="12" height="6" fill="#00bb44"/>
<rect x="197" y="193" width="12" height="6" fill="#00d12e"/>
<rect x="209" y="193" width="13" height="6" fill="#00e51a"/>
<rect x="222" y="193" width="12" height="6" fill="#00f708"/>
<rect x="234" y="193" width="12" height="6" fill="#04ff00"/>
<rect x="246" y="193" width="12" height="6" fill="#0cff00"/>
<rect x="258" y="193" width="13" height="6" fill="#12ff00"/>
<rect x="271" y="193" width="12" height="6" fill="#17ff00"/>
<rect x="283" y="193" width="12" height="6" fill="#1bff00"/>
<rect x="295" y="193" width="25" height="6" fill="#1cff00"/>
<rect x="320" y="193" width="12" height="6" fill="#1bff00"/>
<rect x="332" y="193" width="12" height="6" fill="#17ff00"/>
<rect x="344" y="193" width="13" height="6" fill="#12ff00"/>
<rect x="357" y="193" width="12" height="6" fill="#0cff00"/>
<rect x="369" y="193" width="12" height="6" fill="#04ff00"/>
<rect x="381" y="193" width="12" height="6" fill="#00f708"/>
<rect x="393" y="193" width="13" height="6" fill="#00e51a"/>
<rect x="406" y="193" width="12" height="6" fill="#00d12e"/>
<rect x="418" y="193" width="12" height="6" fill="#00bb44"/>
<rect x="430" y="193" width="13" height="6" fill="#00a45b"/>
<rect x="443" y="193" width="12" height="6" fill="#008c73"/>
<rect x="455" y="193" width="12" height="6" fill="#00728d"/>
<rect x="467" y="193" width="12" height="6" fill="#0058a7"/>
<rect x="479" y="193" width="13" height="6" fill="#003dc2"/>
<rect x="492" y="193" width="12" height="6" fill="#0020df"/>
<rect x="504" y="193" width="12" height="6" fill="#0003fc"/>
<rect x="516" y="193" width="12" height="6" fill="#0012ff"/>
<rect x="528" y="193" width="13" height="6" fill="#0026ff"/>
<rect x="541" y="193" width="12" height="6" fill="#003aff"/>
<rect x="553" y="193" width="12" height="6" fill="#004fff"/>
<rect x="565" y="193" width="13" height="6" fill="#0064ff"/>
<rect x="578" y="193" width="12" height="6" fill="#0079ff"/>
<rect x="590" y="193" width="12" height="6" fill="#008fff"/>
<rect x="602" y="193" width="13" height="6" fill="#00a5ff"/>
<rect x="0" y="199" width="13" height="5" fill="#00b0ff"/>
<rect x="13" y="199" width="12" height="5" fill="#009bff"/>
<rect x="25" y="199" width="12" height="5" fill="#0086ff"/>
<rect x="37" y="199" width="13" height="5" fill="#0071ff"/>
<rect x="50" y="199" width="12" height="5" fill="#005cff"/>
<rect x="62" y="199" width="12" height="5" fill="#0048ff"/>
<rect x="74" y="199" width="13" height="5" fill="#0034ff"/>
<rect x="87" y="199" width="12" height="5" fill="#0020ff"/>
<rect x="99" y="199" width="12" height="5" fill="#000dff"/>
<rect x="111" y="199" width="12" height="5" fill="#0009f6"/>
<rect x="123" y="199" width="13" height="5" fill="#0024db"/>
<rect x="136" y="199" width="12" height="5" fill="#003ec1"/>
<rect x="148" y="199" width="12" height="5" fill="#0058a7"/>
<rect x="160" y="199" width="12" height="5" fill="#00708f"/>
<rect x="172" y="199" width="13" height="5" fill="#008877"/>
<rect x="185" y="199" width="12" height="5" fill="#009e61"/>
<rect x="197" y="199" width="12" height="5" fill="#00b24d"/>
<rect x="209" y="199" width="13" height="5" fill="#00c53a"/>
<rect x="222" y="199" width="12" height="5" fill="#00d629"/>
<rect x="234" y="199" width="12" height="5" fill="#00e51a"/>
<rect x="246" y="199" width="12" height="5" fill="#00f10e"/>
<rect x="258" y="199" width="13" height="5" fill="#00fc03"/>
<rect x="271" y="199" width="12" height="5" fill="#03ff00"/>
<rect x="283" y="199" width="12" height="5" fill="#06ff00"/>
<rect x="295" y="199" width="25" height="5" fill="#07ff00"/>
<rect x="320" y="199" width="12" height="5" fill="#06ff00"/>
<rect x="332" y="199" width="12" height="5" fill="#03ff00"/>
<rect x="344" y="199" width="13" height="5" fill="#00fc03"/>
<rect x="357" y="199" width="12" height="5" fill="#00f10e"/>
<rect x="369" y="199" width="12" height="5" fill="#00e51a"/>
<rect x="381" y="199" width="12" height="5" fill="#00d629"/>
<rect x="393" y="199" width="13" height="5" fill="#00c53a"/>
<rect x="406" y="199" width="12" height="5" fill="#00b24d"/>
<rect x="418" y="199" width="12" height="5" fill="#009e61"/>
<rect x="430" y="199" width="13" height="5" fill="#008877"/>
<rect x="443" y="199" width="12" height="5" fill="#00708f"/>
<rect x="455" y="199" width="12" height="5" fill="#0058a7"/>
<rect x="467" y="199" width="12" height="5" fill="#003ec1"/>
<rect x="479" y="199" width="13" height="5" fill="#0024db"/>
<rect x="492" y="199" width="12" height="5" fill="#0009f6"/>
<rect x="504" y="199" width="12" height="5" fill="#000dff"/>
<rect x="516" y="199" width="12" height="5" fill="#0020ff"/>
<rect x="528" y="199" width="13" height="5" fill="#0034ff"/>
<rect x="541" y="199" width="12" height="5" fill="#0048ff"/>
<rect x="553" y="199" width="12" height="5" fill="#005cff"/>
<rect x="565" y="199" width="13" height="5" fill="#0071ff"/>
<rect x="578" y="199" width="12" height="5" fill="#0086ff"/>
<rect x="590" y="199" width="12" height="5" fill="#009bff"/>
<rect x="602" y="199" width="13" height="5" fill="#00b0ff"/>
<rect x="0" y="204" width="13" height="5" fill="#00bcff"/>
<rect x="13" y="204" width="12" height="5" fill="#00a7ff"/>
<rect x="25" y="204" width="12" height="5" fill="#0093ff"/>
<rect x="37" y="204" width="13" height="5" fill="#007eff"/>
<rect x="50" y="204" width="12" height="5" fill="#006aff"/>
<rect x="62" y="204" width="12" height="5" fill="#0056ff"/>
<rect x="74" y="204" width="13" height="5" fill="#0043ff"/>
<rect x="87" y="204" width="12" height="5" fill="#0030ff"/>
<rect x="99" y="204" width="12" height="5" fill="#001dff"/>
<rect x="111" y="204" width="12" height="5" fill="#000bff"/>
<rect x="123" y="204" width="13" height="5" fill="#000af5"/>
<rect x="136" y="204" width="12" height="5" fill="#0024db"/>
<rect x="148" y="204" width="12" height="5" fill="#003dc2"/>
<rect x="160" y="204" width="12" height="5" fill="#0054ab"/>
<rect x="172" y="204" width="13" height="5" fill="#006a95"/>
<rect x="185" y="204" width="12" height="5" fill="#007f80"/>
<rect x="197" y="204" width="12" height="5" fill="#00936c"/>
<rect x="209" y="204" width="13" height="5" fill="#00a45b"/>
<rect x="222" y="204" width="12" height="5" fill="#00b44b"/>
<rect x="234" y="204" width="12" height="5" fill="#00c23d"/>
<rect x="246" y="204" width="12" height="5" fill="#00ce31"/>
<rect x="258" y="204" width="13" height="5" fill="#00d827"/>
<rect x="271" y="204" width="12" height="5" fill="#00e01f"/>
<rect x="283" y="204" width="12" height="5" fill="#00e51a"/>
<rect x="295" y="204" width="25" height="5" fill="#00e718"/>
<rect x="320" y="204" width="12" height="5" fill="#00e51a"/>
<rect x="332" y="204" width="12" height="5" fill="#00e01f"/>
<rect x="344" y="204" width="13" height="5" fill="#00d827"/>
<rect x="357" y="204" width="12" height="5" fill="#00ce31"/>
<rect x="369" y="204" width="12" height="5" fill="#00c23d"/>
<rect x="381" y="204" width="12" height="5" fill="#00b44b"/>
<rect x="393" y="204" width="13" height="5" fill="#00a45b"/>
<rect x="406" y="204" width="12" height="5" fill="#00936c"/>
<rect x="418" y="204" width="12" height="5" fill="#007f80"/>
<rect x="430" y="204" width="13" height="5" fill="#006a95"/>
<rect x="443" y="204" width="12" height="5" fill="#0054ab"/>
<rect x="455" y="204" width="12" height="5" fill="#003dc2"/>
<rect x="467" y="204" width="12" height="5" fill="#0024db"/>
<rect x="479" y="204" width="13" height="5" fill="#000af5"/>
<rect x="492" y="204" width="12" height="5" fill="#000bff"/>
<rect x="504" y="204" width="12" height="5" fill="#001dff"/>
<rect x="516" y="204" width="12" height="5" fill="#0030ff"/>
<rect x="528" y="204" width="13" height="5" fill="#0043ff"/>
<rect x="541" y="204" width="12" height="5" fill="#0056ff"/>
<rect x="553" y="204" width="12" height="5" fill="#006aff"/>
<rect x="565" y="204" width="13" height="5" fill="#007eff"/>
<rect x="578" y="204" width="12" height="5" fill="#0093ff"/>
<rect x="590" y="204" width="12" height="5" fill="#00a7ff"/>
<rect x="602" y="204" width="13" height="5" fill="#00bcff"/>
<rect x="0" y="209" width="13" height="5" fill="#00c9ff"/>
<rect x="13" y="209" width="12" height="5" fill="#00b5ff"/>
<rect x="25" y="209" width="12" height="5" fill="#00a0ff"/>
<rect x="37" y="209" width="13" height="5" fill="#008cff"/>
<rect x="50" y="209" width="12" height="5" fill="#0078ff"/>
<rect x="62" y="209" width="12" height="5" fill="#0065ff"/>
<rect x="74" y="209" width="13" height="5" fill="#0052ff"/>
<rect x="87" y="209" width="12" height="5" fill="#003fff"/>
<rect x="99" y="209" width="12" height="5" fill="#002dff"/>
<rect x="111" y="209" width="12" height="5" fill="#001cff"/>
<rect x="123" y="209" width="13" height="5" fill="#000bff"/>
<rect x="136" y="209" width="12" height="5" fill="#0009f6"/>
<rect x="148" y="209" width="12" height="5" fill="#0020df"/>
<rect x="160" y="209" width="12" height="5" fill="#0037c8"/>
<rect x="172" y="209" width="13" height="5" fill="#004cb3"/>
<rect x="185" y="209" width="12" height="5" fill="#00609f"/>
<rect x="197" y="209" width="12" height="5" fill="#00728d"/>
<rect x="209" y="209" width="13" height="5" fill="#00837c"/>
<rect x="222" y="209" width="12" height="5" fill="#00936c"/>
<rect x="234" y="209" width="12" height="5" fill="#00a05f"/>
<rect x="246" y="209" width="12" height="5" fill="#00ab54"/>
<rect x="258" y="209" width="13" height="5" fill="#00b44b"/>
<rect x="271" y="209" width="12" height="5" fill="#00bb44"/>
<rect x="283" y="209" width="12" height="5" fill="#00c03f"/>
<rect x="295" y="209" width="25" height="5" fill="#00c23d"/>
<rect x="320" y="209" width="12" height="5" fill="#00c03f"/>
<rect x="332" y="209" width="12" height="5" fill="#00bb44"/>
<rect x="344" y="209" width="13" height="5" fill="#00b44b"/>
<rect x="357" y="209" width="12" height="5" fill="#00ab54"/>
<rect x="369" y="209" width="12" height="5" fill="#00a05f"/>
<rect x="381" y="209" width="12" height="5" fill="#00936c"/>
<rect x="393" y="209" width="13" height="5" fill="#00837c"/>
<rect x="406" y="209" width="12" height="5" fill="#00728d"/>
<rect x="418" y="209" width="12" height="5" fill="#00609f"/>
<rect x="430" y="209" width="13" height="5" fill="#004cb3"/>
<rect x="443" y="209" width="12" height="5" fill="#0037c8"/>
<rect x="455" y="209" width="12" height="5" fill="#0020df"/>
<rect x="467" y="209" width="12" height="5" fill="#0009f6"/>
<rect x="479" y="209" width="13" height="5" fill="#000bff"/>
<rect x="492" y="209" width="12" height="5" fill="#001cff"/>
<rect x="504" y="209" width="12" height="5" fill="#002dff"/>
<rect x="516" y="209" width="12" height="5" fill="#003fff"/>
<rect x="528" y="209" width="13" height="5" fill="#0052ff"/>
<rect x="541" y="209" width="12" height="5" fill="#0065ff"/>
<rect x="553" y="209" width="12" height="5" fill="#0078ff"/>
<rect x="565" y="209" width="13" height="5" fill="#008cff"/>
<rect x="578" y="209" width="12" height="5" fill="#00a0ff"/>
<rect x="590" y="209" width="12" height="5" fill="#00b5ff"/>
<rect x="602" y="209" width="13" height="5" fill="#00c9ff"/>
<rect x="0" y="214" width="13" height="6" fill="#00d7ff"/>
<rect x="13" y="214" width="12" height="6" fill="#00c2ff"/>
<rect x="25" y="214" width="12" height="6" fill="#00aeff"/>
<rect x="37" y="214" width="13" height="6" fill="#009bff"/>
<rect x="50" y="214" width="12" height="6" fill="#0088ff"/>
<rect x="62" y="214" width="12" height="6" fill="#0075ff"/>
<rect x="74" y="214" width="13" height="6" fill="#0062ff"/>
<rect x="87" y="214" width="12" height="6" fill="#0050ff"/>
<rect x="99" y="214" width="12" height="6" fill="#003eff"/>
<rect x="111" y="214" width="12" height="6" fill="#002dff"/>
<rect x="123" y="214" width="13" height="6" fill="#001dff"/>
<rect x="136" y="214" width="12" height="6" fill="#000dff"/>
<rect x="148" y="214" width="12" height="6" fill="#0003fc"/>
<rect x="160" y="214" width="12" height="6" fill="#0019e6"/>
<rect x="172" y="214" width="13" height="6" fill="#002dd2"/>
<rect x="185" y="214" width="12" height="6" fill="#0040bf"/>
<rect x="197" y="214" width="12" height="6" fill="#0052ad"/>
<rect x="209" y="214" width="13" height="6" fill="#00629d"/>
<rect x="222" y="214" width="12" height="6" fill="#00708f"/>
<rect x="234" y="214" width="12" height="6" fill="#007d82"/>
<rect x="246" y="214" width="12" height="6" fill="#008877"/>
<rect x="258" y="214" width="13" height="6" fill="#00906f"/>
<rect x="271" y="214" width="12" height="6" fill="#009768"/>
<rect x="283" y="214" width="12" height="6" fill="#009b64"/>
<rect x="295" y="214" width="25" height="6" fill="#009e61"/>
<rect x="320" y="214" width="12" height="6" fill="#009b64"/>
<rect x="332" y="214" width="12" height="6" fill="#009768"/>
<rect x="344" y="214" width="13" height="6" fill="#00906f"/>
<rect x="357" y="214" width="12" height="6" fill="#008877"/>
<rect x="369" y="214" width="12" height="6" fill="#007d82"/>
<rect x="381" y="214" width="12" height="6" fill="#00708f"/>
<rect x="393" y="214" width="13" height="6" fill="#00629d"/>
<rect x="406" y="214" width="12" height="6" fill="#0052ad"/>
<rect x="418" y="214" width="12" height="6" fill="#0040bf"/>
<rect x="430" y="214" width="13" height="6" fill="#002dd2"/>
<rect x="443" y="214" width="12" height="6" fill="#0019e6"/>
<rect x="455" y="214" width="12" height="6" fill="#0003fc"/>
<rect x="467" y="214" width="12" height="6" fill="#000dff"/>
<rect x="479" y="214" width="13" height="6" fill="#001dff"/>
<rect x="492" y="214" width="12" height="6" fill="#002dff"/>
<rect x="504" y="214" width="12" height="6" fill="#003eff"/>
<rect x="516" y="214" width="12" height="6" fill="#0050ff"/>
<rect x="528" y="214" width="13" height="6" fill="#0062ff"/>
<rect x="541" y="214" width="12" height="6" fill="#0075ff"/>
<rect x="553" y="214" width="12" height="6" fill="#0088ff"/>
<rect x="565" y="214" width="13" height="6" fill="#009bff"/>
<rect x="578" y="214" width="12" height="6" fill="#00aeff"/>
<rect x="590" y="214" width="12" height="6" fill="#00c2ff"/>
<rect x="602" y="214" width="13" height="6" fill="#00d7ff"/>
<rect x="0" y="220" width="13" height="5" fill="#00e5ff"/>
<rect x="13" y="220" width="12" height="5" fill="#00d1ff"/>
<rect x="25" y="220" width="12" height="5" fill="#00bdff"/>
<rect x="37" y="220" width="13" height="5" fill="#00aaff"/>
<rect x="50" y="220" width="12" height="5" fill="#0097ff"/>
<rect x="62" y="220" width="12" height="5" fill="#0085ff"/>
<rect x="74" y="220" width="13" height="5" fill="#0073ff"/>
<rect x="87" y="220" width="12" height="5" fill="#0061ff"/>
<rect x="99" y="220" width="12" height="5" fill="#0050ff"/>
<rect x="111" y="220" width="12" height="5" fill="#003fff"/>
<rect x="123" y="220" width="13" height="5" fill="#0030ff"/>
<rect x="136" y="220" width="12" height="5" fill="#0020ff"/>
<rect x="148" y="220" width="12" height="5" fill="#0012ff"/>
<rect x="160" y="220" width="12" height="5" fill="#0004ff"/>
<rect x="172" y="220" width="13" height="5" fill="#000ef1"/>
<rect x="185" y="220" width="12" height="5" fill="#0020df"/>
<rect x="197" y="220" width="12" height="5" fill="#0031ce"/>
<rect x="209" y="220" width="13" height="5" fill="#0040bf"/>
<rect x="222" y="220" width="12" height="5" fill="#004eb1"/>
<rect x="234" y="220" width="12" height="5" fill="#005aa5"/>
<rect x="246" y="220" width="12" height="5" fill="#00649b"/>
<rect x="258" y="220" width="13" height="5" fill="#006c93"/>
<rect x="271" y="220" width="12" height="5" fill="#00728d"/>
<rect x="283" y="220" width="12" height="5" fill="#007788"/>
<rect x="295" y="220" width="25" height="5" fill="#007986"/>
<rect x="320" y="220" width="12" height="5" fill="#007788"/>
<rect x="332" y="220" width="12" height="5" fill="#00728d"/>
<rect x="344" y="220" width="13" height="5" fill="#006c93"/>
<rect x="357" y="220" width="12" height="5" fill="#00649b"/>
<rect x="369" y="220" width="12" height="5" fill="#005aa5"/>
<rect x="381" y="220" width="12" height="5" fill="#004eb1"/>
<rect x="393" y="220" width="13" height="5" fill="#0040bf"/>
<rect x="406" y="220" width="12" height="5" fill="#0031ce"/>
<rect x="418" y="220" width="12" height="5" fill="#0020df"/>
<rect x="430" y="220" width="13" height="5" fill="#000ef1"/>
<rect x="443" y="220" width="12" height="5" fill="#0004ff"/>
<rect x="455" y="220" width="12" height="5" fill="#0012ff"/>
<rect x="467" y="220" width="12" height="5" fill="#0020ff"/>
<rect x="479" y="220" width="13" height="5" fill="#0030ff"/>
<rect x="492" y="220" width="12" height="5" fill="#003fff"/>
<rect x="504" y="220" width="12" height="5" fill="#0050ff"/>
<rect x="516" y="220" width="12" height="5" fill="#0061ff"/>
<rect x="528" y="220" width="13" height="5" fill="#0073ff"/>
<rect x="541" y="220" width="12" height="5" fill="#0085ff"/>
<rect x="553" y="220" width="12" height="5" fill="#0097ff"/>
<rect x="565" y="220" width="13" height="5" fill="#00aaff"/>
<rect x="578" y="220" width="12" height="5" fill="#00bdff"/>
<rect x="590" y="220" width="12" height="5" fill="#00d1ff"/>
<rect x="602" y="220" width="13" height="5" fill="#00e5ff"/>
<rect x="0" y="225" width="13" height="5" fill="#00f3ff"/>
<rect x="13" y="225" width="12" height="5" fill="#00e0ff"/>
<rect x="25" y="225" width="12" height="5" fill="#00cdff"/>
<rect x="37" y="225" width="13" height="5" fill="#00baff"/>
<rect x="50" y="225" width="12" height="5" fill="#00a7ff"/>
<rect x="62" y="225" width="12" height="5" fill="#0095ff"/>
<rect x="74" y="225" width="13" height="5" fill="#0084ff"/>
<rect x="87" y="225" width="12" height="5" fill="#0073ff"/>
<rect x="99" y="225" width="12" height="5" fill="#0062ff"/>
<rect x="111" y="225" width="12" height="5" fill="#0052ff"/>
<rect x="123" y="225" width="13" height="5" fill="#0043ff"/>
<rect x="136" y="225" width="12" height="5" fill="#0034ff"/>
<rect x="148" y="225" width="12" height="5" fill="#0026ff"/>
<rect x="160" y="225" width="12" height="5" fill="#0018ff"/>
<rect x="172" y="225" width="13" height="5" fill="#000cff"/>
<rect x="185" y="225" width="12" height="5" fill="#0000ff"/>
<rect x="197" y="225" width="12" height="5" fill="#0010ef"/>
<rect x="209" y="225" width="13" height="5" fill="#001ee1"/>
<rect x="222" y="225" width="12" height="5" fill="#002bd4"/>
<rect x="234" y="225" width="12" height="5" fill="#0037c8"/>
<rect x="246" y="225" width="12" height="5" fill="#0040bf"/>
<rect x="258" y="225" width="13" height="5" fill="#0048b7"/>
<rect x="271" y="225" width="12" height="5" fill="#004eb1"/>
<rect x="283" y="225" width="12" height="5" fill="#0052ad"/>
<rect x="295" y="225" width="25" height="5" fill="#0054ab"/>
<rect x="320" y="225" width="12" height="5" fill="#0052ad"/>
<rect x="332" y="225" width="12" height="5" fill="#004eb1"/>
<rect x="344" y="225" width="13" height="5" fill="#0048b7"/>
<rect x="357" y="225" width="12" height="5" fill="#0040bf"/>
<rect x="369" y="225" width="12" height="5" fill="#0037c8"/>
<rect x="381" y="225" width="12" height="5" fill="#002bd4"/>
<rect x="393" y="225" width="13" height="5" fill="#001ee1"/>
<rect x="406" y="225" width="12" height="5" fill="#0010ef"/>
<rect x="418" y="225" width="12" height="5" fill="#0000ff"/>
<rect x="430" y="225" width="13" height="5" fill="#000cff"/>
<rect x="443" y="225" width="12" height="5" fill="#0018ff"/>
<rect x="455" y="225" width="12" height="5" fill="#0026ff"/>
<rect x="467" y="225" width="12" height="5" fill="#0034ff"/>
<rect x="479" y="225" width="13" height="5" fill="#0043ff"/>
<rect x="492" y="225" width="12" height="5" fill="#0052ff"/>
<rect x="504" y="225" width="12" height="5" fill="#0062ff"/>
<rect x="516" y="225" width="12" height="5" fill="#0073ff"/>
<rect x="528" y="225" width="13" height="5" fill="#0084ff"/>
<rect x="541" y="225" width="12" height="5" fill="#0095ff"/>
<rect x="553" y="225" width="12" height="5" fill="#00a7ff"/>
<rect x="565" y="225" width="13" height="5" fill="#00baff"/>
<rect x="578" y="225" width="12" height="5" fill="#00cdff"/>
<rect x="590" y="225" width="12" height="5" fill="#00e0ff"/>
<rect x="602" y="225" width="13" height="5" fill="#00f3ff"/>
<rect x="0" y="230" width="13" height="5" fill="#00fafa"/>
<rect x="13" y="230" width="12" height="5" fill="#00efff"/>
<rect x="25" y="230" width="12" height="5" fill="#00dcff"/>
<rect x="37" y="230" width="13" height="5" fill="#00caff"/>
<rect x="50" y="230" width="12" height="5" fill="#00b8ff"/>
<rect x="62" y="230" width="12" height="5" fill="#00a7ff"/>
<rect x="74" y="230" width="13" height="5" fill="#0095ff"/>
<rect x="87" y="230" width="12" height="5" fill="#0085ff"/>
<rect x="99" y="230" width="12" height="5" fill="#0075ff"/>
<rect x="111" y="230" width="12" height="5" fill="#0065ff"/>
<rect x="123" y="230" width="13" height="5" fill="#0056ff"/>
<rect x="136" y="230" width="12" height="5" fill="#0048ff"/>
<rect x="148" y="230" width="12" height="5" fill="#003aff"/>
<rect x="160" y="230" width="12" height="5" fill="#002dff"/>
<rect x="172" y="230" width="13" height="5" fill="#0021ff"/>
<rect x="185" y="230" width="12" height="5" fill="#0016ff"/>
<rect x="197" y="230" width="12" height="5" fill="#000cff"/>
<rect x="209" y="230" width="13" height="5" fill="#0003ff"/>
<rect x="222" y="230" width="12" height="5" fill="#0009f6"/>
<rect x="234" y="230" width="12" height="5" fill="#0013ec"/>
<rect x="246" y="230" width="12" height="5" fill="#001de2"/>
<rect x="258" y="230" width="13" height="5" fill="#0024db"/>
<rect x="271" y="230" width="12" height="5" fill="#002ad5"/>
<rect x="283" y="230" width="12" height="5" fill="#002dd2"/>
<rect x="295" y="230" width="25" height="5" fill="#002fd0"/>
<rect x="320" y="230" width="12" height="5" fill="#002dd2"/>
<rect x="332" y="230" width="12" height="5" fill="#002ad5"/>
<rect x="344" y="230" width="13" height="5" fill="#0024db"/>
<rect x="357" y="230" width="12" height="5" fill="#001de2"/>
<rect x="369" y="230" width="12" height="5" fill="#0013ec"/>
<rect x="381" y="230" width="12" height="5" fill="#0009f6"/>
<rect x="393" y="230" width="13" height="5" fill="#0003ff"/>
<rect x="406" y="230" width="12" height="5" fill="#000cff"/>
<rect x="418" y="230" width="12" height="5" fill="#0016ff"/>
<rect x="430" y="230" width="13" height="5" fill="#0021ff"/>
<rect x="443" y="230" width="12" height="5" fill="#002dff"/>
<rect x="455" y="230" width="12" height="5" fill="#003aff"/>
<rect x="467" y="230" width="12" height="5" fill="#0048ff"/>
<rect x="479" y="230" width="13" height="5" fill="#0056ff"/>
<rect x="492" y="230" width="12" height="5" fill="#0065ff"/>
<rect x="504" y="230" width="12" height="5" fill="#0075ff"/>
<rect x="516" y="230" width="12" height="5" fill="#0085ff"/>
<rect x="528" y="230" width="13" height="5" fill="#0095ff"/>
<rect x="541" y="230" width="12" height="5" fill="#00a7ff"/>
<rect x="553" y="230" width="12" height="5" fill="#00b8ff"/>
<rect x="565" y="230" width="13" height="5" fill="#00caff"/>
<rect x="578" y="230" width="12" height="5" fill="#00dcff"/>
<rect x="590" y="230" width="12" height="5" fill="#00efff"/>
<rect x="602" y="230" width="13" height="5" fill="#00fafa"/>
<rect x="0" y="235" width="13" height="5" fill="#00e3e3"/>
<rect x="13" y="235" width="12" height="5" fill="#00ffff"/>
<rect x="25" y="235" width="12" height="5" fill="#00edff"/>
<rect x="37" y="235" width="13" height="5" fill="#00dbff"/>
<rect x="50" y="235" width="12" height="5" fill="#00c9ff"/>
<rect x="62" y="235" width="12" height="5" fill="#00b8ff"/>
<rect x="74" y="235" width="13" height="5" fill="#00a7ff"/>
<rect x="87" y="235" width="12" height="5" fill="#0097ff"/>
<rect x="99" y="235" width="12" height="5" fill="#0088ff"/>
<rect x="111" y="235" width="12" height="5" fill="#0078ff"/>
<rect x="123" y="235" width="13" height="5" fill="#006aff"/>
<rect x="136" y="235" width="12" height="5" fill="#005cff"/>
<rect x="148" y="235" width="12" height="5" fill="#004fff"/>
<rect x="160" y="235" width="12" height="5" fill="#0043ff"/>
<rect x="172" y="235" width="13" height="5" fill="#0037ff"/>
<rect x="185" y="235" width="12" height="5" fill="#002cff"/>
<rect x="197" y="235" width="12" height="5" fill="#0022ff"/>
<rect x="209" y="235" width="13" height="5" fill="#001aff"/>
<rect x="222" y="235" width="12" height="5" fill="#0012ff"/>
<rect x="234" y="235" width="12" height="5" fill="#000bff"/>
<rect x="246" y="235" width="12" height="5" fill="#0005ff"/>
<rect x="258" y="235" width="13" height="5" fill="#0000ff"/>
<rect x="271" y="235" width="12" height="5" fill="#0005fa"/>
<rect x="283" y="235" width="12" height="5" fill="#0009f6"/>
<rect x="295" y="235" width="25" height="5" fill="#000af5"/>
<rect x="320" y="235" width="12" height="5" fill="#0009f6"/>
<rect x="332" y="235" width="12" height="5" fill="#0005fa"/>
<rect x="344" y="235" width="13" height="5" fill="#0000ff"/>
<rect x="357" y="235" width="12" height="5" fill="#0005ff"/>
<rect x="369" y="235" width="12" height="5" fill="#000bff"/>
<rect x="381" y="235" width="12" height="5" fill="#0012ff"/>
<rect x="393" y="235" width="13" height="5" fill="#001aff"/>
<rect x="406" y="235" width="12" height="5" fill="#0022ff"/>
<rect x="418" y="235" width="12" height="5" fill="#002cff"/>
<rect x="430" y="235" width="13" height="5" fill="#0037ff"/>
<rect x="443" y="235" width="12" height="5" fill="#0043ff"/>
<rect x="455" y="235" width="12" height="5" fill="#004fff"/>
<rect x="467" y="235" width="12" height="5" fill="#005cff"/>
<rect x="479" y="235" width="13" height="5" fill="#006aff"/>
<rect x="492" y="235" width="12" height="5" fill="#0078ff"/>
<rect x="504" y="235" width="12" height="5" fill="#0088ff"/>
<rect x="516" y="235" width="12" height="5" fill="#0097ff"/>
<rect x="528" y="235" width="13" height="5" fill="#00a7ff"/>
<rect x="541" y="235" width="12" height="5" fill="#00b8ff"/>
<rect x="553" y="235" width="12" height="5" fill="#00c9ff"/>
<rect x="565" y="235" width="13" height="5" fill="#00dbff"/>
<rect x="578" y="235" width="12" height="5" fill="#00edff"/>
<rect x="590" y="235" width="12" height="5" fill="#00ffff"/>
<rect x="602" y="235" width="13" height="5" fill="#00e3e3"/>
<rect x="0" y="240" width="13" height="6" fill="#00cbcb"/>
<rect x="13" y="240" width="12" height="6" fill="#00e7e7"/>
<rect x="25" y="240" width="12" height="6" fill="#00fdff"/>
<rect x="37" y="240" width="13" height="6" fill="#00ecff"/>
<rect x="50" y="240" width="12" height="6" fill="#00dbff"/>
<rect x="62" y="240" width="12" height="6" fill="#00caff"/>
<rect x="74" y="240" width="13" height="6" fill="#00baff"/>
<rect x="87" y="240" width="12" height="6" fill="#00aaff"/>
<rect x="99" y="240" width="12" height="6" fill="#009bff"/>
<rect x="111" y="240" width="12" height="6" fill="#008cff"/>
<rect x="123" y="240" width="13" height="6" fill="#007eff"/>
<rect x="136" y="240" width="12" height="6" fill="#0071ff"/>
<rect x="148" y="240" width="12" height="6" fill="#0064ff"/>
<rect x="160" y="240" width="12" height="6" fill="#0058ff"/>
<rect x="172" y="240" width="13" height="6" fill="#004dff"/>
<rect x="185" y="240" width="12" height="6" fill="#0043ff"/>
<rect x="197" y="240" width="12" height="6" fill="#0039ff"/>
<rect x="209" y="240" width="13" height="6" fill="#0031ff"/>
<rect x="222" y="240" width="12" height="6" fill="#0029ff"/>
<rect x="234" y="240" width="12" height="6" fill="#0022ff"/>
<rect x="246" y="240" width="12" height="6" fill="#001dff"/>
<rect x="258" y="240" width="13" height="6" fill="#0018ff"/>
<rect x="271" y="240" width="12" height="6" fill="#0015ff"/>
<rect x="283" y="240" width="12" height="6" fill="#0013ff"/>
<rect x="295" y="240" width="25" height="6" fill="#0012ff"/>
<rect x="320" y="240" width="12" height="6" fill="#0013ff"/>
<rect x="332" y="240" width="12" height="6" fill="#0015ff"/>
<rect x="344" y="240" width="13" height="6" fill="#0018ff"/>
<rect x="357" y="240" width="12" height="6" fill="#001dff"/>
<rect x="369" y="240" width="12" height="6" fill="#0022ff"/>
<rect x="381" y="240" width="12" height="6" fill="#0029ff"/>
<rect x="393" y="240" width="13" height="6" fill="#0031ff"/>
<rect x="406" y="240" width="12" height="6" fill="#0039ff"/>
<rect x="418" y="240" width="12" height="6" fill="#0043ff"/>
<rect x="430" y="240" width="13" height="6" fill="#004dff"/>
<rect x="443" y="240" width="12" height="6" fill="#0058ff"/>
<rect x="455" y="240" width="12" height="6" fill="#0064ff"/>
<rect x="467" y="240" width="12" height="6" fill="#0071ff"/>
<rect x="479" y="240" width="13" height="6" fill="#007eff"/>
<rect x="492" y="240" width="12" height="6" fill="#008cff"/>
<rect x="504" y="240" width="12" height="6" fill="#009bff"/>
<rect x="516" y="240" width="12" height="6" fill="#00aaff"/>
<rect x="528" y="240" width="13" height="6" fill="#00baff"/>
<rect x="541" y="240" width="12" height="6" fill="#00caff"/>
<rect x="553" y="240" width="12" height="6" fill="#00dbff"/>
<rect x="565" y="240" width="13" height="6" fill="#00ecff"/>
<rect x="578" y="240" width="12" height="6" fill="#00fdff"/>
<rect x="590" y="240" width="12" height="6" fill="#00e7e7"/>
<rect x="602" y="240" width="13" height="6" fill="#00cbcb"/>
<rect x="0" y="246" width="13" height="5" fill="#00b3b3"/>
<rect x="13" y="246" width="12" height="5" fill="#00cdcd"/>
<rect x="25" y="246" width="12" height="5" fill="#00e8e8"/>
<rect x="37" y="246" width="13" height="5" fill="#00fdff"/>
<rect x="50" y="246" width="12" height="5" fill="#00edff"/>
<rect x="62" y="246" width="12" height="5" fill="#00dcff"/>
<rect x="74" y="246" width="13" height="5" fill="#00cdff"/>
<rect x="87" y="246" width="12" height="5" fill="#00bdff"/>
<rect x="99" y="246" width="12" height="5" fill="#00aeff"/>
<rect x="111" y="246" width="12" height="5" fill="#00a0ff"/>
<rect x="123" y="246" width="13" height="5" fill="#0093ff"/>
<rect x="136" y="246" width="12" height="5" fill="#0086ff"/>
<rect x="148" y="246" width="12" height="5" fill="#0079ff"/>
<rect x="160" y="246" width="12" height="5" fill="#006eff"/>
<rect x="172" y="246" width="13" height="5" fill="#0063ff"/>
<rect x="185" y="246" width="12" height="5" fill="#0059ff"/>
<rect x="197" y="246" width="12" height="5" fill="#0050ff"/>
<rect x="209" y="246" width="13" height="5" fill="#0048ff"/>
<rect x="222" y="246" width="12" height="5" fill="#0041ff"/>
<rect x="234" y="246" width="12" height="5" fill="#003aff"/>
<rect x="246" y="246" width="12" height="5" fill="#0035ff"/>
<rect x="258" y="246" width="13" height="5" fill="#0031ff"/>
<rect x="271" y="246" width="12" height="5" fill="#002dff"/>
<rect x="283" y="246" width="12" height="5" fill="#002bff"/>
<rect x="295" y="246" width="25" height="5" fill="#002aff"/>
<rect x="320" y="246" width="12" height="5" fill="#002bff"/>
<rect x="332" y="246" width="12" height="5" fill="#002dff"/>
<rect x="344" y="246" width="13" height="5" fill="#0031ff"/>
<rect x="357" y="246" width="12" height="5" fill="#0035ff"/>
<rect x="369" y="246" width="12" height="5" fill="#003aff"/>
<rect x="381" y="246" width="12" height="5" fill="#0041ff"/>
<rect x="393" y="246" width="13" height="5" fill="#0048ff"/>
<rect x="406" y="246" width="12" height="5" fill="#0050ff"/>
<rect x="418" y="246" width="12" height="5" fill="#0059ff"/>
<rect x="430" y="246" width="13" height="5" fill="#0063ff"/>
<rect x="443" y="246" width="12" height="5" fill="#006eff"/>
<rect x="455" y="246" width="12" height="5" fill="#0079ff"/>
<rect x="467" y="246" width="12" height="5" fill="#0086ff"/>
<rect x="479" y="246" width="13" height="5" fill="#0093ff"/>
<rect x="492" y="246" width="12" height="5" fill="#00a0ff"/>
<rect x="504" y="246" width="12" height="5" fill="#00aeff"/>
<rect x="516" y="246" width="12" height="5" fill="#00bdff"/>
<rect x="528" y="246" width="13" height="5" fill="#00cdff"/>
<rect x="541" y="246" width="12" height="5" fill="#00dcff"/>
<rect x="553" y="246" width="12" height="5" fill="#00edff"/>
<rect x="565" y="246" width="13" height="5" fill="#00fdff"/>
<rect x="578" y="246" width="12" height="5" fill="#00e8e8"/>
<rect x="590" y="246" width="12" height="5" fill="#00cdcd"/>
<rect x="602" y="246" width="13" height="5" fill="#00b3b3"/>
<rect x="0" y="251" width="13" height="5" fill="#009a9a"/>
<rect x="13" y="251" width="12" height="5" fill="#00b4b4"/>
<rect x="25" y="251" width="12" height="5" fill="#00cdcd"/>
<rect x="37" y="251" width="13" height="5" fill="#00e7e7"/>
<rect x="50" y="251" width="12" height="5" fill="#00ffff"/>
<rect x="62" y="251" width="12" height="5" fill="#00efff"/>
<rect x="74" y="251" width="13" height="5" fill="#00e0ff"/>
<rect x="87" y="251" width="12" height="5" fill="#00d1ff"/>
<rect x="99" y="251" width="12" height="5" fill="#00c2ff"/>
<rect x="111" y="251" width="12" height="5" fill="#00b5ff"/>
<rect x="123" y="251" width="13" height="5" fill="#00a7ff"/>
<rect x="136" y="251" width="12" height="5" fill="#009bff"/>
<rect x="148" y="251" width="12" height="5" fill="#008fff"/>
<rect x="160" y="251" width="12" height="5" fill="#0084ff"/>
<rect x="172" y="251" width="13" height="5" fill="#0079ff"/>
<rect x="185" y="251" width="12" height="5" fill="#0070ff"/>
<rect x="197" y="251" width="12" height="5" fill="#0067ff"/>
<rect x="209" y="251" width="13" height="5" fill="#005fff"/>
<rect x="222" y="251" width="12" height="5" fill="#0058ff"/>
<rect x="234" y="251" width="12" height="5" fill="#0052ff"/>
<rect x="246" y="251" width="12" height="5" fill="#004dff"/>
<rect x="258" y="251" width="13" height="5" fill="#0049ff"/>
<rect x="271" y="251" width="12" height="5" fill="#0046ff"/>
<rect x="283" y="251" width="12" height="5" fill="#0044ff"/>
<rect x="295" y="251" width="25" height="5" fill="#0043ff"/>
<rect x="320" y="251" width="12" height="5" fill="#0044ff"/>
<rect x="332" y="251" width="12" height="5" fill="#0046ff"/>
<rect x="344" y="251" width="13" height="5" fill="#0049ff"/>
<rect x="357" y="251" width="12" height="5" fill="#004dff"/>
<rect x="369" y="251" width="12" height="5" fill="#0052ff"/>
<rect x="381" y="251" width="12" height="5" fill="#0058ff"/>
<rect x="393" y="251" width="13" height="5" fill="#005fff"/>
<rect x="406" y="251" width="12" height="5" fill="#0067ff"/>
<rect x="418" y="251" width="12" height="5" fill="#0070ff"/>
<rect x="430" y="251" width="13" height="5" fill="#0079ff"/>
<rect x="443" y="251" width="12" height="5" fill="#0084ff"/>
<rect x="455" y="251" width="12" height="5" fill="#008fff"/>
<rect x="467" y="251" width="12" height="5" fill="#009bff"/>
<rect x="479" y="251" width="13" height="5" fill="#00a7ff"/>
<rect x="492" y="251" width="12" height="5" fill="#00b5ff"/>
<rect x="504" y="251" width="12" height="5" fill="#00c2ff"/>
<rect x="516" y="251" width="12" height="5" fill="#00d1ff"/>
<rect x="528" y="251" width="13" height="5" fill="#00e0ff"/>
<rect x="541" y="251" width="12" height="5" fill="#00efff"/>
<rect x="553" y="251" width="12" height="5" fill="#00ffff"/>
<rect x="565" y="251" width="13" height="5" fill="#00e7e7"/>
<rect x="578" y="251" width="12" height="5" fill="#00cdcd"/>
<rect x="590" y="251" width="12" height="5" fill="#00b4b4"/>
<rect x="602" y="251" width="13" height="5" fill="#009a9a"/>
<rect x="0" y="256" width="13" height="6" fill="#008080"/>
<rect x="13" y="256" width="12" height="6" fill="#009a9a"/>
<rect x="25" y="256" width="12" height="6" fill="#00b3b3"/>
<rect x="37" y="256" width="13" height="6" fill="#00cbcb"/>
<rect x="50" y="256" width="12" height="6" fill="#00e3e3"/>
<rect x="62" y="256" width="12" height="6" fill="#00fafa"/>
<rect x="74" y="256" width="13" height="6" fill="#00f3ff"/>
<rect x="87" y="256" width="12" height="6" fill="#00e5ff"/>
<rect x="99" y="256" width="12" height="6" fill="#00d7ff"/>
<rect x="111" y="256" width="12" height="6" fill="#00c9ff"/>
<rect x="123" y="256" width="13" height="6" fill="#00bcff"/>
<rect x="136" y="256" width="12" height="6" fill="#00b0ff"/>
<rect x="148" y="256" width="12" height="6" fill="#00a5ff"/>
<rect x="160" y="256" width="12" height="6" fill="#009aff"/>
<rect x="172" y="256" width="13" height="6" fill="#0090ff"/>
<rect x="185" y="256" width="12" height="6" fill="#0087ff"/>
<rect x="197" y="256" width="12" height="6" fill="#007eff"/>
<rect x="209" y="256" width="13" height="6" fill="#0077ff"/>
<rect x="222" y="256" width="12" height="6" fill="#0070ff"/>
<rect x="234" y="256" width="12" height="6" fill="#006aff"/>
<rect x="246" y="256" width="12" height="6" fill="#0065ff"/>
<rect x="258" y="256" width="13" height="6" fill="#0061ff"/>
<rect x="271" y="256" width="12" height="6" fill="#005eff"/>
<rect x="283" y="256" width="12" height="6" fill="#005cff"/>
<rect x="295" y="256" width="25" height="6" fill="#005bff"/>
<rect x="320" y="256" width="12" height="6" fill="#005cff"/>
<rect x="332" y="256" width="12" height="6" fill="#005eff"/>
<rect x="344" y="256" width="13" height="6" fill="#0061ff"/>
<rect x="357" y="256" width="12" height="6" fill="#0065ff"/>
<rect x="369" y="256" width="12" height="6" fill="#006aff"/>
<rect x="381" y="256" width="12" height="6" fill="#0070ff"/>
<rect x="393" y="256" width="13" height="6" fill="#0077ff"/>
<rect x="406" y="256" width="12" height="6" fill="#007eff"/>
<rect x="418" y="256" width="12" height="6" fill="#0087ff"/>
<rect x="430" y="256" width="13" height="6" fill="#0090ff"/>
<rect x="443" y="256" width="12" height="6" fill="#009aff"/>
<rect x="455" y="256" width="12" height="6" fill="#00a5ff"/>
<rect x="467" y="256" width="12" height="6" fill="#00b0ff"/>
<rect x="479" y="256" width="13" height="6" fill="#00bcff"/>
<rect x="492" y="256" width="12" height="6" fill="#00c9ff"/>
<rect x="504" y="256" width="12" height="6" fill="#00d7ff"/>
<rect x="516" y="256" width="12" height="6" fill="#00e5ff"/>
<rect x="528" y="256" width="13" height="6" fill="#00f3ff"/>
<rect x="541" y="256" width="12" height="6" fill="#00fafa"/>
<rect x="553" y="256" width="12" height="6" fill="#00e3e3"/>
<rect x="565" y="256" width="13" height="6" fill="#00cbcb"/>
<rect x="578" y="256" width="12" height="6" fill="#00b3b3"/>
<rect x="590" y="256" width="12" height="6" fill="#009a9a"/>
<rect x="602" y="256" width="13" height="6" fill="#008080"/>
</svg>
<svg class="a" style="left:0;top:500px" width="808" height="377" viewBox="0 500 808 377" font-family="DejaVu Sans, Liberation Sans, sans-serif" font-size="12">
<path d="M97.5 534V795M89 792.5H97M93 782.5H97M93 772.5H97M93 761.5H97M93 751.5H97M89 740.5H97M93 730.5H97M93 719.5H97M93 709.5H97M93 698.5H97M89 688.5H97M93 678.5H97M93 667.5H97M93 657.5H97M93 646.5H97M89 636.5H97M93 625.5H97M93 615.5H97M93 604.5H97M93 594.5H97M89 584.5H97M93 573.5H97M93 563.5H97M93 552.5H97M93 542.5H97M102 800.5H716M102.5 801V809M122.5 801V805M141.5 801V805M161.5 801V805M181.5 801V805M201.5 801V809M220.5 801V805M240.5 801V805M260.5 801V805M280.5 801V805M299.5 801V809M319.5 801V805M339.5 801V805M359.5 801V805M378.5 801V805M398.5 801V809M418.5 801V805M438.5 801V805M457.5 801V805M477.5 801V805M497.5 801V809M517.5 801V805M536.5 801V805M556.5 801V805M576.5 801V805M596.5 801V809M615.5 801V805M635.5 801V805M655.5 801V805M675.5 801V805M694.5 801V809M714.5 801V805M733.5 534V795M734 782.5H738M734 769.5H740M734 756.5H738M734 743.5H742M734 730.5H738M734 717.5H740M734 704.5H738M734 691.5H742M734 678.5H738M734 664.5H740M734 651.5H738M734 638.5H742M734 625.5H738M734 612.5H740M734 599.5H738M734 586.5H742M734 573.5H738M734 560.5H740M734 547.5H738" stroke="#000" stroke-width="1" fill="none" shape-rendering="crispEdges"/>
<text x="85" y="797.1" text-anchor="end">0</text>
<text x="85" y="745.1" text-anchor="end">10</text>
<text x="85" y="693.1" text-anchor="end">20</text>
<text x="85" y="641.1" text-anchor="end">30</text>
<text x="85" y="589.1" text-anchor="end">40</text>
<text x="102.5" y="822.5" text-anchor="middle">200</text>
<text x="201.5" y="822.5" text-anchor="middle">300</text>
<text x="299.5" y="822.5" text-anchor="middle">400</text>
<text x="398.5" y="822.5" text-anchor="middle">500</text>
<text x="497.5" y="822.5" text-anchor="middle">600</text>
<text x="596.5" y="822.5" text-anchor="middle">700</text>
<text x="694.5" y="822.5" text-anchor="middle">800</text>
<text x="747" y="747.9">2</text>
<text x="747" y="695.7">4</text>
<text x="747" y="643.4">6</text>
<text x="747" y="591.2">8</text>
<text x="409" y="839.5" text-anchor="middle" font-size="14" letter-spacing="0.22">Channel Number</text>
<text transform="translate(48 664) rotate(-90)" text-anchor="middle" font-size="14" letter-spacing="0.25">Scan Level 0</text>
<text transform="translate(760 664.5) rotate(90)" text-anchor="middle" font-size="14" letter-spacing="0.1">Counts</text>
<defs><linearGradient id="cb" x1="0" y1="1" x2="0" y2="0"><stop offset="0.0" stop-color="#008080"/><stop offset="0.1" stop-color="#00ffff"/><stop offset="0.4" stop-color="#0000ff"/><stop offset="0.6" stop-color="#00ff00"/><stop offset="0.95" stop-color="#ffff00"/><stop offset="1.0" stop-color="#ff0000"/></linearGradient></defs>
<rect x="721" y="534" width="10" height="262" fill="url(#cb)"/>
<path d="M156.5 532V768.5H100" stroke="#00008b" stroke-width="1" fill="none" shape-rendering="crispEdges"/>
<rect x="160" y="772" width="110" height="14" fill="#fff" fill-opacity="0.78"/>
<text x="160.5" y="784" fill="#1a1a8c">253.69, 4.86, 1.83</text>
</svg>
</body></html>
